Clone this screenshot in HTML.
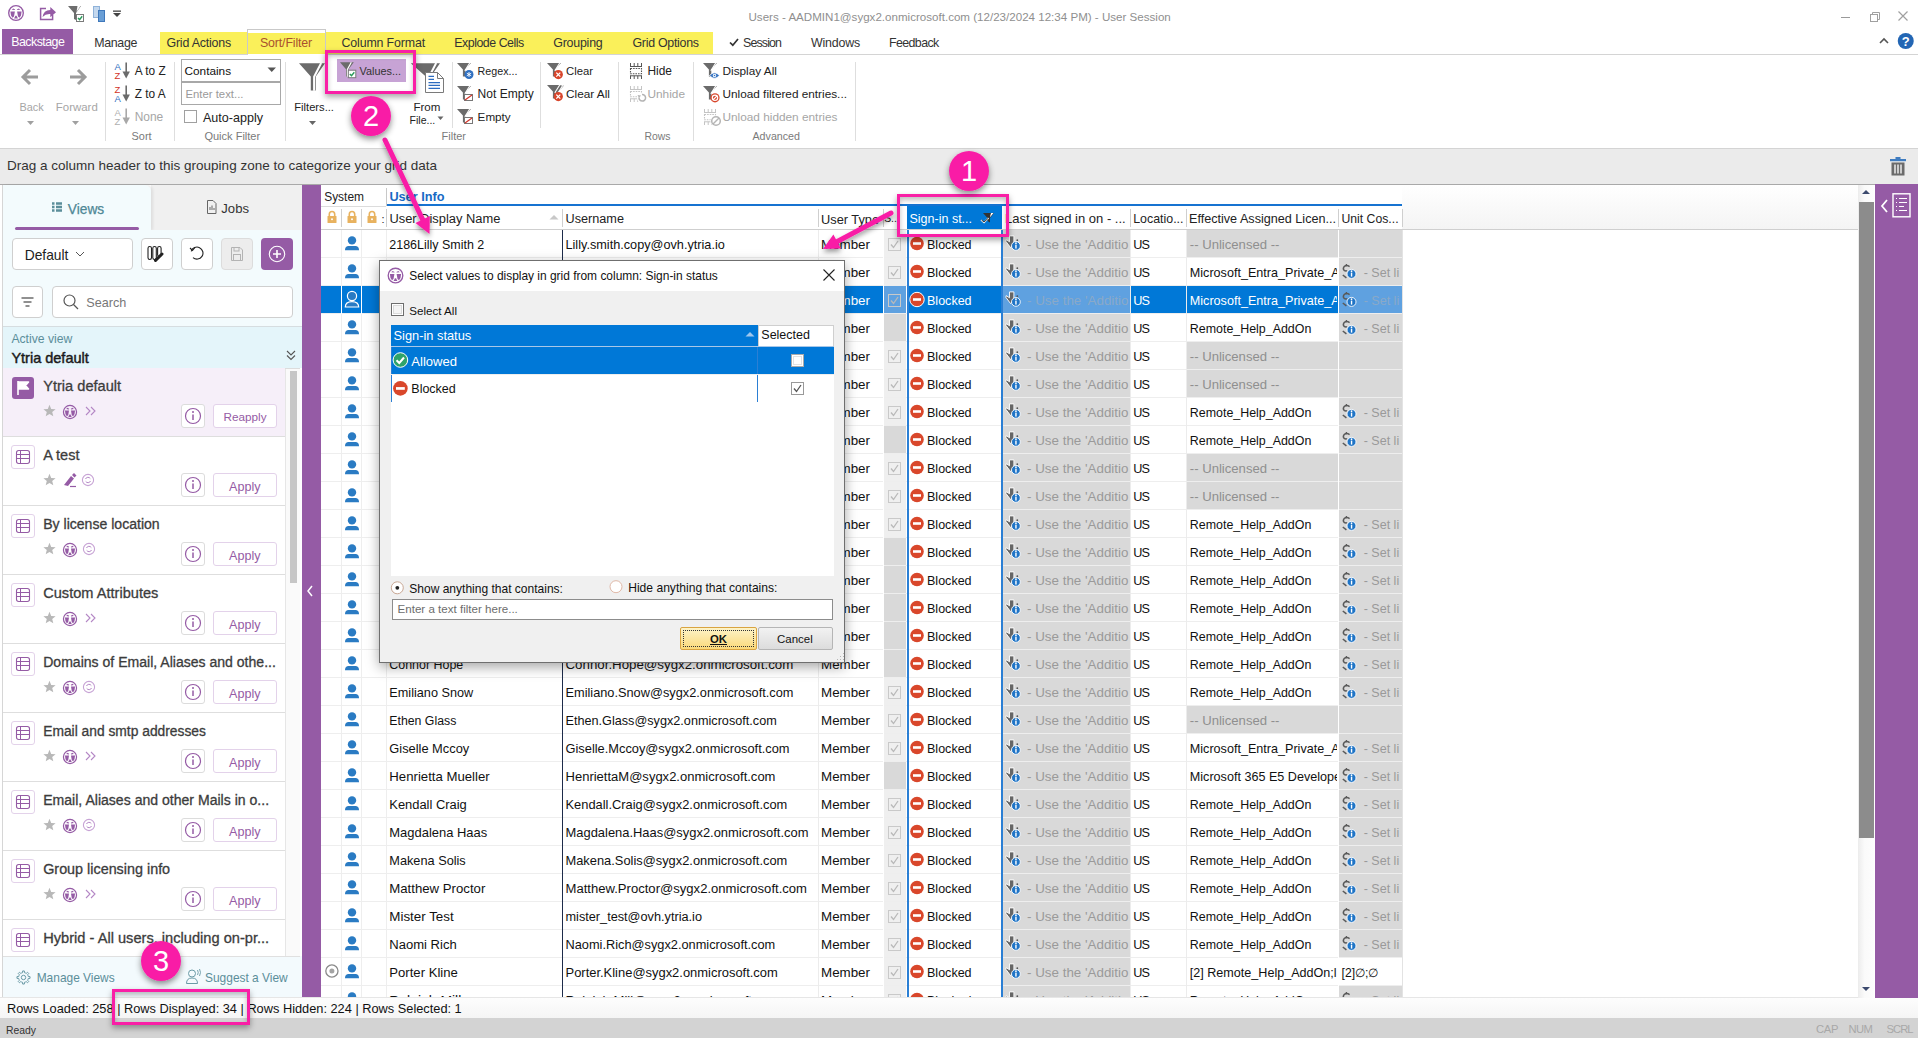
<!DOCTYPE html><html><head><meta charset="utf-8"><title>Users</title><style>
*{box-sizing:border-box;margin:0;padding:0}
html,body{width:1920px;height:1038px;overflow:hidden;background:#fff;font-family:"Liberation Sans",sans-serif;color:#1e1e1e}
.a{position:absolute}
.t{position:absolute;white-space:nowrap;line-height:1}
svg.i{position:absolute;overflow:visible}
</style></head><body>
<svg class="i" style="left:0px;top:0px;" width="32" height="28" viewBox="0 0 32 28"><circle cx="16" cy="13" r="7.30" fill="none" stroke="#955ba5" stroke-width="1.35"/><path d="M11.70 9.80 L13.20 8.40 L15.10 9.40 L14.80 10.10Z M20.30 9.80 L18.80 8.40 L16.90 9.40 L17.20 10.10Z" fill="#955ba5"/><path d="M10.40 11.40 L14.90 11.40 L14.00 16.60 L12.50 17.80 L11.00 15.40Z M21.60 11.40 L17.10 11.40 L18.00 16.60 L19.50 17.80 L21.00 15.40Z" fill="#955ba5"/><path d="M14.10 18.60 L17.90 18.60 L16.60 15.80 L15.40 15.80Z" fill="#955ba5"/></svg>
<svg class="i" style="left:38px;top:5px;" width="20" height="18" viewBox="0 0 20 18"><path d="M8 3.4 H2.6 V14.6 H14.6 V10" fill="none" stroke="#955ba5" stroke-width="1.5"/><path d="M4.5 12 Q5.5 5.2 12.3 5 V2 L18 7.2 L12.3 12.2 V9 Q7.6 8.6 4.5 12Z" fill="#955ba5"/></svg>
<svg class="i" style="left:66px;top:4px;" width="22" height="20" viewBox="0 0 22 20"><path d="M2 2 H15 L10 9 V16 L8 15 V9Z" fill="#6d6d6d"/><path d="M11.5 2 L14.5 2 L10.5 8" fill="#fff"/><rect x="10.5" y="10.5" width="7" height="7" fill="#fff" stroke="#7a7a7a" stroke-width="1"/><path d="M12 14 L13.6 15.6 L16.2 12.2" fill="none" stroke="#2a9a5a" stroke-width="1.4"/></svg>
<svg class="i" style="left:90px;top:4px;" width="20" height="20" viewBox="0 0 20 20"><rect x="3.5" y="2.5" width="6" height="11" fill="#c4d8ee" stroke="#8fb2d9" stroke-width="1"/><rect x="8.5" y="6.5" width="6" height="11" fill="#6a9fd6" stroke="#3f78bb" stroke-width="1"/></svg>
<svg class="i" style="left:110px;top:6px;" width="14" height="14" viewBox="0 0 14 14"><rect x="3" y="4.5" width="8" height="1.3" fill="#444"/><path d="M3 7 H11 L7 11Z" fill="#444"/></svg>
<div class="t" style="left:748.5px;top:12.0px;font-size:11.58px;color:#8f8f8f;font-weight:normal;">Users - AADMIN1@sygx2.onmicrosoft.com (12/23/2024 12:34 PM) - User Session</div>
<div class="a" style="left:1841px;top:17px;width:9px;height:1px;background:#9a9a9a;"></div>
<svg class="i" style="left:1868px;top:10px;" width="14" height="14" viewBox="0 0 14 14"><rect x="2.5" y="4.5" width="7" height="7" fill="none" stroke="#a0a0a0" stroke-width="1"/><path d="M4.5 4.5 V2.5 H11.5 V9.5 H9.5" fill="none" stroke="#a0a0a0" stroke-width="1"/></svg>
<svg class="i" style="left:1896px;top:9px;" width="14" height="14" viewBox="0 0 14 14"><path d="M2.5 2.5 L11.5 11.5 M11.5 2.5 L2.5 11.5" stroke="#a0a0a0" stroke-width="1.2"/></svg>
<div class="a" style="left:2px;top:29px;width:71px;height:25px;background:#955ba5;"></div>
<div class="t" style="left:11.3px;top:36.0px;font-size:12.40px;color:#fff;font-weight:normal;letter-spacing:-0.544px;">Backstage</div>
<div class="t" style="left:94.3px;top:37.0px;font-size:12.40px;color:#333;font-weight:normal;letter-spacing:-0.351px;">Manage</div>
<div class="a" style="left:160px;top:32px;width:553px;height:22px;background:#faf05a;"></div>
<div class="a" style="left:247px;top:29px;width:79px;height:26px;background:linear-gradient(#fff 0,#fff 3px,#faf05a 3px);border:1px solid #c9c9c9;border-bottom:none"></div>
<div class="t" style="left:166.5px;top:37.0px;font-size:12.40px;color:#333;font-weight:normal;letter-spacing:-0.196px;">Grid Actions</div>
<div class="t" style="left:260.0px;top:37.0px;font-size:12.40px;color:#a9502e;font-weight:normal;letter-spacing:-0.158px;">Sort/Filter</div>
<div class="t" style="left:341.5px;top:37.0px;font-size:12.40px;color:#333;font-weight:normal;letter-spacing:-0.149px;">Column Format</div>
<div class="t" style="left:454.3px;top:37.0px;font-size:12.40px;color:#333;font-weight:normal;letter-spacing:-0.486px;">Explode Cells</div>
<div class="t" style="left:553.3px;top:37.0px;font-size:12.40px;color:#333;font-weight:normal;letter-spacing:-0.226px;">Grouping</div>
<div class="t" style="left:632.5px;top:37.0px;font-size:12.40px;color:#333;font-weight:normal;letter-spacing:-0.283px;">Grid Options</div>
<svg class="i" style="left:728px;top:36px;" width="12" height="12" viewBox="0 0 12 12"><path d="M2 6.5 L4.8 9.2 L10 3" fill="none" stroke="#333" stroke-width="1.7"/></svg>
<div class="t" style="left:743.0px;top:37.0px;font-size:12.40px;color:#333;font-weight:normal;letter-spacing:-0.845px;">Session</div>
<div class="t" style="left:811.0px;top:37.0px;font-size:12.40px;color:#333;font-weight:normal;letter-spacing:-0.186px;">Windows</div>
<div class="t" style="left:889.0px;top:37.0px;font-size:12.40px;color:#333;font-weight:normal;letter-spacing:-0.594px;">Feedback</div>
<svg class="i" style="left:1878px;top:36px;" width="12" height="10" viewBox="0 0 12 10"><path d="M2 7 L6 3 L10 7" fill="none" stroke="#555" stroke-width="1.6"/></svg>
<svg class="i" style="left:1897px;top:33px;" width="18" height="18" viewBox="0 0 18 18"><circle cx="8.75" cy="8" r="8" fill="#2366b4"/><text x="8.75" y="12.6" text-anchor="middle" font-family="Liberation Sans" font-weight="bold" font-size="13" fill="#fff">?</text></svg>
<div class="a" style="left:0px;top:54px;width:1918px;height:1px;background:#d4d4d4;"></div>
<div class="a" style="left:248px;top:54px;width:77px;height:1px;background:#fff;"></div>
<svg class="i" style="left:20px;top:68px;" width="20" height="18" viewBox="0 0 20 18"><path d="M10 2 L3 9 L10 16 M3.5 9 H18" fill="none" stroke="#9c9c9c" stroke-width="3"/></svg>
<svg class="i" style="left:68px;top:68px;" width="20" height="18" viewBox="0 0 20 18"><path d="M10 2 L17 9 L10 16 M16.5 9 H2" fill="none" stroke="#9c9c9c" stroke-width="3"/></svg>
<div class="t" style="left:19.5px;top:102.0px;font-size:10.89px;color:#a6a6a6;font-weight:normal;">Back</div>
<div class="t" style="left:55.8px;top:102.0px;font-size:11.45px;color:#a6a6a6;font-weight:normal;">Forward</div>
<svg class="i" style="left:26px;top:120px;" width="10" height="6" viewBox="0 0 10 6"><path d="M1 1 H8 L4.5 5Z" fill="#a0a0a0"/></svg>
<svg class="i" style="left:71px;top:120px;" width="10" height="6" viewBox="0 0 10 6"><path d="M1 1 H8 L4.5 5Z" fill="#a0a0a0"/></svg>
<div class="a" style="left:105px;top:62px;width:1px;height:79px;background:#dedede;"></div>
<svg class="i" style="left:113px;top:61px;" width="20" height="20" viewBox="0 0 20 20"><text x="1.6" y="9.2" font-family="Liberation Sans" font-size="9.5" fill="#2f6fc0">A</text><text x="1.6" y="17.5" font-family="Liberation Sans" font-size="9.5" fill="#d2352a">Z</text><path d="M13.2 1.5 V13" stroke="#6b6b6b" stroke-width="1.6"/><path d="M9.5 10.5 L13.2 17.5 L16.9 10.5 Z" fill="#6b6b6b"/></svg>
<svg class="i" style="left:113px;top:84px;" width="20" height="20" viewBox="0 0 20 20"><text x="1.6" y="9.2" font-family="Liberation Sans" font-size="9.5" fill="#d2352a">Z</text><text x="1.6" y="17.5" font-family="Liberation Sans" font-size="9.5" fill="#2f6fc0">A</text><path d="M13.2 1.5 V13" stroke="#6b6b6b" stroke-width="1.6"/><path d="M9.5 10.5 L13.2 17.5 L16.9 10.5 Z" fill="#6b6b6b"/></svg>
<svg class="i" style="left:113px;top:107px;" width="20" height="20" viewBox="0 0 20 20"><text x="1.6" y="9.2" font-family="Liberation Sans" font-size="9.5" fill="#b0b0b0">A</text><text x="1.6" y="17.5" font-family="Liberation Sans" font-size="9.5" fill="#b0b0b0">Z</text><path d="M13.2 1.5 V13" stroke="#a8a8a8" stroke-width="1.6"/><path d="M9.5 10.5 L13.2 17.5 L16.9 10.5 Z" fill="#a8a8a8"/></svg>
<div class="t" style="left:134.7px;top:66.0px;font-size:11.87px;color:#222;font-weight:normal;">A to Z</div>
<div class="t" style="left:134.7px;top:89.0px;font-size:11.87px;color:#222;font-weight:normal;">Z to A</div>
<div class="t" style="left:134.7px;top:112.0px;font-size:11.96px;color:#a6a6a6;font-weight:normal;">None</div>
<div class="t" style="left:131.6px;top:131.0px;font-size:10.91px;color:#7a7a7a;font-weight:normal;">Sort</div>
<div class="a" style="left:174px;top:62px;width:1px;height:79px;background:#dedede;"></div>
<div class="a" style="left:181px;top:59px;width:100px;height:23px;background:#fff;border:1px solid #a8a8a8"></div>
<div class="t" style="left:184.5px;top:66.0px;font-size:11.81px;color:#111;font-weight:normal;">Contains</div>
<svg class="i" style="left:267px;top:67px;" width="10" height="6" viewBox="0 0 10 6"><path d="M0.5 0.5 H9 L4.75 5Z" fill="#555"/></svg>
<div class="a" style="left:181px;top:82px;width:100px;height:23px;background:#fff;border:1px solid #a8a8a8"></div>
<div class="t" style="left:185.5px;top:89.0px;font-size:11.34px;color:#9a9a9a;font-weight:normal;">Enter text...</div>
<div class="a" style="left:184px;top:110px;width:13px;height:13px;background:#fff;border:1px solid #a0a0a0"></div>
<div class="t" style="left:203.0px;top:112.0px;font-size:12.55px;color:#222;font-weight:normal;">Auto-apply</div>
<div class="t" style="left:204.4px;top:131.0px;font-size:11.04px;color:#7a7a7a;font-weight:normal;">Quick Filter</div>
<div class="a" style="left:285px;top:62px;width:1px;height:79px;background:#dedede;"></div>
<svg class="i" style="left:296px;top:60px;" width="32" height="34" viewBox="0 0 32 34"><path d="M3 3.3 H29 L19.8 16.5 V30.6 H14.8 V16.5 Z" fill="#6b6b6b"/><path d="M25.2 3 L18.1 16.8 V30.8" fill="none" stroke="#fff" stroke-width="2"/></svg>
<div class="t" style="left:294.3px;top:102.0px;font-size:11.17px;color:#222;font-weight:normal;">Filters...</div>
<svg class="i" style="left:308px;top:120px;" width="10" height="6" viewBox="0 0 10 6"><path d="M1 1 H8 L4.5 5Z" fill="#666"/></svg>
<div class="a" style="left:337px;top:59px;width:69px;height:23px;background:#c7a3d5;"></div>
<svg class="i" style="left:338px;top:61px;" width="20" height="20" viewBox="0 0 20 20"><path d="M2 1.3 H15.8 L10.6 8.3 V15.6 H8 V8.3 Z" fill="#6b6b6b"/><path d="M13.3 1.2 L9.4 8.5 V15.8" fill="none" stroke="#fff" stroke-width="1.2"/><rect x="10.3" y="9.2" width="7.5" height="7.5" fill="#fff" stroke="#7a7a7a" stroke-width="1"/><path d="M11.8 12.9 L13.5 14.6 L16.3 11.2" fill="none" stroke="#2a9a5a" stroke-width="1.4"/></svg>
<div class="t" style="left:359.5px;top:66.0px;font-size:10.87px;color:#333;font-weight:normal;">Values...</div>
<svg class="i" style="left:408px;top:60px;" width="40" height="36" viewBox="0 0 40 36"><path d="M2.8 3.3 H32 L22.8 16.5 V30.6 H17.8 V16.5 Z" fill="#6b6b6b"/><path d="M28.2 3 L21.1 16.8 V30.8" fill="none" stroke="#fff" stroke-width="2"/><path d="M17.5 12.5 H29.5 L35.5 18.5 V32.5 H17.5Z" fill="#fff" stroke="#7a7a7a" stroke-width="1"/><path d="M29.5 12.5 V18.5 H35.5" fill="none" stroke="#7a7a7a" stroke-width="1"/><path d="M20.5 16.4 H26 M20.5 19.3 H26 M20.5 22.7 H32 M20.5 25.3 H32 M20.5 28.3 H32" stroke="#2d6cc0" stroke-width="1.2"/></svg>
<div class="t" style="left:413.4px;top:102.0px;font-size:11.57px;color:#222;font-weight:normal;">From</div>
<div class="t" style="left:409.5px;top:115.0px;font-size:10.55px;color:#222;font-weight:normal;">File...</div>
<svg class="i" style="left:437px;top:116px;" width="8" height="5" viewBox="0 0 8 5"><path d="M0.5 0.5 H6.5 L3.5 4Z" fill="#666"/></svg>
<div class="a" style="left:452px;top:62px;width:1px;height:66px;background:#dedede;"></div>
<svg class="i" style="left:456px;top:61px;" width="20" height="20" viewBox="0 0 20 20"><path d="M1 2 H15 L9.3 8.6 V15.6 H6.9 V8.6 Z" fill="#6b6b6b"/><path d="M14.2 1.2 L8.8 9.8" stroke="#fff" stroke-width="1.1"/><circle cx="13" cy="13.5" r="4.5" fill="#2f6fc0"/><path d="M13 11 V16 M10.8 12.2 L15.2 14.8 M15.2 12.2 L10.8 14.8" stroke="#fff" stroke-width="0.9"/></svg>
<svg class="i" style="left:456px;top:84px;" width="20" height="20" viewBox="0 0 20 20"><path d="M1 2 H15 L9.3 8.6 V15.6 H6.9 V8.6 Z" fill="#6b6b6b"/><path d="M14.2 1.2 L8.8 9.8" stroke="#fff" stroke-width="1.1"/><rect x="8.5" y="10.5" width="8" height="6" fill="#fff" stroke="#777" stroke-width="1"/><path d="M9 16 L16 11" stroke="#d2352a" stroke-width="1.2"/></svg>
<svg class="i" style="left:456px;top:107px;" width="20" height="20" viewBox="0 0 20 20"><path d="M1 2 H15 L9.3 8.6 V15.6 H6.9 V8.6 Z" fill="#6b6b6b"/><path d="M14.2 1.2 L8.8 9.8" stroke="#fff" stroke-width="1.1"/><rect x="8.5" y="10.5" width="8" height="6" fill="#fff" stroke="#777" stroke-width="1"/><path d="M9 16 L16 11" stroke="#d2352a" stroke-width="1.2"/></svg>
<div class="t" style="left:477.6px;top:66.0px;font-size:10.69px;color:#222;font-weight:normal;">Regex...</div>
<div class="t" style="left:477.6px;top:88.0px;font-size:12.04px;color:#222;font-weight:normal;">Not Empty</div>
<div class="t" style="left:477.6px;top:111.0px;font-size:11.68px;color:#222;font-weight:normal;">Empty</div>
<div class="t" style="left:441.6px;top:131.0px;font-size:10.98px;color:#7a7a7a;font-weight:normal;">Filter</div>
<div class="a" style="left:540px;top:62px;width:1px;height:66px;background:#dedede;"></div>
<svg class="i" style="left:546px;top:61px;" width="20" height="20" viewBox="0 0 20 20"><path d="M1 2 H15 L9.3 8.6 V15.6 H6.9 V8.6 Z" fill="#6b6b6b"/><path d="M14.2 1.2 L8.8 9.8" stroke="#fff" stroke-width="1.1"/><circle cx="12.3" cy="13.6" r="4.6" fill="#d8452b"/><path d="M10.3 11.6 L14.3 15.6 M14.3 11.6 L10.3 15.6" stroke="#fff" stroke-width="1.3"/></svg>
<svg class="i" style="left:546px;top:83px;" width="20" height="20" viewBox="0 0 20 20"><path d="M4 2.5 H18 L12.3 9.1 V16.1 H9.9 V9.1 Z" fill="#6b6b6b"/><path d="M17.2 1.7 L11.8 10.3" stroke="#fff" stroke-width="1.1"/><path d="M1 2 H15 L9.3 8.6 V15.6 H6.9 V8.6 Z" fill="#6b6b6b"/><path d="M14.2 1.2 L8.8 9.8" stroke="#fff" stroke-width="1.1"/><circle cx="12.3" cy="13.6" r="4.6" fill="#d8452b"/><path d="M10.3 11.6 L14.3 15.6 M14.3 11.6 L10.3 15.6" stroke="#fff" stroke-width="1.3"/></svg>
<div class="t" style="left:566.0px;top:66.0px;font-size:11.30px;color:#222;font-weight:normal;">Clear</div>
<div class="t" style="left:566.0px;top:89.0px;font-size:11.82px;color:#222;font-weight:normal;">Clear All</div>
<div class="a" style="left:618px;top:62px;width:1px;height:79px;background:#dedede;"></div>
<svg class="i" style="left:628px;top:61px;" width="20" height="20" viewBox="0 0 20 20"><path d="M2.5 2 V5.5 M6.2 2 V5.5 M9.8 2 V5.5 M13.5 2 V5.5 M2 5.5 H14 M2 14.8 H14 M2.5 14.8 V18 M6.2 14.8 V18 M9.8 14.8 V18 M13.5 14.8 V18" stroke="#555" stroke-width="1"/><rect x="2.5" y="7.5" width="11" height="5.3" fill="none" stroke="#555" stroke-width="1.1" stroke-dasharray="1.6 1"/></svg>
<svg class="i" style="left:628px;top:84px;" width="20" height="20" viewBox="0 0 20 20"><path d="M2.5 2 V5.5 M6.2 2 V5.5 M9.8 2 V5.5 M13.5 2 V5.5 M2 5.5 H14 M2 14.8 H14 M2.5 14.8 V18 M6.2 14.8 V18 M9.8 14.8 V18 M13.5 14.8 V18" stroke="#c4c4c4" stroke-width="1"/><rect x="2.5" y="7.5" width="11" height="5.3" fill="none" stroke="#c4c4c4" stroke-width="1.1" stroke-dasharray="1.6 1"/><circle cx="14" cy="14" r="5" fill="#fff"/><path d="M11 13.5 A3.3 3.3 0 1 0 14 10.5" fill="none" stroke="#b5b5b5" stroke-width="1.5"/><path d="M9.5 11 L11 14 L13 11.5Z" fill="#b5b5b5"/></svg>
<div class="t" style="left:647.5px;top:66.0px;font-size:11.91px;color:#222;font-weight:normal;">Hide</div>
<div class="t" style="left:647.5px;top:89.0px;font-size:11.83px;color:#a6a6a6;font-weight:normal;">Unhide</div>
<div class="t" style="left:644.5px;top:132.0px;font-size:10.40px;color:#7a7a7a;font-weight:normal;">Rows</div>
<div class="a" style="left:693px;top:62px;width:1px;height:79px;background:#dedede;"></div>
<svg class="i" style="left:702px;top:61px;" width="20" height="20" viewBox="0 0 20 20"><path d="M1 2 H15 L9.3 8.6 V15.6 H6.9 V8.6 Z" fill="#6b6b6b"/><path d="M14.2 1.2 L8.8 9.8" stroke="#fff" stroke-width="1.1"/><path d="M7.5 14.5 Q12.5 9 17.5 14.5 Q12.5 20 7.5 14.5Z" fill="#2f6fc0" stroke="#fff" stroke-width="0.8"/><circle cx="12.5" cy="14.5" r="1.7" fill="#fff"/><circle cx="12.5" cy="14.5" r="0.8" fill="#2f6fc0"/></svg>
<svg class="i" style="left:702px;top:84px;" width="20" height="20" viewBox="0 0 20 20"><path d="M1 2 H15 L9.3 8.6 V15.6 H6.9 V8.6 Z" fill="#6b6b6b"/><path d="M14.2 1.2 L8.8 9.8" stroke="#fff" stroke-width="1.1"/><circle cx="13" cy="13.8" r="4.6" fill="#d8452b"/><circle cx="13" cy="13.8" r="2.7" fill="none" stroke="#fff" stroke-width="1.2"/><path d="M11 15.8 L15 11.8" stroke="#fff" stroke-width="1.2"/></svg>
<svg class="i" style="left:702px;top:107px;" width="20" height="20" viewBox="0 0 20 20"><path d="M2.5 2 V5.5 M6.2 2 V5.5 M9.8 2 V5.5 M13.5 2 V5.5 M2 5.5 H14 M2 14.8 H14 M2.5 14.8 V18 M6.2 14.8 V18 M9.8 14.8 V18 M13.5 14.8 V18" stroke="#c4c4c4" stroke-width="1"/><rect x="2.5" y="7.5" width="11" height="5.3" fill="none" stroke="#c4c4c4" stroke-width="1.1" stroke-dasharray="1.6 1"/><circle cx="14" cy="14" r="5.6" fill="#fff"/><circle cx="14" cy="14" r="4.3" fill="none" stroke="#b5b5b5" stroke-width="1.5"/><path d="M11 17 L17 11" stroke="#b5b5b5" stroke-width="1.5"/></svg>
<div class="t" style="left:722.5px;top:66.0px;font-size:11.81px;color:#222;font-weight:normal;">Display All</div>
<div class="t" style="left:722.5px;top:88.0px;font-size:11.79px;color:#222;font-weight:normal;">Unload filtered entries...</div>
<div class="t" style="left:722.5px;top:112.0px;font-size:11.82px;color:#a6a6a6;font-weight:normal;">Unload hidden entries</div>
<div class="t" style="left:752.5px;top:131.0px;font-size:10.68px;color:#7a7a7a;font-weight:normal;">Advanced</div>
<div class="a" style="left:855px;top:62px;width:1px;height:79px;background:#dedede;"></div>
<div class="a" style="left:0px;top:148px;width:1918px;height:1px;background:#d4d4d4;"></div>
<div class="a" style="left:0px;top:149px;width:1918px;height:35px;background:#ebebeb;"></div>
<div class="t" style="left:7.0px;top:159.0px;font-size:13.50px;color:#333;font-weight:normal;">Drag a column header to this grouping zone to categorize your grid data</div>
<div class="a" style="left:0px;top:184px;width:1918px;height:1px;background:#a9a9a9;"></div>
<svg class="i" style="left:1888px;top:156px;" width="20" height="22" viewBox="0 0 20 22"><rect x="2" y="3" width="16" height="2.2" fill="#3f7cc0"/><rect x="7.5" y="1" width="5" height="2.5" fill="#3f7cc0"/><rect x="3.5" y="6.5" width="13" height="13" fill="#6b6b6b"/><path d="M7 8.5 V17.5 M10 8.5 V17.5 M13 8.5 V17.5" stroke="#fff" stroke-width="1.3"/></svg>
<div class="a" style="left:2px;top:185px;width:300px;height:812px;background:#fff;"></div>
<div class="a" style="left:2px;top:185px;width:1px;height:812px;background:#d8d8d8;"></div>
<div class="a" style="left:151px;top:185px;width:151px;height:45px;background:#f0f0f0;"></div>
<div class="a" style="left:3px;top:185px;width:148px;height:45px;background:#f3fbfd;border-top-right-radius:6px;box-shadow:2px 0 3px rgba(0,0,0,0.08)"></div>
<div class="a" style="left:15px;top:227px;width:124px;height:3px;background:#955ba5;border-radius:2px"></div>
<svg class="i" style="left:50px;top:201px;" width="14" height="14" viewBox="0 0 14 14"><path d="M2 2.5 H4.5 M6 2.5 H12 M2 6 H4.5 M6 6 H12 M2 9.5 H4.5 M6 9.5 H12" stroke="#5b8e9a" stroke-width="2.6"/></svg>
<div class="t" style="left:67.8px;top:203.0px;font-size:13.74px;color:#4f8896;font-weight:normal;-webkit-text-stroke:0.25px #4f8896">Views</div>
<svg class="i" style="left:204px;top:199px;" width="14" height="16" viewBox="0 0 14 16"><path d="M3.5 1.5 H9 L12 4.5 V14.5 H3.5Z" fill="none" stroke="#666" stroke-width="1"/><path d="M6 11 V8 M8 11 V6.5 M10 11 V9" stroke="#666" stroke-width="1"/></svg>
<div class="t" style="left:221.3px;top:202.0px;font-size:13.11px;color:#333;font-weight:normal;">Jobs</div>
<div class="a" style="left:2px;top:230px;width:300px;height:97px;background:#f3fbfd;"></div>
<div class="a" style="left:12px;top:238px;width:121px;height:32px;background:#fff;border:1px solid #cfcfcf;border-radius:4px"></div>
<div class="t" style="left:24.7px;top:249.0px;font-size:13.79px;color:#222;font-weight:normal;">Default</div>
<svg class="i" style="left:74px;top:250px;" width="12" height="8" viewBox="0 0 12 8"><path d="M2 2 L6 6 L10 2" fill="none" stroke="#555" stroke-width="1"/></svg>
<div class="a" style="left:141px;top:238px;width:32px;height:32px;background:#fff;border:1px solid #cfcfcf;border-radius:4px"></div>
<svg class="i" style="left:146px;top:245px;" width="22" height="20" viewBox="0 0 22 20"><rect x="2" y="1.5" width="3.5" height="13" rx="1.7" fill="none" stroke="#222" stroke-width="1.1"/><rect x="6.8" y="1.5" width="3.5" height="13" rx="1.7" fill="none" stroke="#222" stroke-width="1.1"/><rect x="11.6" y="1.5" width="3.5" height="10" rx="1.7" fill="none" stroke="#222" stroke-width="1.1"/><path d="M9.5 15.5 L16 9" stroke="#222" stroke-width="3" stroke-linecap="round"/></svg>
<div class="a" style="left:181px;top:238px;width:32px;height:32px;background:#fff;border:1px solid #cfcfcf;border-radius:4px"></div>
<svg class="i" style="left:187px;top:244px;" width="20" height="20" viewBox="0 0 20 20"><path d="M5.5 5.5 A6 6 0 1 1 5 12" fill="none" stroke="#222" stroke-width="1.1" transform="rotate(-20 10 10)"/><path d="M3 4 L5.5 6.5 L8 3.5" fill="none" stroke="#222" stroke-width="1.1"/></svg>
<div class="a" style="left:221px;top:238px;width:32px;height:32px;background:#ededed;border:1px solid #dcdcdc;border-radius:4px"></div>
<svg class="i" style="left:227px;top:244px;" width="20" height="20" viewBox="0 0 20 20"><path d="M4.5 3.5 H13 L15.5 6 V16.5 H4.5Z" fill="none" stroke="#b3b3b3" stroke-width="1"/><rect x="7" y="3.5" width="5" height="3.5" fill="none" stroke="#b3b3b3" stroke-width="1"/><rect x="6.5" y="10.5" width="7" height="6" fill="none" stroke="#b3b3b3" stroke-width="1"/></svg>
<div class="a" style="left:261px;top:238px;width:32px;height:32px;background:#955ba5;border-radius:4px"></div>
<svg class="i" style="left:267px;top:244px;" width="20" height="20" viewBox="0 0 20 20"><circle cx="10" cy="10" r="7.7" fill="none" stroke="#fff" stroke-width="1.1"/><path d="M10 6 V14 M6 10 H14" stroke="#fff" stroke-width="1.6"/></svg>
<div class="a" style="left:12px;top:286px;width:31px;height:32px;background:#fff;border:1px solid #cfcfcf;border-radius:4px"></div>
<svg class="i" style="left:18px;top:292px;" width="20" height="20" viewBox="0 0 20 20"><path d="M3.5 6 H15.5 M5.5 10 H13.5 M7.5 14 H11.5" stroke="#222" stroke-width="1.1"/></svg>
<div class="a" style="left:52px;top:286px;width:241px;height:32px;background:#fff;border:1px solid #cfcfcf;border-radius:4px"></div>
<svg class="i" style="left:61px;top:292px;" width="20" height="20" viewBox="0 0 20 20"><circle cx="8.5" cy="8.5" r="5.5" fill="none" stroke="#555" stroke-width="1.2"/><path d="M12.5 12.5 L17 17" stroke="#555" stroke-width="1.3"/></svg>
<div class="t" style="left:86.3px;top:297.0px;font-size:12.63px;color:#777;font-weight:normal;">Search</div>
<div class="a" style="left:2px;top:326px;width:300px;height:1px;background:#d6dde0;"></div>
<div class="a" style="left:2px;top:327px;width:300px;height:41px;background:#e4f5fa;"></div>
<div class="t" style="left:11.4px;top:333.0px;font-size:12.20px;color:#5b8e9a;font-weight:normal;">Active view</div>
<div class="t" style="left:11.4px;top:351.0px;font-size:14.50px;color:#1a1a1a;font-weight:normal;-webkit-text-stroke:0.45px #1a1a1a">Ytria default</div>
<svg class="i" style="left:284px;top:348px;" width="14" height="14" viewBox="0 0 14 14"><path d="M3 3 L7 7 L11 3 M3 7.5 L7 11.5 L11 7.5" fill="none" stroke="#555" stroke-width="1.1"/></svg>
<div class="a" style="left:2px;top:368px;width:298px;height:1px;background:#dcdcdc;"></div>
<div class="a" style="left:2px;top:368px;width:283px;height:68px;background:#f6eff9;"></div>
<div class="a" style="left:12px;top:377px;width:22px;height:22px;background:#955ba5;border-radius:3px"></div>
<svg class="i" style="left:12px;top:377px;" width="22" height="22" viewBox="0 0 22 22"><path d="M6 4 V18 M6 5 H16.5 L13.5 8.5 L16.5 12 H6" fill="#fff" stroke="#fff" stroke-width="1.6" stroke-linejoin="round"/></svg>
<div class="t" style="left:43.2px;top:379.0px;font-size:14.62px;color:#3c3c3c;font-weight:normal;-webkit-text-stroke:0.3px #3c3c3c">Ytria default</div>
<svg class="i" style="left:43px;top:404px;" width="14" height="14" viewBox="0 0 14 14"><path d="M6.5 0.8 L8.2 5 L12.6 5.2 L9.2 8 L10.3 12.3 L6.5 9.9 L2.7 12.3 L3.8 8 L0.4 5.2 L4.8 5Z" fill="#b8b8b8"/></svg>
<svg class="i" style="left:62px;top:404px;" width="16" height="16" viewBox="0 0 16 16"><circle cx="8" cy="8" r="6.57" fill="none" stroke="#955ba5" stroke-width="1.22"/><path d="M4.13 5.12 L5.48 3.86 L7.19 4.76 L6.92 5.39Z M11.87 5.12 L10.52 3.86 L8.81 4.76 L9.08 5.39Z" fill="#955ba5"/><path d="M2.96 6.56 L7.01 6.56 L6.20 11.24 L4.85 12.32 L3.50 10.16Z M13.04 6.56 L8.99 6.56 L9.80 11.24 L11.15 12.32 L12.50 10.16Z" fill="#955ba5"/><path d="M6.29 13.04 L9.71 13.04 L8.54 10.52 L7.46 10.52Z" fill="#955ba5"/></svg>
<svg class="i" style="left:83px;top:405px;" width="14" height="12" viewBox="0 0 14 12"><path d="M3 2 L7 6 L3 10 M8 2 L12 6 L8 10" fill="none" stroke="#b487c5" stroke-width="1.1"/></svg>
<div class="a" style="left:181px;top:404px;width:24px;height:24px;background:#fff;border:1px solid #dcdcdc;border-radius:3px"></div>
<svg class="i" style="left:181px;top:404px;" width="24" height="24" viewBox="0 0 24 24"><circle cx="12" cy="12" r="7.5" fill="none" stroke="#955ba5" stroke-width="1.2"/><path d="M12 10.5 V16" stroke="#955ba5" stroke-width="1.5"/><circle cx="12" cy="8" r="1" fill="#955ba5"/></svg>
<div class="a" style="left:213px;top:404px;width:64px;height:24px;background:#fff;border:1px solid #e3d2ea;border-radius:3px"></div>
<div class="t" style="left:223.5px;top:411.0px;font-size:11.72px;color:#955ba5;font-weight:normal;">Reapply</div>
<div class="a" style="left:2px;top:436px;width:283px;height:1px;background:#dedede;"></div>
<div class="a" style="left:11px;top:445px;width:24px;height:24px;background:#fff;border:1px solid #e3d2ea;border-radius:3px"></div>
<svg class="i" style="left:11px;top:445px;" width="24" height="24" viewBox="0 0 24 24"><rect x="5.5" y="5.5" width="13" height="13" rx="2.2" fill="none" stroke="#955ba5" stroke-width="1.1"/><path d="M5.5 9.5 H18.5 M5.5 13.5 H18.5 M9.5 5.5 V18.5" stroke="#955ba5" stroke-width="1"/></svg>
<div class="t" style="left:43.2px;top:448.0px;font-size:14.51px;color:#3c3c3c;font-weight:normal;-webkit-text-stroke:0.3px #3c3c3c">A test</div>
<svg class="i" style="left:43px;top:473px;" width="14" height="14" viewBox="0 0 14 14"><path d="M6.5 0.8 L8.2 5 L12.6 5.2 L9.2 8 L10.3 12.3 L6.5 9.9 L2.7 12.3 L3.8 8 L0.4 5.2 L4.8 5Z" fill="#b8b8b8"/></svg>
<svg class="i" style="left:62px;top:472px;" width="16" height="16" viewBox="0 0 16 16"><path d="M2 13 L9 4 L12 6.5 L6 14Z M10 3 L12 1 L14.5 3.5 L12.5 5.5Z" fill="#955ba5"/><path d="M8 14.5 H14" stroke="#955ba5" stroke-width="1.2"/></svg>
<svg class="i" style="left:81px;top:473px;" width="14" height="14" viewBox="0 0 14 14"><circle cx="7" cy="7" r="5.6" fill="none" stroke="#c7a3d5" stroke-width="1.1"/><path d="M4.5 6 A2.7 2.7 0 0 1 9.3 5.6 M9.5 8 A2.7 2.7 0 0 1 4.7 8.4" fill="none" stroke="#b487c5" stroke-width="1"/></svg>
<div class="a" style="left:181px;top:473px;width:24px;height:24px;background:#fff;border:1px solid #dcdcdc;border-radius:3px"></div>
<svg class="i" style="left:181px;top:473px;" width="24" height="24" viewBox="0 0 24 24"><circle cx="12" cy="12" r="7.5" fill="none" stroke="#955ba5" stroke-width="1.2"/><path d="M12 10.5 V16" stroke="#955ba5" stroke-width="1.5"/><circle cx="12" cy="8" r="1" fill="#955ba5"/></svg>
<div class="a" style="left:213px;top:473px;width:64px;height:24px;background:#fff;border:1px solid #e3d2ea;border-radius:3px"></div>
<div class="t" style="left:229.0px;top:481.0px;font-size:12.59px;color:#955ba5;font-weight:normal;">Apply</div>
<div class="a" style="left:2px;top:505px;width:283px;height:1px;background:#dedede;"></div>
<div class="a" style="left:11px;top:514px;width:24px;height:24px;background:#fff;border:1px solid #e3d2ea;border-radius:3px"></div>
<svg class="i" style="left:11px;top:514px;" width="24" height="24" viewBox="0 0 24 24"><rect x="5.5" y="5.5" width="13" height="13" rx="2.2" fill="none" stroke="#955ba5" stroke-width="1.1"/><path d="M5.5 9.5 H18.5 M5.5 13.5 H18.5 M9.5 5.5 V18.5" stroke="#955ba5" stroke-width="1"/></svg>
<div class="t" style="left:43.2px;top:517.0px;font-size:14.07px;color:#3c3c3c;font-weight:normal;-webkit-text-stroke:0.3px #3c3c3c">By license location</div>
<svg class="i" style="left:43px;top:542px;" width="14" height="14" viewBox="0 0 14 14"><path d="M6.5 0.8 L8.2 5 L12.6 5.2 L9.2 8 L10.3 12.3 L6.5 9.9 L2.7 12.3 L3.8 8 L0.4 5.2 L4.8 5Z" fill="#b8b8b8"/></svg>
<svg class="i" style="left:62px;top:542px;" width="16" height="16" viewBox="0 0 16 16"><circle cx="8" cy="8" r="6.57" fill="none" stroke="#955ba5" stroke-width="1.22"/><path d="M4.13 5.12 L5.48 3.86 L7.19 4.76 L6.92 5.39Z M11.87 5.12 L10.52 3.86 L8.81 4.76 L9.08 5.39Z" fill="#955ba5"/><path d="M2.96 6.56 L7.01 6.56 L6.20 11.24 L4.85 12.32 L3.50 10.16Z M13.04 6.56 L8.99 6.56 L9.80 11.24 L11.15 12.32 L12.50 10.16Z" fill="#955ba5"/><path d="M6.29 13.04 L9.71 13.04 L8.54 10.52 L7.46 10.52Z" fill="#955ba5"/></svg>
<svg class="i" style="left:82px;top:542px;" width="14" height="14" viewBox="0 0 14 14"><circle cx="7" cy="7" r="5.6" fill="none" stroke="#c7a3d5" stroke-width="1.1"/><path d="M4.5 6 A2.7 2.7 0 0 1 9.3 5.6 M9.5 8 A2.7 2.7 0 0 1 4.7 8.4" fill="none" stroke="#b487c5" stroke-width="1"/></svg>
<div class="a" style="left:181px;top:542px;width:24px;height:24px;background:#fff;border:1px solid #dcdcdc;border-radius:3px"></div>
<svg class="i" style="left:181px;top:542px;" width="24" height="24" viewBox="0 0 24 24"><circle cx="12" cy="12" r="7.5" fill="none" stroke="#955ba5" stroke-width="1.2"/><path d="M12 10.5 V16" stroke="#955ba5" stroke-width="1.5"/><circle cx="12" cy="8" r="1" fill="#955ba5"/></svg>
<div class="a" style="left:213px;top:542px;width:64px;height:24px;background:#fff;border:1px solid #e3d2ea;border-radius:3px"></div>
<div class="t" style="left:229.0px;top:550.0px;font-size:12.59px;color:#955ba5;font-weight:normal;">Apply</div>
<div class="a" style="left:2px;top:574px;width:283px;height:1px;background:#dedede;"></div>
<div class="a" style="left:11px;top:583px;width:24px;height:24px;background:#fff;border:1px solid #e3d2ea;border-radius:3px"></div>
<svg class="i" style="left:11px;top:583px;" width="24" height="24" viewBox="0 0 24 24"><rect x="5.5" y="5.5" width="13" height="13" rx="2.2" fill="none" stroke="#955ba5" stroke-width="1.1"/><path d="M5.5 9.5 H18.5 M5.5 13.5 H18.5 M9.5 5.5 V18.5" stroke="#955ba5" stroke-width="1"/></svg>
<div class="t" style="left:43.2px;top:586.0px;font-size:14.60px;color:#3c3c3c;font-weight:normal;-webkit-text-stroke:0.3px #3c3c3c">Custom Attributes</div>
<svg class="i" style="left:43px;top:611px;" width="14" height="14" viewBox="0 0 14 14"><path d="M6.5 0.8 L8.2 5 L12.6 5.2 L9.2 8 L10.3 12.3 L6.5 9.9 L2.7 12.3 L3.8 8 L0.4 5.2 L4.8 5Z" fill="#b8b8b8"/></svg>
<svg class="i" style="left:62px;top:611px;" width="16" height="16" viewBox="0 0 16 16"><circle cx="8" cy="8" r="6.57" fill="none" stroke="#955ba5" stroke-width="1.22"/><path d="M4.13 5.12 L5.48 3.86 L7.19 4.76 L6.92 5.39Z M11.87 5.12 L10.52 3.86 L8.81 4.76 L9.08 5.39Z" fill="#955ba5"/><path d="M2.96 6.56 L7.01 6.56 L6.20 11.24 L4.85 12.32 L3.50 10.16Z M13.04 6.56 L8.99 6.56 L9.80 11.24 L11.15 12.32 L12.50 10.16Z" fill="#955ba5"/><path d="M6.29 13.04 L9.71 13.04 L8.54 10.52 L7.46 10.52Z" fill="#955ba5"/></svg>
<svg class="i" style="left:83px;top:612px;" width="14" height="12" viewBox="0 0 14 12"><path d="M3 2 L7 6 L3 10 M8 2 L12 6 L8 10" fill="none" stroke="#b487c5" stroke-width="1.1"/></svg>
<div class="a" style="left:181px;top:611px;width:24px;height:24px;background:#fff;border:1px solid #dcdcdc;border-radius:3px"></div>
<svg class="i" style="left:181px;top:611px;" width="24" height="24" viewBox="0 0 24 24"><circle cx="12" cy="12" r="7.5" fill="none" stroke="#955ba5" stroke-width="1.2"/><path d="M12 10.5 V16" stroke="#955ba5" stroke-width="1.5"/><circle cx="12" cy="8" r="1" fill="#955ba5"/></svg>
<div class="a" style="left:213px;top:611px;width:64px;height:24px;background:#fff;border:1px solid #e3d2ea;border-radius:3px"></div>
<div class="t" style="left:229.0px;top:619.0px;font-size:12.59px;color:#955ba5;font-weight:normal;">Apply</div>
<div class="a" style="left:2px;top:643px;width:283px;height:1px;background:#dedede;"></div>
<div class="a" style="left:11px;top:652px;width:24px;height:24px;background:#fff;border:1px solid #e3d2ea;border-radius:3px"></div>
<svg class="i" style="left:11px;top:652px;" width="24" height="24" viewBox="0 0 24 24"><rect x="5.5" y="5.5" width="13" height="13" rx="2.2" fill="none" stroke="#955ba5" stroke-width="1.1"/><path d="M5.5 9.5 H18.5 M5.5 13.5 H18.5 M9.5 5.5 V18.5" stroke="#955ba5" stroke-width="1"/></svg>
<div class="t" style="left:43.2px;top:655.0px;font-size:14.05px;color:#3c3c3c;font-weight:normal;-webkit-text-stroke:0.3px #3c3c3c">Domains of Email, Aliases and othe...</div>
<svg class="i" style="left:43px;top:680px;" width="14" height="14" viewBox="0 0 14 14"><path d="M6.5 0.8 L8.2 5 L12.6 5.2 L9.2 8 L10.3 12.3 L6.5 9.9 L2.7 12.3 L3.8 8 L0.4 5.2 L4.8 5Z" fill="#b8b8b8"/></svg>
<svg class="i" style="left:62px;top:680px;" width="16" height="16" viewBox="0 0 16 16"><circle cx="8" cy="8" r="6.57" fill="none" stroke="#955ba5" stroke-width="1.22"/><path d="M4.13 5.12 L5.48 3.86 L7.19 4.76 L6.92 5.39Z M11.87 5.12 L10.52 3.86 L8.81 4.76 L9.08 5.39Z" fill="#955ba5"/><path d="M2.96 6.56 L7.01 6.56 L6.20 11.24 L4.85 12.32 L3.50 10.16Z M13.04 6.56 L8.99 6.56 L9.80 11.24 L11.15 12.32 L12.50 10.16Z" fill="#955ba5"/><path d="M6.29 13.04 L9.71 13.04 L8.54 10.52 L7.46 10.52Z" fill="#955ba5"/></svg>
<svg class="i" style="left:82px;top:680px;" width="14" height="14" viewBox="0 0 14 14"><circle cx="7" cy="7" r="5.6" fill="none" stroke="#c7a3d5" stroke-width="1.1"/><path d="M4.5 6 A2.7 2.7 0 0 1 9.3 5.6 M9.5 8 A2.7 2.7 0 0 1 4.7 8.4" fill="none" stroke="#b487c5" stroke-width="1"/></svg>
<div class="a" style="left:181px;top:680px;width:24px;height:24px;background:#fff;border:1px solid #dcdcdc;border-radius:3px"></div>
<svg class="i" style="left:181px;top:680px;" width="24" height="24" viewBox="0 0 24 24"><circle cx="12" cy="12" r="7.5" fill="none" stroke="#955ba5" stroke-width="1.2"/><path d="M12 10.5 V16" stroke="#955ba5" stroke-width="1.5"/><circle cx="12" cy="8" r="1" fill="#955ba5"/></svg>
<div class="a" style="left:213px;top:680px;width:64px;height:24px;background:#fff;border:1px solid #e3d2ea;border-radius:3px"></div>
<div class="t" style="left:229.0px;top:688.0px;font-size:12.59px;color:#955ba5;font-weight:normal;">Apply</div>
<div class="a" style="left:2px;top:712px;width:283px;height:1px;background:#dedede;"></div>
<div class="a" style="left:11px;top:721px;width:24px;height:24px;background:#fff;border:1px solid #e3d2ea;border-radius:3px"></div>
<svg class="i" style="left:11px;top:721px;" width="24" height="24" viewBox="0 0 24 24"><rect x="5.5" y="5.5" width="13" height="13" rx="2.2" fill="none" stroke="#955ba5" stroke-width="1.1"/><path d="M5.5 9.5 H18.5 M5.5 13.5 H18.5 M9.5 5.5 V18.5" stroke="#955ba5" stroke-width="1"/></svg>
<div class="t" style="left:43.2px;top:725.0px;font-size:13.82px;color:#3c3c3c;font-weight:normal;-webkit-text-stroke:0.3px #3c3c3c">Email and smtp addresses</div>
<svg class="i" style="left:43px;top:749px;" width="14" height="14" viewBox="0 0 14 14"><path d="M6.5 0.8 L8.2 5 L12.6 5.2 L9.2 8 L10.3 12.3 L6.5 9.9 L2.7 12.3 L3.8 8 L0.4 5.2 L4.8 5Z" fill="#b8b8b8"/></svg>
<svg class="i" style="left:62px;top:749px;" width="16" height="16" viewBox="0 0 16 16"><circle cx="8" cy="8" r="6.57" fill="none" stroke="#955ba5" stroke-width="1.22"/><path d="M4.13 5.12 L5.48 3.86 L7.19 4.76 L6.92 5.39Z M11.87 5.12 L10.52 3.86 L8.81 4.76 L9.08 5.39Z" fill="#955ba5"/><path d="M2.96 6.56 L7.01 6.56 L6.20 11.24 L4.85 12.32 L3.50 10.16Z M13.04 6.56 L8.99 6.56 L9.80 11.24 L11.15 12.32 L12.50 10.16Z" fill="#955ba5"/><path d="M6.29 13.04 L9.71 13.04 L8.54 10.52 L7.46 10.52Z" fill="#955ba5"/></svg>
<svg class="i" style="left:83px;top:750px;" width="14" height="12" viewBox="0 0 14 12"><path d="M3 2 L7 6 L3 10 M8 2 L12 6 L8 10" fill="none" stroke="#b487c5" stroke-width="1.1"/></svg>
<div class="a" style="left:181px;top:749px;width:24px;height:24px;background:#fff;border:1px solid #dcdcdc;border-radius:3px"></div>
<svg class="i" style="left:181px;top:749px;" width="24" height="24" viewBox="0 0 24 24"><circle cx="12" cy="12" r="7.5" fill="none" stroke="#955ba5" stroke-width="1.2"/><path d="M12 10.5 V16" stroke="#955ba5" stroke-width="1.5"/><circle cx="12" cy="8" r="1" fill="#955ba5"/></svg>
<div class="a" style="left:213px;top:749px;width:64px;height:24px;background:#fff;border:1px solid #e3d2ea;border-radius:3px"></div>
<div class="t" style="left:229.0px;top:757.0px;font-size:12.59px;color:#955ba5;font-weight:normal;">Apply</div>
<div class="a" style="left:2px;top:781px;width:283px;height:1px;background:#dedede;"></div>
<div class="a" style="left:11px;top:790px;width:24px;height:24px;background:#fff;border:1px solid #e3d2ea;border-radius:3px"></div>
<svg class="i" style="left:11px;top:790px;" width="24" height="24" viewBox="0 0 24 24"><rect x="5.5" y="5.5" width="13" height="13" rx="2.2" fill="none" stroke="#955ba5" stroke-width="1.1"/><path d="M5.5 9.5 H18.5 M5.5 13.5 H18.5 M9.5 5.5 V18.5" stroke="#955ba5" stroke-width="1"/></svg>
<div class="t" style="left:43.2px;top:793.0px;font-size:14.07px;color:#3c3c3c;font-weight:normal;-webkit-text-stroke:0.3px #3c3c3c">Email, Aliases and other Mails in o...</div>
<svg class="i" style="left:43px;top:818px;" width="14" height="14" viewBox="0 0 14 14"><path d="M6.5 0.8 L8.2 5 L12.6 5.2 L9.2 8 L10.3 12.3 L6.5 9.9 L2.7 12.3 L3.8 8 L0.4 5.2 L4.8 5Z" fill="#b8b8b8"/></svg>
<svg class="i" style="left:62px;top:818px;" width="16" height="16" viewBox="0 0 16 16"><circle cx="8" cy="8" r="6.57" fill="none" stroke="#955ba5" stroke-width="1.22"/><path d="M4.13 5.12 L5.48 3.86 L7.19 4.76 L6.92 5.39Z M11.87 5.12 L10.52 3.86 L8.81 4.76 L9.08 5.39Z" fill="#955ba5"/><path d="M2.96 6.56 L7.01 6.56 L6.20 11.24 L4.85 12.32 L3.50 10.16Z M13.04 6.56 L8.99 6.56 L9.80 11.24 L11.15 12.32 L12.50 10.16Z" fill="#955ba5"/><path d="M6.29 13.04 L9.71 13.04 L8.54 10.52 L7.46 10.52Z" fill="#955ba5"/></svg>
<svg class="i" style="left:82px;top:818px;" width="14" height="14" viewBox="0 0 14 14"><circle cx="7" cy="7" r="5.6" fill="none" stroke="#c7a3d5" stroke-width="1.1"/><path d="M4.5 6 A2.7 2.7 0 0 1 9.3 5.6 M9.5 8 A2.7 2.7 0 0 1 4.7 8.4" fill="none" stroke="#b487c5" stroke-width="1"/></svg>
<div class="a" style="left:181px;top:818px;width:24px;height:24px;background:#fff;border:1px solid #dcdcdc;border-radius:3px"></div>
<svg class="i" style="left:181px;top:818px;" width="24" height="24" viewBox="0 0 24 24"><circle cx="12" cy="12" r="7.5" fill="none" stroke="#955ba5" stroke-width="1.2"/><path d="M12 10.5 V16" stroke="#955ba5" stroke-width="1.5"/><circle cx="12" cy="8" r="1" fill="#955ba5"/></svg>
<div class="a" style="left:213px;top:818px;width:64px;height:24px;background:#fff;border:1px solid #e3d2ea;border-radius:3px"></div>
<div class="t" style="left:229.0px;top:826.0px;font-size:12.59px;color:#955ba5;font-weight:normal;">Apply</div>
<div class="a" style="left:2px;top:850px;width:283px;height:1px;background:#dedede;"></div>
<div class="a" style="left:11px;top:859px;width:24px;height:24px;background:#fff;border:1px solid #e3d2ea;border-radius:3px"></div>
<svg class="i" style="left:11px;top:859px;" width="24" height="24" viewBox="0 0 24 24"><rect x="5.5" y="5.5" width="13" height="13" rx="2.2" fill="none" stroke="#955ba5" stroke-width="1.1"/><path d="M5.5 9.5 H18.5 M5.5 13.5 H18.5 M9.5 5.5 V18.5" stroke="#955ba5" stroke-width="1"/></svg>
<div class="t" style="left:43.2px;top:862.0px;font-size:14.37px;color:#3c3c3c;font-weight:normal;-webkit-text-stroke:0.3px #3c3c3c">Group licensing info</div>
<svg class="i" style="left:43px;top:887px;" width="14" height="14" viewBox="0 0 14 14"><path d="M6.5 0.8 L8.2 5 L12.6 5.2 L9.2 8 L10.3 12.3 L6.5 9.9 L2.7 12.3 L3.8 8 L0.4 5.2 L4.8 5Z" fill="#b8b8b8"/></svg>
<svg class="i" style="left:62px;top:887px;" width="16" height="16" viewBox="0 0 16 16"><circle cx="8" cy="8" r="6.57" fill="none" stroke="#955ba5" stroke-width="1.22"/><path d="M4.13 5.12 L5.48 3.86 L7.19 4.76 L6.92 5.39Z M11.87 5.12 L10.52 3.86 L8.81 4.76 L9.08 5.39Z" fill="#955ba5"/><path d="M2.96 6.56 L7.01 6.56 L6.20 11.24 L4.85 12.32 L3.50 10.16Z M13.04 6.56 L8.99 6.56 L9.80 11.24 L11.15 12.32 L12.50 10.16Z" fill="#955ba5"/><path d="M6.29 13.04 L9.71 13.04 L8.54 10.52 L7.46 10.52Z" fill="#955ba5"/></svg>
<svg class="i" style="left:83px;top:888px;" width="14" height="12" viewBox="0 0 14 12"><path d="M3 2 L7 6 L3 10 M8 2 L12 6 L8 10" fill="none" stroke="#b487c5" stroke-width="1.1"/></svg>
<div class="a" style="left:181px;top:887px;width:24px;height:24px;background:#fff;border:1px solid #dcdcdc;border-radius:3px"></div>
<svg class="i" style="left:181px;top:887px;" width="24" height="24" viewBox="0 0 24 24"><circle cx="12" cy="12" r="7.5" fill="none" stroke="#955ba5" stroke-width="1.2"/><path d="M12 10.5 V16" stroke="#955ba5" stroke-width="1.5"/><circle cx="12" cy="8" r="1" fill="#955ba5"/></svg>
<div class="a" style="left:213px;top:887px;width:64px;height:24px;background:#fff;border:1px solid #e3d2ea;border-radius:3px"></div>
<div class="t" style="left:229.0px;top:895.0px;font-size:12.59px;color:#955ba5;font-weight:normal;">Apply</div>
<div class="a" style="left:2px;top:919px;width:283px;height:1px;background:#dedede;"></div>
<div class="a" style="left:11px;top:928px;width:24px;height:24px;background:#fff;border:1px solid #e3d2ea;border-radius:3px"></div>
<svg class="i" style="left:11px;top:928px;" width="24" height="24" viewBox="0 0 24 24"><rect x="5.5" y="5.5" width="13" height="13" rx="2.2" fill="none" stroke="#955ba5" stroke-width="1.1"/><path d="M5.5 9.5 H18.5 M5.5 13.5 H18.5 M9.5 5.5 V18.5" stroke="#955ba5" stroke-width="1"/></svg>
<div class="t" style="left:43.2px;top:931.0px;font-size:14.63px;color:#3c3c3c;font-weight:normal;-webkit-text-stroke:0.3px #3c3c3c">Hybrid - All users, including on-pr...</div>
<div class="a" style="left:286px;top:369px;width:14px;height:588px;background:#fafafa;"></div>
<div class="a" style="left:285px;top:369px;width:1px;height:588px;background:#e6e6e6;"></div>
<div class="a" style="left:290px;top:371px;width:7px;height:212px;background:#c6c6c6;"></div>
<div class="a" style="left:2px;top:956px;width:300px;height:41px;background:#f3fafd;"></div>
<div class="a" style="left:2px;top:956px;width:298px;height:1px;background:#e0e0e0;"></div>
<svg class="i" style="left:15px;top:969px;" width="17" height="17" viewBox="0 0 17 17"><path d="M13.30 7.53 L15.04 7.64 L15.04 9.36 L13.30 9.47 L13.03 10.38 L12.58 11.21 L13.73 12.52 L12.52 13.73 L11.21 12.58 L10.38 13.03 L9.47 13.30 L9.36 15.04 L7.64 15.04 L7.53 13.30 L6.62 13.03 L5.79 12.58 L4.48 13.73 L3.27 12.52 L4.42 11.21 L3.97 10.38 L3.70 9.47 L1.96 9.36 L1.96 7.64 L3.70 7.53 L3.97 6.62 L4.42 5.79 L3.27 4.48 L4.48 3.27 L5.79 4.42 L6.62 3.97 L7.53 3.70 L7.64 1.96 L9.36 1.96 L9.47 3.70 L10.38 3.97 L11.21 4.42 L12.52 3.27 L13.73 4.48 L12.58 5.79 L13.03 6.62Z" fill="none" stroke="#6a9aa6" stroke-width="1" stroke-linejoin="round"/><circle cx="8.5" cy="8.5" r="2.2" fill="none" stroke="#6a9aa6" stroke-width="1"/></svg>
<div class="t" style="left:36.7px;top:973.0px;font-size:11.93px;color:#5b8e9a;font-weight:normal;">Manage Views</div>
<svg class="i" style="left:185px;top:968px;" width="18" height="18" viewBox="0 0 18 18"><circle cx="7" cy="5.5" r="3.5" fill="none" stroke="#6a9aa6" stroke-width="1"/><path d="M1.5 15.5 Q1.5 10 7 10 Q12.5 10 12.5 15.5Z" fill="none" stroke="#6a9aa6" stroke-width="1"/><path d="M12.5 2 Q14 4.5 12.5 7 M14.5 1 Q16.5 4.5 14.5 8" fill="none" stroke="#6a9aa6" stroke-width="0.9"/></svg>
<div class="t" style="left:205.0px;top:973.0px;font-size:11.95px;color:#5b8e9a;font-weight:normal;">Suggest a View</div>
<div class="a" style="left:2px;top:185px;width:1px;height:812px;background:#d6d6d6;"></div>
<div class="a" style="left:302px;top:185px;width:19px;height:812px;background:#955ba5;"></div>
<svg class="i" style="left:305px;top:584px;" width="10" height="14" viewBox="0 0 10 14"><path d="M7 2 L3 7 L7 12" fill="none" stroke="#fff" stroke-width="1.5"/></svg>
<div class="a" style="left:321px;top:185px;width:1537px;height:812px;background:#fff;"></div>
<div class="a" style="left:1402px;top:185px;width:456px;height:44px;background:linear-gradient(#fff,#f4f4f4);"></div>
<div class="t" style="left:324.2px;top:192.0px;font-size:11.94px;color:#222;font-weight:normal;">System</div>
<div class="a" style="left:386px;top:188px;width:1px;height:18px;background:#c8c8c8;"></div>
<div class="t" style="left:389.4px;top:191.0px;font-size:12.69px;color:#1769c4;font-weight:bold;">User Info</div>
<div class="a" style="left:387px;top:204px;width:1015px;height:2px;background:#1673d1;"></div>
<div class="a" style="left:321px;top:206px;width:65px;height:1px;background:#dcdcdc;"></div>
<div class="a" style="left:321px;top:229px;width:1537px;height:1px;background:#cfcfcf;"></div>
<div class="a" style="left:341px;top:209px;width:1px;height:18px;background:#cfcfcf;"></div>
<div class="a" style="left:361px;top:209px;width:1px;height:18px;background:#cfcfcf;"></div>
<div class="a" style="left:386px;top:209px;width:1px;height:18px;background:#cfcfcf;"></div>
<div class="a" style="left:562px;top:209px;width:1px;height:18px;background:#cfcfcf;"></div>
<div class="a" style="left:818px;top:209px;width:1px;height:18px;background:#cfcfcf;"></div>
<div class="a" style="left:883px;top:209px;width:1px;height:18px;background:#cfcfcf;"></div>
<div class="a" style="left:1130px;top:209px;width:1px;height:18px;background:#cfcfcf;"></div>
<div class="a" style="left:1186px;top:209px;width:1px;height:18px;background:#cfcfcf;"></div>
<div class="a" style="left:1338px;top:209px;width:1px;height:18px;background:#cfcfcf;"></div>
<div class="a" style="left:1402px;top:209px;width:1px;height:18px;background:#cfcfcf;"></div>
<svg class="i" style="left:325.5px;top:210px;" width="12" height="14" viewBox="0 0 12 14"><path d="M3.3 6 V4.2 A2.7 2.7 0 0 1 8.7 4.2 V6" fill="none" stroke="#e8b25f" stroke-width="1.6"/><rect x="1.5" y="6" width="9" height="7" rx="0.5" fill="#e8b25f"/><circle cx="6" cy="9.3" r="1" fill="#fff"/></svg>
<svg class="i" style="left:345.5px;top:210px;" width="12" height="14" viewBox="0 0 12 14"><path d="M3.3 6 V4.2 A2.7 2.7 0 0 1 8.7 4.2 V6" fill="none" stroke="#e8b25f" stroke-width="1.6"/><rect x="1.5" y="6" width="9" height="7" rx="0.5" fill="#e8b25f"/><circle cx="6" cy="9.3" r="1" fill="#fff"/></svg>
<svg class="i" style="left:365.5px;top:210px;" width="12" height="14" viewBox="0 0 12 14"><path d="M3.3 6 V4.2 A2.7 2.7 0 0 1 8.7 4.2 V6" fill="none" stroke="#e8b25f" stroke-width="1.6"/><rect x="1.5" y="6" width="9" height="7" rx="0.5" fill="#e8b25f"/><circle cx="6" cy="9.3" r="1" fill="#fff"/></svg>
<div class="t" style="left:381.5px;top:214.0px;font-size:10.80px;color:#222;font-weight:normal;">:</div>
<div class="t" style="left:389.4px;top:213.0px;font-size:12.89px;color:#222;font-weight:normal;">User Display Name</div>
<svg class="i" style="left:548px;top:213px;" width="12" height="8" viewBox="0 0 12 8"><path d="M1.5 6.5 L6 2 L10.5 6.5Z" fill="#c8c8c8"/></svg>
<div class="t" style="left:565.5px;top:213.0px;font-size:12.68px;color:#222;font-weight:normal;">Username</div>
<div class="a" style="left:819px;top:206px;width:63px;height:23px;overflow:hidden">
<div class="t" style="left:2.0px;top:8.0px;font-size:12.80px;color:#222;font-weight:normal;">User Type</div>
</div>
<div class="t" style="left:884.2px;top:214.0px;font-size:10.40px;color:#222;font-weight:normal;">S...</div>
<div class="a" style="left:907px;top:206px;width:95px;height:23px;background:#0078d7;"></div>
<div class="t" style="left:909.5px;top:213.0px;font-size:12.50px;color:#fff;font-weight:normal;">Sign-in st...</div>
<svg class="i" style="left:979px;top:210px;" width="18" height="16" viewBox="0 0 18 16"><path d="M4 3 H15 L11 8 V12.5 L8.5 11 V8Z" fill="#333"/><path d="M12 3 H14.5 L10.8 7.6" fill="#fff"/><path d="M2 10 L5 12.5 L9.5 8" fill="none" stroke="#fff" stroke-width="1.6"/><path d="M2.5 10 L5 12 L9 8.5" fill="none" stroke="#333" stroke-width="1"/></svg>
<div class="t" style="left:1005.0px;top:212.0px;font-size:13.01px;color:#222;font-weight:normal;clip-path:inset(0 0 0 0)">Last signed in on - ...</div>
<div class="t" style="left:1133.2px;top:213.0px;font-size:12.40px;color:#222;font-weight:normal;">Locatio...</div>
<div class="t" style="left:1189.0px;top:213.0px;font-size:12.61px;color:#222;font-weight:normal;">Effective Assigned Licen...</div>
<div class="t" style="left:1341.5px;top:213.0px;font-size:12.23px;color:#222;font-weight:normal;">Unit Cos...</div>
<div class="a" style="left:321px;top:230px;width:1537px;height:767px;overflow:hidden">
<div class="a" style="left:0px;top:27px;width:1081px;height:1px;background:#eeeeee;"></div>
<div class="a" style="left:20px;top:0px;width:1px;height:28px;background:#eeeeee;"></div>
<div class="a" style="left:40px;top:0px;width:1px;height:28px;background:#eeeeee;"></div>
<div class="a" style="left:65px;top:0px;width:1px;height:28px;background:#eeeeee;"></div>
<svg class="i" style="left:21px;top:0px;" width="20" height="28" viewBox="0 0 20 28"><circle cx="10" cy="10.4" r="4.2" fill="#2a7bc3"/><path d="M3 20.2 Q3 16.6 6 16.1 H14 Q17 16.6 17 20.2Z" fill="#2a7bc3"/></svg>
<div class="t" style="left:68.3px;top:9.0px;font-size:12.48px;color:#111;font-weight:normal;">2186Lilly Smith 2</div>
<div class="a" style="left:241px;top:0px;width:1px;height:28px;background:#1d2b4a;"></div>
<div class="t" style="left:244.5px;top:9.0px;font-size:12.70px;color:#111;font-weight:normal;">Lilly.smith.copy@ovh.ytria.io</div>
<div class="a" style="left:497px;top:0px;width:1px;height:28px;background:#ececec;"></div>
<div class="t" style="left:500.0px;top:8.0px;font-size:13.36px;color:#111;font-weight:normal;">Member</div>
<div class="a" style="left:562px;top:0px;width:1px;height:28px;background:#fff;"></div>
<div class="a" style="left:563px;top:0px;width:22px;height:27px;background:#efefef;"></div>
<svg class="i" style="left:567px;top:8px;" width="14" height="14" viewBox="0 0 14 14"><rect x="0.5" y="0.5" width="12" height="12" fill="none" stroke="#c9c9c9" stroke-width="1"/><path d="M3 6.5 L5.5 9.5 L10 3" fill="none" stroke="#b9b9b9" stroke-width="1.3"/></svg>
<div class="a" style="left:586px;top:0px;width:2px;height:28px;background:#2b7fd4;"></div>
<div class="a" style="left:680px;top:0px;width:2px;height:28px;background:#2b7fd4;"></div>
<svg class="i" style="left:588px;top:0px;" width="16" height="28" viewBox="0 0 16 28"><circle cx="8" cy="13.5" r="6.8" fill="#d9472b" stroke="none" stroke-width="1"/><rect x="4" y="12.2" width="8" height="2.6" fill="#fff"/></svg>
<div class="t" style="left:606.0px;top:9.0px;font-size:12.54px;color:#111;font-weight:normal;">Blocked</div>
<div class="a" style="left:682px;top:0px;width:127px;height:27px;background:#d9d9d9;"></div>
<svg class="i" style="left:682px;top:0px;" width="24" height="28" viewBox="0 0 24 28"><path d="M6.5 5.9 H10.9 V13.6 L7.6 17.6 L2.9 11.4 L3.2 9.6 L6.5 11.8 Z" fill="#666" stroke="#fff" stroke-width="0.9" stroke-linejoin="round"/><circle cx="14.3" cy="10.2" r="0.9" fill="#555"/><circle cx="12.9" cy="15.9" r="4.4" fill="#1f74c6" stroke="#fff" stroke-width="0.9"/><rect x="12.25" y="14.6" width="1.4" height="4" fill="#fff"/><circle cx="12.95" cy="13.2" r="0.85" fill="#fff"/></svg>
<div class="t" style="left:706.0px;top:8.0px;font-size:13.38px;color:#9a9a9a;font-weight:normal;">- Use the 'Additio</div>
<div class="a" style="left:809px;top:0px;width:1px;height:28px;background:#ececec;"></div>
<div class="t" style="left:812.2px;top:9.0px;font-size:12.70px;color:#111;font-weight:normal;letter-spacing:-0.9px">US</div>
<div class="a" style="left:865px;top:0px;width:1px;height:28px;background:#ececec;"></div>
<div class="a" style="left:866px;top:0px;width:151px;height:27px;background:#d9d9d9;"></div>
<div class="a" style="left:1018px;top:0px;width:63px;height:27px;background:#d9d9d9;"></div>
<div class="t" style="left:868.8px;top:8.0px;font-size:13.11px;color:#8f8f8f;font-weight:normal;">-- Unlicensed --</div>
<div class="a" style="left:1017px;top:0px;width:1px;height:28px;background:#fff;"></div>
<div class="a" style="left:1081px;top:0px;width:1px;height:28px;background:#e3e3e3;"></div>
<div class="a" style="left:0px;top:55px;width:1081px;height:1px;background:#eeeeee;"></div>
<div class="a" style="left:20px;top:28px;width:1px;height:28px;background:#eeeeee;"></div>
<div class="a" style="left:40px;top:28px;width:1px;height:28px;background:#eeeeee;"></div>
<div class="a" style="left:65px;top:28px;width:1px;height:28px;background:#eeeeee;"></div>
<svg class="i" style="left:21px;top:28px;" width="20" height="28" viewBox="0 0 20 28"><circle cx="10" cy="10.4" r="4.2" fill="#2a7bc3"/><path d="M3 20.2 Q3 16.6 6 16.1 H14 Q17 16.6 17 20.2Z" fill="#2a7bc3"/></svg>
<div class="t" style="left:68.3px;top:37.0px;font-size:12.51px;color:#111;font-weight:normal;">Adele Vance</div>
<div class="a" style="left:241px;top:28px;width:1px;height:28px;background:#1d2b4a;"></div>
<div class="t" style="left:244.5px;top:36.0px;font-size:13.14px;color:#111;font-weight:normal;">AdeleV@sygx2.onmicrosoft.com</div>
<div class="a" style="left:497px;top:28px;width:1px;height:28px;background:#ececec;"></div>
<div class="t" style="left:500.0px;top:36.0px;font-size:13.36px;color:#111;font-weight:normal;">Member</div>
<div class="a" style="left:562px;top:28px;width:1px;height:28px;background:#fff;"></div>
<div class="a" style="left:563px;top:28px;width:22px;height:27px;background:#efefef;"></div>
<svg class="i" style="left:567px;top:36px;" width="14" height="14" viewBox="0 0 14 14"><rect x="0.5" y="0.5" width="12" height="12" fill="none" stroke="#c9c9c9" stroke-width="1"/><path d="M3 6.5 L5.5 9.5 L10 3" fill="none" stroke="#b9b9b9" stroke-width="1.3"/></svg>
<div class="a" style="left:586px;top:28px;width:2px;height:28px;background:#2b7fd4;"></div>
<div class="a" style="left:680px;top:28px;width:2px;height:28px;background:#2b7fd4;"></div>
<svg class="i" style="left:588px;top:28px;" width="16" height="28" viewBox="0 0 16 28"><circle cx="8" cy="13.5" r="6.8" fill="#d9472b" stroke="none" stroke-width="1"/><rect x="4" y="12.2" width="8" height="2.6" fill="#fff"/></svg>
<div class="t" style="left:606.0px;top:37.0px;font-size:12.54px;color:#111;font-weight:normal;">Blocked</div>
<div class="a" style="left:682px;top:28px;width:127px;height:27px;background:#d9d9d9;"></div>
<svg class="i" style="left:682px;top:28px;" width="24" height="28" viewBox="0 0 24 28"><path d="M6.5 5.9 H10.9 V13.6 L7.6 17.6 L2.9 11.4 L3.2 9.6 L6.5 11.8 Z" fill="#666" stroke="#fff" stroke-width="0.9" stroke-linejoin="round"/><circle cx="14.3" cy="10.2" r="0.9" fill="#555"/><circle cx="12.9" cy="15.9" r="4.4" fill="#1f74c6" stroke="#fff" stroke-width="0.9"/><rect x="12.25" y="14.6" width="1.4" height="4" fill="#fff"/><circle cx="12.95" cy="13.2" r="0.85" fill="#fff"/></svg>
<div class="t" style="left:706.0px;top:36.0px;font-size:13.38px;color:#9a9a9a;font-weight:normal;">- Use the 'Additio</div>
<div class="a" style="left:809px;top:28px;width:1px;height:28px;background:#ececec;"></div>
<div class="t" style="left:812.2px;top:37.0px;font-size:12.70px;color:#111;font-weight:normal;letter-spacing:-0.9px">US</div>
<div class="a" style="left:865px;top:28px;width:1px;height:28px;background:#ececec;"></div>
<div class="a" style="left:868.8px;top:28px;width:147.20000000000005px;height:27px;overflow:hidden">
<div class="t" style="left:0.0px;top:9.0px;font-size:12.60px;color:#111;font-weight:normal;">Microsoft_Entra_Private_Access_Premium</div>
</div>
<div class="a" style="left:1018px;top:28px;width:63px;height:27px;background:#d9d9d9;"></div>
<svg class="i" style="left:1017px;top:28px;" width="24" height="28" viewBox="0 0 24 28"><path d="M11.6 8.6 Q8.6 6.6 6.1 8.6 Q4.6 10.6 6.1 12.3 Q7.6 13.4 9.2 12.6" fill="none" stroke="#5a5a5a" stroke-width="1.5"/><path d="M8.4 6 V8.3" stroke="#5a5a5a" stroke-width="1.3"/><path d="M4.8 17 L8.4 19.8" stroke="#5a5a5a" stroke-width="1.5"/><circle cx="13.5" cy="15.9" r="4.5" fill="#1f74c6" stroke="#fff" stroke-width="0.9"/><rect x="12.85" y="14.6" width="1.4" height="4" fill="#fff"/><circle cx="13.55" cy="13.2" r="0.85" fill="#fff"/></svg>
<div class="t" style="left:1042.7px;top:37.0px;font-size:12.53px;color:#9a9a9a;font-weight:normal;">- Set li</div>
<div class="a" style="left:1017px;top:28px;width:1px;height:28px;background:#fff;"></div>
<div class="a" style="left:1081px;top:28px;width:1px;height:28px;background:#e3e3e3;"></div>
<div class="a" style="left:0px;top:83px;width:1081px;height:1px;background:#eeeeee;"></div>
<div class="a" style="left:0px;top:56px;width:20px;height:27px;background:#0078d7;"></div>
<div class="a" style="left:21px;top:56px;width:19px;height:27px;background:#0078d7;"></div>
<div class="a" style="left:41px;top:56px;width:24px;height:27px;background:#0078d7;"></div>
<div class="a" style="left:66px;top:56px;width:175px;height:27px;background:#0078d7;"></div>
<div class="a" style="left:20px;top:56px;width:1px;height:28px;background:#fff;"></div>
<div class="a" style="left:40px;top:56px;width:1px;height:28px;background:#fff;"></div>
<div class="a" style="left:65px;top:56px;width:1px;height:28px;background:#fff;"></div>
<svg class="i" style="left:21px;top:56px;" width="20" height="28" viewBox="0 0 20 28"><circle cx="10" cy="10" r="4.6" fill="#2a7bc3" stroke="#fff" stroke-width="1.2"/><path d="M3.3 21 Q3.3 15.6 10 15.6 Q16.7 15.6 16.7 21Z" fill="#2a7bc3" stroke="#fff" stroke-width="1.2"/></svg>
<div class="t" style="left:68.3px;top:64.0px;font-size:13.05px;color:#fff;font-weight:normal;">Alex Wilber</div>
<div class="a" style="left:241px;top:56px;width:1px;height:28px;background:#1d2b4a;"></div>
<div class="t" style="left:244.5px;top:65.0px;font-size:12.88px;color:#fff;font-weight:normal;">AlexW@sygx2.onmicrosoft.com</div>
<div class="a" style="left:497px;top:56px;width:1px;height:28px;background:#ececec;"></div>
<div class="a" style="left:498px;top:56px;width:64px;height:27px;background:#0078d7;"></div>
<div class="t" style="left:500.0px;top:64.0px;font-size:13.36px;color:#fff;font-weight:normal;">Member</div>
<div class="a" style="left:562px;top:56px;width:1px;height:28px;background:#fff;"></div>
<div class="a" style="left:563px;top:56px;width:22px;height:27px;background:#5fa1e0;"></div>
<svg class="i" style="left:567px;top:64px;" width="14" height="14" viewBox="0 0 14 14"><rect x="0.5" y="0.5" width="12" height="12" fill="none" stroke="#c9c9c9" stroke-width="1"/><path d="M3 6.5 L5.5 9.5 L10 3" fill="none" stroke="#b9b9b9" stroke-width="1.3"/></svg>
<div class="a" style="left:587px;top:56px;width:94px;height:27px;background:#0078d7;"></div>
<div class="a" style="left:586px;top:56px;width:2px;height:28px;background:#2b7fd4;"></div>
<div class="a" style="left:680px;top:56px;width:2px;height:28px;background:#2b7fd4;"></div>
<svg class="i" style="left:588px;top:56px;" width="16" height="28" viewBox="0 0 16 28"><circle cx="8" cy="13.5" r="7.2" fill="#d9472b" stroke="#fff" stroke-width="1"/><rect x="4" y="12.2" width="8" height="2.6" fill="#fff"/></svg>
<div class="t" style="left:606.0px;top:65.0px;font-size:12.54px;color:#fff;font-weight:normal;">Blocked</div>
<div class="a" style="left:682px;top:56px;width:127px;height:27px;background:#5fa1e0;"></div>
<svg class="i" style="left:682px;top:56px;" width="24" height="28" viewBox="0 0 24 28"><path d="M6.5 5.9 H10.9 V13.6 L7.6 17.6 L2.9 11.4 L3.2 9.6 L6.5 11.8 Z" fill="#666" stroke="#fff" stroke-width="0.9" stroke-linejoin="round"/><circle cx="14.3" cy="10.2" r="0.9" fill="#555"/><circle cx="12.9" cy="15.9" r="4.4" fill="#1f74c6" stroke="#fff" stroke-width="0.9"/><rect x="12.25" y="14.6" width="1.4" height="4" fill="#fff"/><circle cx="12.95" cy="13.2" r="0.85" fill="#fff"/></svg>
<div class="t" style="left:706.0px;top:64.0px;font-size:13.38px;color:#8aa9c8;font-weight:normal;">- Use the 'Additio</div>
<div class="a" style="left:809px;top:56px;width:1px;height:28px;background:#ececec;"></div>
<div class="a" style="left:810px;top:56px;width:55px;height:27px;background:#0078d7;"></div>
<div class="t" style="left:812.2px;top:65.0px;font-size:12.70px;color:#fff;font-weight:normal;letter-spacing:-0.9px">US</div>
<div class="a" style="left:865px;top:56px;width:1px;height:28px;background:#ececec;"></div>
<div class="a" style="left:866px;top:56px;width:151px;height:27px;background:#0078d7;"></div>
<div class="a" style="left:868.8px;top:56px;width:147.20000000000005px;height:27px;overflow:hidden">
<div class="t" style="left:0.0px;top:9.0px;font-size:12.60px;color:#fff;font-weight:normal;">Microsoft_Entra_Private_Access_Premium</div>
</div>
<div class="a" style="left:1018px;top:56px;width:63px;height:27px;background:#5fa1e0;"></div>
<svg class="i" style="left:1017px;top:56px;" width="24" height="28" viewBox="0 0 24 28"><path d="M11.6 8.6 Q8.6 6.6 6.1 8.6 Q4.6 10.6 6.1 12.3 Q7.6 13.4 9.2 12.6" fill="none" stroke="#5a5a5a" stroke-width="1.5"/><path d="M8.4 6 V8.3" stroke="#5a5a5a" stroke-width="1.3"/><path d="M4.8 17 L8.4 19.8" stroke="#5a5a5a" stroke-width="1.5"/><circle cx="13.5" cy="15.9" r="4.5" fill="#1f74c6" stroke="#fff" stroke-width="0.9"/><rect x="12.85" y="14.6" width="1.4" height="4" fill="#fff"/><circle cx="13.55" cy="13.2" r="0.85" fill="#fff"/></svg>
<div class="t" style="left:1042.7px;top:65.0px;font-size:12.53px;color:#8aa9c8;font-weight:normal;">- Set li</div>
<div class="a" style="left:1017px;top:56px;width:1px;height:28px;background:#fff;"></div>
<div class="a" style="left:1081px;top:56px;width:1px;height:28px;background:#e3e3e3;"></div>
<div class="a" style="left:0px;top:111px;width:1081px;height:1px;background:#eeeeee;"></div>
<div class="a" style="left:20px;top:84px;width:1px;height:28px;background:#eeeeee;"></div>
<div class="a" style="left:40px;top:84px;width:1px;height:28px;background:#eeeeee;"></div>
<div class="a" style="left:65px;top:84px;width:1px;height:28px;background:#eeeeee;"></div>
<svg class="i" style="left:21px;top:84px;" width="20" height="28" viewBox="0 0 20 28"><circle cx="10" cy="10.4" r="4.2" fill="#2a7bc3"/><path d="M3 20.2 Q3 16.6 6 16.1 H14 Q17 16.6 17 20.2Z" fill="#2a7bc3"/></svg>
<div class="t" style="left:68.3px;top:93.0px;font-size:12.92px;color:#111;font-weight:normal;">Allan Deyoung</div>
<div class="a" style="left:241px;top:84px;width:1px;height:28px;background:#1d2b4a;"></div>
<div class="t" style="left:244.5px;top:92.0px;font-size:13.25px;color:#111;font-weight:normal;">AllanD@sygx2.onmicrosoft.com</div>
<div class="a" style="left:497px;top:84px;width:1px;height:28px;background:#ececec;"></div>
<div class="t" style="left:500.0px;top:92.0px;font-size:13.36px;color:#111;font-weight:normal;">Member</div>
<div class="a" style="left:562px;top:84px;width:1px;height:28px;background:#fff;"></div>
<div class="a" style="left:563px;top:84px;width:22px;height:27px;background:#d9d9d9;"></div>
<div class="a" style="left:586px;top:84px;width:2px;height:28px;background:#2b7fd4;"></div>
<div class="a" style="left:680px;top:84px;width:2px;height:28px;background:#2b7fd4;"></div>
<svg class="i" style="left:588px;top:84px;" width="16" height="28" viewBox="0 0 16 28"><circle cx="8" cy="13.5" r="6.8" fill="#d9472b" stroke="none" stroke-width="1"/><rect x="4" y="12.2" width="8" height="2.6" fill="#fff"/></svg>
<div class="t" style="left:606.0px;top:93.0px;font-size:12.54px;color:#111;font-weight:normal;">Blocked</div>
<div class="a" style="left:682px;top:84px;width:127px;height:27px;background:#d9d9d9;"></div>
<svg class="i" style="left:682px;top:84px;" width="24" height="28" viewBox="0 0 24 28"><path d="M6.5 5.9 H10.9 V13.6 L7.6 17.6 L2.9 11.4 L3.2 9.6 L6.5 11.8 Z" fill="#666" stroke="#fff" stroke-width="0.9" stroke-linejoin="round"/><circle cx="14.3" cy="10.2" r="0.9" fill="#555"/><circle cx="12.9" cy="15.9" r="4.4" fill="#1f74c6" stroke="#fff" stroke-width="0.9"/><rect x="12.25" y="14.6" width="1.4" height="4" fill="#fff"/><circle cx="12.95" cy="13.2" r="0.85" fill="#fff"/></svg>
<div class="t" style="left:706.0px;top:92.0px;font-size:13.38px;color:#9a9a9a;font-weight:normal;">- Use the 'Additio</div>
<div class="a" style="left:809px;top:84px;width:1px;height:28px;background:#ececec;"></div>
<div class="t" style="left:812.2px;top:93.0px;font-size:12.70px;color:#111;font-weight:normal;letter-spacing:-0.9px">US</div>
<div class="a" style="left:865px;top:84px;width:1px;height:28px;background:#ececec;"></div>
<div class="a" style="left:868.8px;top:84px;width:147.20000000000005px;height:27px;overflow:hidden">
<div class="t" style="left:0.0px;top:9.0px;font-size:12.43px;color:#111;font-weight:normal;">Remote_Help_AddOn</div>
</div>
<div class="a" style="left:1018px;top:84px;width:63px;height:27px;background:#d9d9d9;"></div>
<svg class="i" style="left:1017px;top:84px;" width="24" height="28" viewBox="0 0 24 28"><path d="M11.6 8.6 Q8.6 6.6 6.1 8.6 Q4.6 10.6 6.1 12.3 Q7.6 13.4 9.2 12.6" fill="none" stroke="#5a5a5a" stroke-width="1.5"/><path d="M8.4 6 V8.3" stroke="#5a5a5a" stroke-width="1.3"/><path d="M4.8 17 L8.4 19.8" stroke="#5a5a5a" stroke-width="1.5"/><circle cx="13.5" cy="15.9" r="4.5" fill="#1f74c6" stroke="#fff" stroke-width="0.9"/><rect x="12.85" y="14.6" width="1.4" height="4" fill="#fff"/><circle cx="13.55" cy="13.2" r="0.85" fill="#fff"/></svg>
<div class="t" style="left:1042.7px;top:93.0px;font-size:12.53px;color:#9a9a9a;font-weight:normal;">- Set li</div>
<div class="a" style="left:1017px;top:84px;width:1px;height:28px;background:#fff;"></div>
<div class="a" style="left:1081px;top:84px;width:1px;height:28px;background:#e3e3e3;"></div>
<div class="a" style="left:0px;top:139px;width:1081px;height:1px;background:#eeeeee;"></div>
<div class="a" style="left:20px;top:112px;width:1px;height:28px;background:#eeeeee;"></div>
<div class="a" style="left:40px;top:112px;width:1px;height:28px;background:#eeeeee;"></div>
<div class="a" style="left:65px;top:112px;width:1px;height:28px;background:#eeeeee;"></div>
<svg class="i" style="left:21px;top:112px;" width="20" height="28" viewBox="0 0 20 28"><circle cx="10" cy="10.4" r="4.2" fill="#2a7bc3"/><path d="M3 20.2 Q3 16.6 6 16.1 H14 Q17 16.6 17 20.2Z" fill="#2a7bc3"/></svg>
<div class="t" style="left:68.3px;top:120.0px;font-size:13.20px;color:#111;font-weight:normal;">Bianca Pisani</div>
<div class="a" style="left:241px;top:112px;width:1px;height:28px;background:#1d2b4a;"></div>
<div class="t" style="left:244.5px;top:120.0px;font-size:13.06px;color:#111;font-weight:normal;">Bianca.Pisani@sygx2.onmicrosoft.com</div>
<div class="a" style="left:497px;top:112px;width:1px;height:28px;background:#ececec;"></div>
<div class="t" style="left:500.0px;top:120.0px;font-size:13.36px;color:#111;font-weight:normal;">Member</div>
<div class="a" style="left:562px;top:112px;width:1px;height:28px;background:#fff;"></div>
<div class="a" style="left:563px;top:112px;width:22px;height:27px;background:#efefef;"></div>
<svg class="i" style="left:567px;top:120px;" width="14" height="14" viewBox="0 0 14 14"><rect x="0.5" y="0.5" width="12" height="12" fill="none" stroke="#c9c9c9" stroke-width="1"/><path d="M3 6.5 L5.5 9.5 L10 3" fill="none" stroke="#b9b9b9" stroke-width="1.3"/></svg>
<div class="a" style="left:586px;top:112px;width:2px;height:28px;background:#2b7fd4;"></div>
<div class="a" style="left:680px;top:112px;width:2px;height:28px;background:#2b7fd4;"></div>
<svg class="i" style="left:588px;top:112px;" width="16" height="28" viewBox="0 0 16 28"><circle cx="8" cy="13.5" r="6.8" fill="#d9472b" stroke="none" stroke-width="1"/><rect x="4" y="12.2" width="8" height="2.6" fill="#fff"/></svg>
<div class="t" style="left:606.0px;top:121.0px;font-size:12.54px;color:#111;font-weight:normal;">Blocked</div>
<div class="a" style="left:682px;top:112px;width:127px;height:27px;background:#d9d9d9;"></div>
<svg class="i" style="left:682px;top:112px;" width="24" height="28" viewBox="0 0 24 28"><path d="M6.5 5.9 H10.9 V13.6 L7.6 17.6 L2.9 11.4 L3.2 9.6 L6.5 11.8 Z" fill="#666" stroke="#fff" stroke-width="0.9" stroke-linejoin="round"/><circle cx="14.3" cy="10.2" r="0.9" fill="#555"/><circle cx="12.9" cy="15.9" r="4.4" fill="#1f74c6" stroke="#fff" stroke-width="0.9"/><rect x="12.25" y="14.6" width="1.4" height="4" fill="#fff"/><circle cx="12.95" cy="13.2" r="0.85" fill="#fff"/></svg>
<div class="t" style="left:706.0px;top:120.0px;font-size:13.38px;color:#9a9a9a;font-weight:normal;">- Use the 'Additio</div>
<div class="a" style="left:809px;top:112px;width:1px;height:28px;background:#ececec;"></div>
<div class="t" style="left:812.2px;top:121.0px;font-size:12.70px;color:#111;font-weight:normal;letter-spacing:-0.9px">US</div>
<div class="a" style="left:865px;top:112px;width:1px;height:28px;background:#ececec;"></div>
<div class="a" style="left:866px;top:112px;width:151px;height:27px;background:#d9d9d9;"></div>
<div class="a" style="left:1018px;top:112px;width:63px;height:27px;background:#d9d9d9;"></div>
<div class="t" style="left:868.8px;top:120.0px;font-size:13.11px;color:#8f8f8f;font-weight:normal;">-- Unlicensed --</div>
<div class="a" style="left:1017px;top:112px;width:1px;height:28px;background:#fff;"></div>
<div class="a" style="left:1081px;top:112px;width:1px;height:28px;background:#e3e3e3;"></div>
<div class="a" style="left:0px;top:167px;width:1081px;height:1px;background:#eeeeee;"></div>
<div class="a" style="left:20px;top:140px;width:1px;height:28px;background:#eeeeee;"></div>
<div class="a" style="left:40px;top:140px;width:1px;height:28px;background:#eeeeee;"></div>
<div class="a" style="left:65px;top:140px;width:1px;height:28px;background:#eeeeee;"></div>
<svg class="i" style="left:21px;top:140px;" width="20" height="28" viewBox="0 0 20 28"><circle cx="10" cy="10.4" r="4.2" fill="#2a7bc3"/><path d="M3 20.2 Q3 16.6 6 16.1 H14 Q17 16.6 17 20.2Z" fill="#2a7bc3"/></svg>
<div class="t" style="left:68.3px;top:149.0px;font-size:12.83px;color:#111;font-weight:normal;">Brian Johnson</div>
<div class="a" style="left:241px;top:140px;width:1px;height:28px;background:#1d2b4a;"></div>
<div class="t" style="left:244.5px;top:148.0px;font-size:13.22px;color:#111;font-weight:normal;">BrianJ@sygx2.onmicrosoft.com</div>
<div class="a" style="left:497px;top:140px;width:1px;height:28px;background:#ececec;"></div>
<div class="t" style="left:500.0px;top:148.0px;font-size:13.36px;color:#111;font-weight:normal;">Member</div>
<div class="a" style="left:562px;top:140px;width:1px;height:28px;background:#fff;"></div>
<div class="a" style="left:563px;top:140px;width:22px;height:27px;background:#efefef;"></div>
<svg class="i" style="left:567px;top:148px;" width="14" height="14" viewBox="0 0 14 14"><rect x="0.5" y="0.5" width="12" height="12" fill="none" stroke="#c9c9c9" stroke-width="1"/><path d="M3 6.5 L5.5 9.5 L10 3" fill="none" stroke="#b9b9b9" stroke-width="1.3"/></svg>
<div class="a" style="left:586px;top:140px;width:2px;height:28px;background:#2b7fd4;"></div>
<div class="a" style="left:680px;top:140px;width:2px;height:28px;background:#2b7fd4;"></div>
<svg class="i" style="left:588px;top:140px;" width="16" height="28" viewBox="0 0 16 28"><circle cx="8" cy="13.5" r="6.8" fill="#d9472b" stroke="none" stroke-width="1"/><rect x="4" y="12.2" width="8" height="2.6" fill="#fff"/></svg>
<div class="t" style="left:606.0px;top:149.0px;font-size:12.54px;color:#111;font-weight:normal;">Blocked</div>
<div class="a" style="left:682px;top:140px;width:127px;height:27px;background:#d9d9d9;"></div>
<svg class="i" style="left:682px;top:140px;" width="24" height="28" viewBox="0 0 24 28"><path d="M6.5 5.9 H10.9 V13.6 L7.6 17.6 L2.9 11.4 L3.2 9.6 L6.5 11.8 Z" fill="#666" stroke="#fff" stroke-width="0.9" stroke-linejoin="round"/><circle cx="14.3" cy="10.2" r="0.9" fill="#555"/><circle cx="12.9" cy="15.9" r="4.4" fill="#1f74c6" stroke="#fff" stroke-width="0.9"/><rect x="12.25" y="14.6" width="1.4" height="4" fill="#fff"/><circle cx="12.95" cy="13.2" r="0.85" fill="#fff"/></svg>
<div class="t" style="left:706.0px;top:148.0px;font-size:13.38px;color:#9a9a9a;font-weight:normal;">- Use the 'Additio</div>
<div class="a" style="left:809px;top:140px;width:1px;height:28px;background:#ececec;"></div>
<div class="t" style="left:812.2px;top:149.0px;font-size:12.70px;color:#111;font-weight:normal;letter-spacing:-0.9px">US</div>
<div class="a" style="left:865px;top:140px;width:1px;height:28px;background:#ececec;"></div>
<div class="a" style="left:866px;top:140px;width:151px;height:27px;background:#d9d9d9;"></div>
<div class="a" style="left:1018px;top:140px;width:63px;height:27px;background:#d9d9d9;"></div>
<div class="t" style="left:868.8px;top:148.0px;font-size:13.11px;color:#8f8f8f;font-weight:normal;">-- Unlicensed --</div>
<div class="a" style="left:1017px;top:140px;width:1px;height:28px;background:#fff;"></div>
<div class="a" style="left:1081px;top:140px;width:1px;height:28px;background:#e3e3e3;"></div>
<div class="a" style="left:0px;top:195px;width:1081px;height:1px;background:#eeeeee;"></div>
<div class="a" style="left:20px;top:168px;width:1px;height:28px;background:#eeeeee;"></div>
<div class="a" style="left:40px;top:168px;width:1px;height:28px;background:#eeeeee;"></div>
<div class="a" style="left:65px;top:168px;width:1px;height:28px;background:#eeeeee;"></div>
<svg class="i" style="left:21px;top:168px;" width="20" height="28" viewBox="0 0 20 28"><circle cx="10" cy="10.4" r="4.2" fill="#2a7bc3"/><path d="M3 20.2 Q3 16.6 6 16.1 H14 Q17 16.6 17 20.2Z" fill="#2a7bc3"/></svg>
<div class="t" style="left:68.3px;top:177.0px;font-size:12.67px;color:#111;font-weight:normal;">Cameron White</div>
<div class="a" style="left:241px;top:168px;width:1px;height:28px;background:#1d2b4a;"></div>
<div class="t" style="left:244.5px;top:177.0px;font-size:12.64px;color:#111;font-weight:normal;">CameronW@sygx2.onmicrosoft.com</div>
<div class="a" style="left:497px;top:168px;width:1px;height:28px;background:#ececec;"></div>
<div class="t" style="left:500.0px;top:176.0px;font-size:13.36px;color:#111;font-weight:normal;">Member</div>
<div class="a" style="left:562px;top:168px;width:1px;height:28px;background:#fff;"></div>
<div class="a" style="left:563px;top:168px;width:22px;height:27px;background:#efefef;"></div>
<svg class="i" style="left:567px;top:176px;" width="14" height="14" viewBox="0 0 14 14"><rect x="0.5" y="0.5" width="12" height="12" fill="none" stroke="#c9c9c9" stroke-width="1"/><path d="M3 6.5 L5.5 9.5 L10 3" fill="none" stroke="#b9b9b9" stroke-width="1.3"/></svg>
<div class="a" style="left:586px;top:168px;width:2px;height:28px;background:#2b7fd4;"></div>
<div class="a" style="left:680px;top:168px;width:2px;height:28px;background:#2b7fd4;"></div>
<svg class="i" style="left:588px;top:168px;" width="16" height="28" viewBox="0 0 16 28"><circle cx="8" cy="13.5" r="6.8" fill="#d9472b" stroke="none" stroke-width="1"/><rect x="4" y="12.2" width="8" height="2.6" fill="#fff"/></svg>
<div class="t" style="left:606.0px;top:177.0px;font-size:12.54px;color:#111;font-weight:normal;">Blocked</div>
<div class="a" style="left:682px;top:168px;width:127px;height:27px;background:#d9d9d9;"></div>
<svg class="i" style="left:682px;top:168px;" width="24" height="28" viewBox="0 0 24 28"><path d="M6.5 5.9 H10.9 V13.6 L7.6 17.6 L2.9 11.4 L3.2 9.6 L6.5 11.8 Z" fill="#666" stroke="#fff" stroke-width="0.9" stroke-linejoin="round"/><circle cx="14.3" cy="10.2" r="0.9" fill="#555"/><circle cx="12.9" cy="15.9" r="4.4" fill="#1f74c6" stroke="#fff" stroke-width="0.9"/><rect x="12.25" y="14.6" width="1.4" height="4" fill="#fff"/><circle cx="12.95" cy="13.2" r="0.85" fill="#fff"/></svg>
<div class="t" style="left:706.0px;top:176.0px;font-size:13.38px;color:#9a9a9a;font-weight:normal;">- Use the 'Additio</div>
<div class="a" style="left:809px;top:168px;width:1px;height:28px;background:#ececec;"></div>
<div class="t" style="left:812.2px;top:177.0px;font-size:12.70px;color:#111;font-weight:normal;letter-spacing:-0.9px">US</div>
<div class="a" style="left:865px;top:168px;width:1px;height:28px;background:#ececec;"></div>
<div class="a" style="left:868.8px;top:168px;width:147.20000000000005px;height:27px;overflow:hidden">
<div class="t" style="left:0.0px;top:9.0px;font-size:12.43px;color:#111;font-weight:normal;">Remote_Help_AddOn</div>
</div>
<div class="a" style="left:1018px;top:168px;width:63px;height:27px;background:#d9d9d9;"></div>
<svg class="i" style="left:1017px;top:168px;" width="24" height="28" viewBox="0 0 24 28"><path d="M11.6 8.6 Q8.6 6.6 6.1 8.6 Q4.6 10.6 6.1 12.3 Q7.6 13.4 9.2 12.6" fill="none" stroke="#5a5a5a" stroke-width="1.5"/><path d="M8.4 6 V8.3" stroke="#5a5a5a" stroke-width="1.3"/><path d="M4.8 17 L8.4 19.8" stroke="#5a5a5a" stroke-width="1.5"/><circle cx="13.5" cy="15.9" r="4.5" fill="#1f74c6" stroke="#fff" stroke-width="0.9"/><rect x="12.85" y="14.6" width="1.4" height="4" fill="#fff"/><circle cx="13.55" cy="13.2" r="0.85" fill="#fff"/></svg>
<div class="t" style="left:1042.7px;top:177.0px;font-size:12.53px;color:#9a9a9a;font-weight:normal;">- Set li</div>
<div class="a" style="left:1017px;top:168px;width:1px;height:28px;background:#fff;"></div>
<div class="a" style="left:1081px;top:168px;width:1px;height:28px;background:#e3e3e3;"></div>
<div class="a" style="left:0px;top:223px;width:1081px;height:1px;background:#eeeeee;"></div>
<div class="a" style="left:20px;top:196px;width:1px;height:28px;background:#eeeeee;"></div>
<div class="a" style="left:40px;top:196px;width:1px;height:28px;background:#eeeeee;"></div>
<div class="a" style="left:65px;top:196px;width:1px;height:28px;background:#eeeeee;"></div>
<svg class="i" style="left:21px;top:196px;" width="20" height="28" viewBox="0 0 20 28"><circle cx="10" cy="10.4" r="4.2" fill="#2a7bc3"/><path d="M3 20.2 Q3 16.6 6 16.1 H14 Q17 16.6 17 20.2Z" fill="#2a7bc3"/></svg>
<div class="t" style="left:68.3px;top:204.0px;font-size:13.15px;color:#111;font-weight:normal;">Candice Burt</div>
<div class="a" style="left:241px;top:196px;width:1px;height:28px;background:#1d2b4a;"></div>
<div class="t" style="left:244.5px;top:205.0px;font-size:12.93px;color:#111;font-weight:normal;">Candice.Burt@sygx2.onmicrosoft.com</div>
<div class="a" style="left:497px;top:196px;width:1px;height:28px;background:#ececec;"></div>
<div class="t" style="left:500.0px;top:204.0px;font-size:13.36px;color:#111;font-weight:normal;">Member</div>
<div class="a" style="left:562px;top:196px;width:1px;height:28px;background:#fff;"></div>
<div class="a" style="left:563px;top:196px;width:22px;height:27px;background:#d9d9d9;"></div>
<div class="a" style="left:586px;top:196px;width:2px;height:28px;background:#2b7fd4;"></div>
<div class="a" style="left:680px;top:196px;width:2px;height:28px;background:#2b7fd4;"></div>
<svg class="i" style="left:588px;top:196px;" width="16" height="28" viewBox="0 0 16 28"><circle cx="8" cy="13.5" r="6.8" fill="#d9472b" stroke="none" stroke-width="1"/><rect x="4" y="12.2" width="8" height="2.6" fill="#fff"/></svg>
<div class="t" style="left:606.0px;top:205.0px;font-size:12.54px;color:#111;font-weight:normal;">Blocked</div>
<div class="a" style="left:682px;top:196px;width:127px;height:27px;background:#d9d9d9;"></div>
<svg class="i" style="left:682px;top:196px;" width="24" height="28" viewBox="0 0 24 28"><path d="M6.5 5.9 H10.9 V13.6 L7.6 17.6 L2.9 11.4 L3.2 9.6 L6.5 11.8 Z" fill="#666" stroke="#fff" stroke-width="0.9" stroke-linejoin="round"/><circle cx="14.3" cy="10.2" r="0.9" fill="#555"/><circle cx="12.9" cy="15.9" r="4.4" fill="#1f74c6" stroke="#fff" stroke-width="0.9"/><rect x="12.25" y="14.6" width="1.4" height="4" fill="#fff"/><circle cx="12.95" cy="13.2" r="0.85" fill="#fff"/></svg>
<div class="t" style="left:706.0px;top:204.0px;font-size:13.38px;color:#9a9a9a;font-weight:normal;">- Use the 'Additio</div>
<div class="a" style="left:809px;top:196px;width:1px;height:28px;background:#ececec;"></div>
<div class="t" style="left:812.2px;top:205.0px;font-size:12.70px;color:#111;font-weight:normal;letter-spacing:-0.9px">US</div>
<div class="a" style="left:865px;top:196px;width:1px;height:28px;background:#ececec;"></div>
<div class="a" style="left:868.8px;top:196px;width:147.20000000000005px;height:27px;overflow:hidden">
<div class="t" style="left:0.0px;top:9.0px;font-size:12.43px;color:#111;font-weight:normal;">Remote_Help_AddOn</div>
</div>
<div class="a" style="left:1018px;top:196px;width:63px;height:27px;background:#d9d9d9;"></div>
<svg class="i" style="left:1017px;top:196px;" width="24" height="28" viewBox="0 0 24 28"><path d="M11.6 8.6 Q8.6 6.6 6.1 8.6 Q4.6 10.6 6.1 12.3 Q7.6 13.4 9.2 12.6" fill="none" stroke="#5a5a5a" stroke-width="1.5"/><path d="M8.4 6 V8.3" stroke="#5a5a5a" stroke-width="1.3"/><path d="M4.8 17 L8.4 19.8" stroke="#5a5a5a" stroke-width="1.5"/><circle cx="13.5" cy="15.9" r="4.5" fill="#1f74c6" stroke="#fff" stroke-width="0.9"/><rect x="12.85" y="14.6" width="1.4" height="4" fill="#fff"/><circle cx="13.55" cy="13.2" r="0.85" fill="#fff"/></svg>
<div class="t" style="left:1042.7px;top:205.0px;font-size:12.53px;color:#9a9a9a;font-weight:normal;">- Set li</div>
<div class="a" style="left:1017px;top:196px;width:1px;height:28px;background:#fff;"></div>
<div class="a" style="left:1081px;top:196px;width:1px;height:28px;background:#e3e3e3;"></div>
<div class="a" style="left:0px;top:251px;width:1081px;height:1px;background:#eeeeee;"></div>
<div class="a" style="left:20px;top:224px;width:1px;height:28px;background:#eeeeee;"></div>
<div class="a" style="left:40px;top:224px;width:1px;height:28px;background:#eeeeee;"></div>
<div class="a" style="left:65px;top:224px;width:1px;height:28px;background:#eeeeee;"></div>
<svg class="i" style="left:21px;top:224px;" width="20" height="28" viewBox="0 0 20 28"><circle cx="10" cy="10.4" r="4.2" fill="#2a7bc3"/><path d="M3 20.2 Q3 16.6 6 16.1 H14 Q17 16.6 17 20.2Z" fill="#2a7bc3"/></svg>
<div class="t" style="left:68.3px;top:233.0px;font-size:13.79px;color:#111;font-weight:normal;">Christie Cline</div>
<div class="a" style="left:241px;top:224px;width:1px;height:28px;background:#1d2b4a;"></div>
<div class="t" style="left:244.5px;top:232.0px;font-size:13.03px;color:#111;font-weight:normal;">ChristieC@sygx2.onmicrosoft.com</div>
<div class="a" style="left:497px;top:224px;width:1px;height:28px;background:#ececec;"></div>
<div class="t" style="left:500.0px;top:232.0px;font-size:13.36px;color:#111;font-weight:normal;">Member</div>
<div class="a" style="left:562px;top:224px;width:1px;height:28px;background:#fff;"></div>
<div class="a" style="left:563px;top:224px;width:22px;height:27px;background:#efefef;"></div>
<svg class="i" style="left:567px;top:232px;" width="14" height="14" viewBox="0 0 14 14"><rect x="0.5" y="0.5" width="12" height="12" fill="none" stroke="#c9c9c9" stroke-width="1"/><path d="M3 6.5 L5.5 9.5 L10 3" fill="none" stroke="#b9b9b9" stroke-width="1.3"/></svg>
<div class="a" style="left:586px;top:224px;width:2px;height:28px;background:#2b7fd4;"></div>
<div class="a" style="left:680px;top:224px;width:2px;height:28px;background:#2b7fd4;"></div>
<svg class="i" style="left:588px;top:224px;" width="16" height="28" viewBox="0 0 16 28"><circle cx="8" cy="13.5" r="6.8" fill="#d9472b" stroke="none" stroke-width="1"/><rect x="4" y="12.2" width="8" height="2.6" fill="#fff"/></svg>
<div class="t" style="left:606.0px;top:233.0px;font-size:12.54px;color:#111;font-weight:normal;">Blocked</div>
<div class="a" style="left:682px;top:224px;width:127px;height:27px;background:#d9d9d9;"></div>
<svg class="i" style="left:682px;top:224px;" width="24" height="28" viewBox="0 0 24 28"><path d="M6.5 5.9 H10.9 V13.6 L7.6 17.6 L2.9 11.4 L3.2 9.6 L6.5 11.8 Z" fill="#666" stroke="#fff" stroke-width="0.9" stroke-linejoin="round"/><circle cx="14.3" cy="10.2" r="0.9" fill="#555"/><circle cx="12.9" cy="15.9" r="4.4" fill="#1f74c6" stroke="#fff" stroke-width="0.9"/><rect x="12.25" y="14.6" width="1.4" height="4" fill="#fff"/><circle cx="12.95" cy="13.2" r="0.85" fill="#fff"/></svg>
<div class="t" style="left:706.0px;top:232.0px;font-size:13.38px;color:#9a9a9a;font-weight:normal;">- Use the 'Additio</div>
<div class="a" style="left:809px;top:224px;width:1px;height:28px;background:#ececec;"></div>
<div class="t" style="left:812.2px;top:233.0px;font-size:12.70px;color:#111;font-weight:normal;letter-spacing:-0.9px">US</div>
<div class="a" style="left:865px;top:224px;width:1px;height:28px;background:#ececec;"></div>
<div class="a" style="left:866px;top:224px;width:151px;height:27px;background:#d9d9d9;"></div>
<div class="a" style="left:1018px;top:224px;width:63px;height:27px;background:#d9d9d9;"></div>
<div class="t" style="left:868.8px;top:232.0px;font-size:13.11px;color:#8f8f8f;font-weight:normal;">-- Unlicensed --</div>
<div class="a" style="left:1017px;top:224px;width:1px;height:28px;background:#fff;"></div>
<div class="a" style="left:1081px;top:224px;width:1px;height:28px;background:#e3e3e3;"></div>
<div class="a" style="left:0px;top:279px;width:1081px;height:1px;background:#eeeeee;"></div>
<div class="a" style="left:20px;top:252px;width:1px;height:28px;background:#eeeeee;"></div>
<div class="a" style="left:40px;top:252px;width:1px;height:28px;background:#eeeeee;"></div>
<div class="a" style="left:65px;top:252px;width:1px;height:28px;background:#eeeeee;"></div>
<svg class="i" style="left:21px;top:252px;" width="20" height="28" viewBox="0 0 20 28"><circle cx="10" cy="10.4" r="4.2" fill="#2a7bc3"/><path d="M3 20.2 Q3 16.6 6 16.1 H14 Q17 16.6 17 20.2Z" fill="#2a7bc3"/></svg>
<div class="t" style="left:68.3px;top:261.0px;font-size:13.68px;color:#111;font-weight:normal;">Clark Mullen</div>
<div class="a" style="left:241px;top:252px;width:1px;height:28px;background:#1d2b4a;"></div>
<div class="t" style="left:244.5px;top:260.0px;font-size:13.22px;color:#111;font-weight:normal;">Clark.Mullen@sygx2.onmicrosoft.com</div>
<div class="a" style="left:497px;top:252px;width:1px;height:28px;background:#ececec;"></div>
<div class="t" style="left:500.0px;top:260.0px;font-size:13.36px;color:#111;font-weight:normal;">Member</div>
<div class="a" style="left:562px;top:252px;width:1px;height:28px;background:#fff;"></div>
<div class="a" style="left:563px;top:252px;width:22px;height:27px;background:#efefef;"></div>
<svg class="i" style="left:567px;top:260px;" width="14" height="14" viewBox="0 0 14 14"><rect x="0.5" y="0.5" width="12" height="12" fill="none" stroke="#c9c9c9" stroke-width="1"/><path d="M3 6.5 L5.5 9.5 L10 3" fill="none" stroke="#b9b9b9" stroke-width="1.3"/></svg>
<div class="a" style="left:586px;top:252px;width:2px;height:28px;background:#2b7fd4;"></div>
<div class="a" style="left:680px;top:252px;width:2px;height:28px;background:#2b7fd4;"></div>
<svg class="i" style="left:588px;top:252px;" width="16" height="28" viewBox="0 0 16 28"><circle cx="8" cy="13.5" r="6.8" fill="#d9472b" stroke="none" stroke-width="1"/><rect x="4" y="12.2" width="8" height="2.6" fill="#fff"/></svg>
<div class="t" style="left:606.0px;top:261.0px;font-size:12.54px;color:#111;font-weight:normal;">Blocked</div>
<div class="a" style="left:682px;top:252px;width:127px;height:27px;background:#d9d9d9;"></div>
<svg class="i" style="left:682px;top:252px;" width="24" height="28" viewBox="0 0 24 28"><path d="M6.5 5.9 H10.9 V13.6 L7.6 17.6 L2.9 11.4 L3.2 9.6 L6.5 11.8 Z" fill="#666" stroke="#fff" stroke-width="0.9" stroke-linejoin="round"/><circle cx="14.3" cy="10.2" r="0.9" fill="#555"/><circle cx="12.9" cy="15.9" r="4.4" fill="#1f74c6" stroke="#fff" stroke-width="0.9"/><rect x="12.25" y="14.6" width="1.4" height="4" fill="#fff"/><circle cx="12.95" cy="13.2" r="0.85" fill="#fff"/></svg>
<div class="t" style="left:706.0px;top:260.0px;font-size:13.38px;color:#9a9a9a;font-weight:normal;">- Use the 'Additio</div>
<div class="a" style="left:809px;top:252px;width:1px;height:28px;background:#ececec;"></div>
<div class="t" style="left:812.2px;top:261.0px;font-size:12.70px;color:#111;font-weight:normal;letter-spacing:-0.9px">US</div>
<div class="a" style="left:865px;top:252px;width:1px;height:28px;background:#ececec;"></div>
<div class="a" style="left:866px;top:252px;width:151px;height:27px;background:#d9d9d9;"></div>
<div class="a" style="left:1018px;top:252px;width:63px;height:27px;background:#d9d9d9;"></div>
<div class="t" style="left:868.8px;top:260.0px;font-size:13.11px;color:#8f8f8f;font-weight:normal;">-- Unlicensed --</div>
<div class="a" style="left:1017px;top:252px;width:1px;height:28px;background:#fff;"></div>
<div class="a" style="left:1081px;top:252px;width:1px;height:28px;background:#e3e3e3;"></div>
<div class="a" style="left:0px;top:307px;width:1081px;height:1px;background:#eeeeee;"></div>
<div class="a" style="left:20px;top:280px;width:1px;height:28px;background:#eeeeee;"></div>
<div class="a" style="left:40px;top:280px;width:1px;height:28px;background:#eeeeee;"></div>
<div class="a" style="left:65px;top:280px;width:1px;height:28px;background:#eeeeee;"></div>
<svg class="i" style="left:21px;top:280px;" width="20" height="28" viewBox="0 0 20 28"><circle cx="10" cy="10.4" r="4.2" fill="#2a7bc3"/><path d="M3 20.2 Q3 16.6 6 16.1 H14 Q17 16.6 17 20.2Z" fill="#2a7bc3"/></svg>
<div class="t" style="left:68.3px;top:288.0px;font-size:13.12px;color:#111;font-weight:normal;">Claudia Fox</div>
<div class="a" style="left:241px;top:280px;width:1px;height:28px;background:#1d2b4a;"></div>
<div class="t" style="left:244.5px;top:288.0px;font-size:13.03px;color:#111;font-weight:normal;">Claudia.Fox@sygx2.onmicrosoft.com</div>
<div class="a" style="left:497px;top:280px;width:1px;height:28px;background:#ececec;"></div>
<div class="t" style="left:500.0px;top:288.0px;font-size:13.36px;color:#111;font-weight:normal;">Member</div>
<div class="a" style="left:562px;top:280px;width:1px;height:28px;background:#fff;"></div>
<div class="a" style="left:563px;top:280px;width:22px;height:27px;background:#efefef;"></div>
<svg class="i" style="left:567px;top:288px;" width="14" height="14" viewBox="0 0 14 14"><rect x="0.5" y="0.5" width="12" height="12" fill="none" stroke="#c9c9c9" stroke-width="1"/><path d="M3 6.5 L5.5 9.5 L10 3" fill="none" stroke="#b9b9b9" stroke-width="1.3"/></svg>
<div class="a" style="left:586px;top:280px;width:2px;height:28px;background:#2b7fd4;"></div>
<div class="a" style="left:680px;top:280px;width:2px;height:28px;background:#2b7fd4;"></div>
<svg class="i" style="left:588px;top:280px;" width="16" height="28" viewBox="0 0 16 28"><circle cx="8" cy="13.5" r="6.8" fill="#d9472b" stroke="none" stroke-width="1"/><rect x="4" y="12.2" width="8" height="2.6" fill="#fff"/></svg>
<div class="t" style="left:606.0px;top:289.0px;font-size:12.54px;color:#111;font-weight:normal;">Blocked</div>
<div class="a" style="left:682px;top:280px;width:127px;height:27px;background:#d9d9d9;"></div>
<svg class="i" style="left:682px;top:280px;" width="24" height="28" viewBox="0 0 24 28"><path d="M6.5 5.9 H10.9 V13.6 L7.6 17.6 L2.9 11.4 L3.2 9.6 L6.5 11.8 Z" fill="#666" stroke="#fff" stroke-width="0.9" stroke-linejoin="round"/><circle cx="14.3" cy="10.2" r="0.9" fill="#555"/><circle cx="12.9" cy="15.9" r="4.4" fill="#1f74c6" stroke="#fff" stroke-width="0.9"/><rect x="12.25" y="14.6" width="1.4" height="4" fill="#fff"/><circle cx="12.95" cy="13.2" r="0.85" fill="#fff"/></svg>
<div class="t" style="left:706.0px;top:288.0px;font-size:13.38px;color:#9a9a9a;font-weight:normal;">- Use the 'Additio</div>
<div class="a" style="left:809px;top:280px;width:1px;height:28px;background:#ececec;"></div>
<div class="t" style="left:812.2px;top:289.0px;font-size:12.70px;color:#111;font-weight:normal;letter-spacing:-0.9px">US</div>
<div class="a" style="left:865px;top:280px;width:1px;height:28px;background:#ececec;"></div>
<div class="a" style="left:868.8px;top:280px;width:147.20000000000005px;height:27px;overflow:hidden">
<div class="t" style="left:0.0px;top:9.0px;font-size:12.43px;color:#111;font-weight:normal;">Remote_Help_AddOn</div>
</div>
<div class="a" style="left:1018px;top:280px;width:63px;height:27px;background:#d9d9d9;"></div>
<svg class="i" style="left:1017px;top:280px;" width="24" height="28" viewBox="0 0 24 28"><path d="M11.6 8.6 Q8.6 6.6 6.1 8.6 Q4.6 10.6 6.1 12.3 Q7.6 13.4 9.2 12.6" fill="none" stroke="#5a5a5a" stroke-width="1.5"/><path d="M8.4 6 V8.3" stroke="#5a5a5a" stroke-width="1.3"/><path d="M4.8 17 L8.4 19.8" stroke="#5a5a5a" stroke-width="1.5"/><circle cx="13.5" cy="15.9" r="4.5" fill="#1f74c6" stroke="#fff" stroke-width="0.9"/><rect x="12.85" y="14.6" width="1.4" height="4" fill="#fff"/><circle cx="13.55" cy="13.2" r="0.85" fill="#fff"/></svg>
<div class="t" style="left:1042.7px;top:289.0px;font-size:12.53px;color:#9a9a9a;font-weight:normal;">- Set li</div>
<div class="a" style="left:1017px;top:280px;width:1px;height:28px;background:#fff;"></div>
<div class="a" style="left:1081px;top:280px;width:1px;height:28px;background:#e3e3e3;"></div>
<div class="a" style="left:0px;top:335px;width:1081px;height:1px;background:#eeeeee;"></div>
<div class="a" style="left:20px;top:308px;width:1px;height:28px;background:#eeeeee;"></div>
<div class="a" style="left:40px;top:308px;width:1px;height:28px;background:#eeeeee;"></div>
<div class="a" style="left:65px;top:308px;width:1px;height:28px;background:#eeeeee;"></div>
<svg class="i" style="left:21px;top:308px;" width="20" height="28" viewBox="0 0 20 28"><circle cx="10" cy="10.4" r="4.2" fill="#2a7bc3"/><path d="M3 20.2 Q3 16.6 6 16.1 H14 Q17 16.6 17 20.2Z" fill="#2a7bc3"/></svg>
<div class="t" style="left:68.3px;top:317.0px;font-size:12.45px;color:#111;font-weight:normal;">Cole Hanson</div>
<div class="a" style="left:241px;top:308px;width:1px;height:28px;background:#1d2b4a;"></div>
<div class="t" style="left:244.5px;top:317.0px;font-size:12.81px;color:#111;font-weight:normal;">Cole.Hanson@sygx2.onmicrosoft.com</div>
<div class="a" style="left:497px;top:308px;width:1px;height:28px;background:#ececec;"></div>
<div class="t" style="left:500.0px;top:316.0px;font-size:13.36px;color:#111;font-weight:normal;">Member</div>
<div class="a" style="left:562px;top:308px;width:1px;height:28px;background:#fff;"></div>
<div class="a" style="left:563px;top:308px;width:22px;height:27px;background:#d9d9d9;"></div>
<div class="a" style="left:586px;top:308px;width:2px;height:28px;background:#2b7fd4;"></div>
<div class="a" style="left:680px;top:308px;width:2px;height:28px;background:#2b7fd4;"></div>
<svg class="i" style="left:588px;top:308px;" width="16" height="28" viewBox="0 0 16 28"><circle cx="8" cy="13.5" r="6.8" fill="#d9472b" stroke="none" stroke-width="1"/><rect x="4" y="12.2" width="8" height="2.6" fill="#fff"/></svg>
<div class="t" style="left:606.0px;top:317.0px;font-size:12.54px;color:#111;font-weight:normal;">Blocked</div>
<div class="a" style="left:682px;top:308px;width:127px;height:27px;background:#d9d9d9;"></div>
<svg class="i" style="left:682px;top:308px;" width="24" height="28" viewBox="0 0 24 28"><path d="M6.5 5.9 H10.9 V13.6 L7.6 17.6 L2.9 11.4 L3.2 9.6 L6.5 11.8 Z" fill="#666" stroke="#fff" stroke-width="0.9" stroke-linejoin="round"/><circle cx="14.3" cy="10.2" r="0.9" fill="#555"/><circle cx="12.9" cy="15.9" r="4.4" fill="#1f74c6" stroke="#fff" stroke-width="0.9"/><rect x="12.25" y="14.6" width="1.4" height="4" fill="#fff"/><circle cx="12.95" cy="13.2" r="0.85" fill="#fff"/></svg>
<div class="t" style="left:706.0px;top:316.0px;font-size:13.38px;color:#9a9a9a;font-weight:normal;">- Use the 'Additio</div>
<div class="a" style="left:809px;top:308px;width:1px;height:28px;background:#ececec;"></div>
<div class="t" style="left:812.2px;top:317.0px;font-size:12.70px;color:#111;font-weight:normal;letter-spacing:-0.9px">US</div>
<div class="a" style="left:865px;top:308px;width:1px;height:28px;background:#ececec;"></div>
<div class="a" style="left:868.8px;top:308px;width:147.20000000000005px;height:27px;overflow:hidden">
<div class="t" style="left:0.0px;top:9.0px;font-size:12.43px;color:#111;font-weight:normal;">Remote_Help_AddOn</div>
</div>
<div class="a" style="left:1018px;top:308px;width:63px;height:27px;background:#d9d9d9;"></div>
<svg class="i" style="left:1017px;top:308px;" width="24" height="28" viewBox="0 0 24 28"><path d="M11.6 8.6 Q8.6 6.6 6.1 8.6 Q4.6 10.6 6.1 12.3 Q7.6 13.4 9.2 12.6" fill="none" stroke="#5a5a5a" stroke-width="1.5"/><path d="M8.4 6 V8.3" stroke="#5a5a5a" stroke-width="1.3"/><path d="M4.8 17 L8.4 19.8" stroke="#5a5a5a" stroke-width="1.5"/><circle cx="13.5" cy="15.9" r="4.5" fill="#1f74c6" stroke="#fff" stroke-width="0.9"/><rect x="12.85" y="14.6" width="1.4" height="4" fill="#fff"/><circle cx="13.55" cy="13.2" r="0.85" fill="#fff"/></svg>
<div class="t" style="left:1042.7px;top:317.0px;font-size:12.53px;color:#9a9a9a;font-weight:normal;">- Set li</div>
<div class="a" style="left:1017px;top:308px;width:1px;height:28px;background:#fff;"></div>
<div class="a" style="left:1081px;top:308px;width:1px;height:28px;background:#e3e3e3;"></div>
<div class="a" style="left:0px;top:363px;width:1081px;height:1px;background:#eeeeee;"></div>
<div class="a" style="left:20px;top:336px;width:1px;height:28px;background:#eeeeee;"></div>
<div class="a" style="left:40px;top:336px;width:1px;height:28px;background:#eeeeee;"></div>
<div class="a" style="left:65px;top:336px;width:1px;height:28px;background:#eeeeee;"></div>
<svg class="i" style="left:21px;top:336px;" width="20" height="28" viewBox="0 0 20 28"><circle cx="10" cy="10.4" r="4.2" fill="#2a7bc3"/><path d="M3 20.2 Q3 16.6 6 16.1 H14 Q17 16.6 17 20.2Z" fill="#2a7bc3"/></svg>
<div class="t" style="left:68.3px;top:344.0px;font-size:13.08px;color:#111;font-weight:normal;">Colton Page</div>
<div class="a" style="left:241px;top:336px;width:1px;height:28px;background:#1d2b4a;"></div>
<div class="t" style="left:244.5px;top:344.0px;font-size:13.02px;color:#111;font-weight:normal;">Colton.Page@sygx2.onmicrosoft.com</div>
<div class="a" style="left:497px;top:336px;width:1px;height:28px;background:#ececec;"></div>
<div class="t" style="left:500.0px;top:344.0px;font-size:13.36px;color:#111;font-weight:normal;">Member</div>
<div class="a" style="left:562px;top:336px;width:1px;height:28px;background:#fff;"></div>
<div class="a" style="left:563px;top:336px;width:22px;height:27px;background:#d9d9d9;"></div>
<div class="a" style="left:586px;top:336px;width:2px;height:28px;background:#2b7fd4;"></div>
<div class="a" style="left:680px;top:336px;width:2px;height:28px;background:#2b7fd4;"></div>
<svg class="i" style="left:588px;top:336px;" width="16" height="28" viewBox="0 0 16 28"><circle cx="8" cy="13.5" r="6.8" fill="#d9472b" stroke="none" stroke-width="1"/><rect x="4" y="12.2" width="8" height="2.6" fill="#fff"/></svg>
<div class="t" style="left:606.0px;top:345.0px;font-size:12.54px;color:#111;font-weight:normal;">Blocked</div>
<div class="a" style="left:682px;top:336px;width:127px;height:27px;background:#d9d9d9;"></div>
<svg class="i" style="left:682px;top:336px;" width="24" height="28" viewBox="0 0 24 28"><path d="M6.5 5.9 H10.9 V13.6 L7.6 17.6 L2.9 11.4 L3.2 9.6 L6.5 11.8 Z" fill="#666" stroke="#fff" stroke-width="0.9" stroke-linejoin="round"/><circle cx="14.3" cy="10.2" r="0.9" fill="#555"/><circle cx="12.9" cy="15.9" r="4.4" fill="#1f74c6" stroke="#fff" stroke-width="0.9"/><rect x="12.25" y="14.6" width="1.4" height="4" fill="#fff"/><circle cx="12.95" cy="13.2" r="0.85" fill="#fff"/></svg>
<div class="t" style="left:706.0px;top:344.0px;font-size:13.38px;color:#9a9a9a;font-weight:normal;">- Use the 'Additio</div>
<div class="a" style="left:809px;top:336px;width:1px;height:28px;background:#ececec;"></div>
<div class="t" style="left:812.2px;top:345.0px;font-size:12.70px;color:#111;font-weight:normal;letter-spacing:-0.9px">US</div>
<div class="a" style="left:865px;top:336px;width:1px;height:28px;background:#ececec;"></div>
<div class="a" style="left:868.8px;top:336px;width:147.20000000000005px;height:27px;overflow:hidden">
<div class="t" style="left:0.0px;top:9.0px;font-size:12.43px;color:#111;font-weight:normal;">Remote_Help_AddOn</div>
</div>
<div class="a" style="left:1018px;top:336px;width:63px;height:27px;background:#d9d9d9;"></div>
<svg class="i" style="left:1017px;top:336px;" width="24" height="28" viewBox="0 0 24 28"><path d="M11.6 8.6 Q8.6 6.6 6.1 8.6 Q4.6 10.6 6.1 12.3 Q7.6 13.4 9.2 12.6" fill="none" stroke="#5a5a5a" stroke-width="1.5"/><path d="M8.4 6 V8.3" stroke="#5a5a5a" stroke-width="1.3"/><path d="M4.8 17 L8.4 19.8" stroke="#5a5a5a" stroke-width="1.5"/><circle cx="13.5" cy="15.9" r="4.5" fill="#1f74c6" stroke="#fff" stroke-width="0.9"/><rect x="12.85" y="14.6" width="1.4" height="4" fill="#fff"/><circle cx="13.55" cy="13.2" r="0.85" fill="#fff"/></svg>
<div class="t" style="left:1042.7px;top:345.0px;font-size:12.53px;color:#9a9a9a;font-weight:normal;">- Set li</div>
<div class="a" style="left:1017px;top:336px;width:1px;height:28px;background:#fff;"></div>
<div class="a" style="left:1081px;top:336px;width:1px;height:28px;background:#e3e3e3;"></div>
<div class="a" style="left:0px;top:391px;width:1081px;height:1px;background:#eeeeee;"></div>
<div class="a" style="left:20px;top:364px;width:1px;height:28px;background:#eeeeee;"></div>
<div class="a" style="left:40px;top:364px;width:1px;height:28px;background:#eeeeee;"></div>
<div class="a" style="left:65px;top:364px;width:1px;height:28px;background:#eeeeee;"></div>
<svg class="i" style="left:21px;top:364px;" width="20" height="28" viewBox="0 0 20 28"><circle cx="10" cy="10.4" r="4.2" fill="#2a7bc3"/><path d="M3 20.2 Q3 16.6 6 16.1 H14 Q17 16.6 17 20.2Z" fill="#2a7bc3"/></svg>
<div class="t" style="left:68.3px;top:373.0px;font-size:12.44px;color:#111;font-weight:normal;">Conner Reed</div>
<div class="a" style="left:241px;top:364px;width:1px;height:28px;background:#1d2b4a;"></div>
<div class="t" style="left:244.5px;top:373.0px;font-size:12.84px;color:#111;font-weight:normal;">Conner.Reed@sygx2.onmicrosoft.com</div>
<div class="a" style="left:497px;top:364px;width:1px;height:28px;background:#ececec;"></div>
<div class="t" style="left:500.0px;top:372.0px;font-size:13.36px;color:#111;font-weight:normal;">Member</div>
<div class="a" style="left:562px;top:364px;width:1px;height:28px;background:#fff;"></div>
<div class="a" style="left:563px;top:364px;width:22px;height:27px;background:#d9d9d9;"></div>
<div class="a" style="left:586px;top:364px;width:2px;height:28px;background:#2b7fd4;"></div>
<div class="a" style="left:680px;top:364px;width:2px;height:28px;background:#2b7fd4;"></div>
<svg class="i" style="left:588px;top:364px;" width="16" height="28" viewBox="0 0 16 28"><circle cx="8" cy="13.5" r="6.8" fill="#d9472b" stroke="none" stroke-width="1"/><rect x="4" y="12.2" width="8" height="2.6" fill="#fff"/></svg>
<div class="t" style="left:606.0px;top:373.0px;font-size:12.54px;color:#111;font-weight:normal;">Blocked</div>
<div class="a" style="left:682px;top:364px;width:127px;height:27px;background:#d9d9d9;"></div>
<svg class="i" style="left:682px;top:364px;" width="24" height="28" viewBox="0 0 24 28"><path d="M6.5 5.9 H10.9 V13.6 L7.6 17.6 L2.9 11.4 L3.2 9.6 L6.5 11.8 Z" fill="#666" stroke="#fff" stroke-width="0.9" stroke-linejoin="round"/><circle cx="14.3" cy="10.2" r="0.9" fill="#555"/><circle cx="12.9" cy="15.9" r="4.4" fill="#1f74c6" stroke="#fff" stroke-width="0.9"/><rect x="12.25" y="14.6" width="1.4" height="4" fill="#fff"/><circle cx="12.95" cy="13.2" r="0.85" fill="#fff"/></svg>
<div class="t" style="left:706.0px;top:372.0px;font-size:13.38px;color:#9a9a9a;font-weight:normal;">- Use the 'Additio</div>
<div class="a" style="left:809px;top:364px;width:1px;height:28px;background:#ececec;"></div>
<div class="t" style="left:812.2px;top:373.0px;font-size:12.70px;color:#111;font-weight:normal;letter-spacing:-0.9px">US</div>
<div class="a" style="left:865px;top:364px;width:1px;height:28px;background:#ececec;"></div>
<div class="a" style="left:868.8px;top:364px;width:147.20000000000005px;height:27px;overflow:hidden">
<div class="t" style="left:0.0px;top:9.0px;font-size:12.43px;color:#111;font-weight:normal;">Remote_Help_AddOn</div>
</div>
<div class="a" style="left:1018px;top:364px;width:63px;height:27px;background:#d9d9d9;"></div>
<svg class="i" style="left:1017px;top:364px;" width="24" height="28" viewBox="0 0 24 28"><path d="M11.6 8.6 Q8.6 6.6 6.1 8.6 Q4.6 10.6 6.1 12.3 Q7.6 13.4 9.2 12.6" fill="none" stroke="#5a5a5a" stroke-width="1.5"/><path d="M8.4 6 V8.3" stroke="#5a5a5a" stroke-width="1.3"/><path d="M4.8 17 L8.4 19.8" stroke="#5a5a5a" stroke-width="1.5"/><circle cx="13.5" cy="15.9" r="4.5" fill="#1f74c6" stroke="#fff" stroke-width="0.9"/><rect x="12.85" y="14.6" width="1.4" height="4" fill="#fff"/><circle cx="13.55" cy="13.2" r="0.85" fill="#fff"/></svg>
<div class="t" style="left:1042.7px;top:373.0px;font-size:12.53px;color:#9a9a9a;font-weight:normal;">- Set li</div>
<div class="a" style="left:1017px;top:364px;width:1px;height:28px;background:#fff;"></div>
<div class="a" style="left:1081px;top:364px;width:1px;height:28px;background:#e3e3e3;"></div>
<div class="a" style="left:0px;top:419px;width:1081px;height:1px;background:#eeeeee;"></div>
<div class="a" style="left:20px;top:392px;width:1px;height:28px;background:#eeeeee;"></div>
<div class="a" style="left:40px;top:392px;width:1px;height:28px;background:#eeeeee;"></div>
<div class="a" style="left:65px;top:392px;width:1px;height:28px;background:#eeeeee;"></div>
<svg class="i" style="left:21px;top:392px;" width="20" height="28" viewBox="0 0 20 28"><circle cx="10" cy="10.4" r="4.2" fill="#2a7bc3"/><path d="M3 20.2 Q3 16.6 6 16.1 H14 Q17 16.6 17 20.2Z" fill="#2a7bc3"/></svg>
<div class="t" style="left:68.3px;top:401.0px;font-size:13.59px;color:#111;font-weight:normal;">Connor Barr</div>
<div class="a" style="left:241px;top:392px;width:1px;height:28px;background:#1d2b4a;"></div>
<div class="t" style="left:244.5px;top:400.0px;font-size:13.23px;color:#111;font-weight:normal;">Connor.Barr@sygx2.onmicrosoft.com</div>
<div class="a" style="left:497px;top:392px;width:1px;height:28px;background:#ececec;"></div>
<div class="t" style="left:500.0px;top:400.0px;font-size:13.36px;color:#111;font-weight:normal;">Member</div>
<div class="a" style="left:562px;top:392px;width:1px;height:28px;background:#fff;"></div>
<div class="a" style="left:563px;top:392px;width:22px;height:27px;background:#d9d9d9;"></div>
<div class="a" style="left:586px;top:392px;width:2px;height:28px;background:#2b7fd4;"></div>
<div class="a" style="left:680px;top:392px;width:2px;height:28px;background:#2b7fd4;"></div>
<svg class="i" style="left:588px;top:392px;" width="16" height="28" viewBox="0 0 16 28"><circle cx="8" cy="13.5" r="6.8" fill="#d9472b" stroke="none" stroke-width="1"/><rect x="4" y="12.2" width="8" height="2.6" fill="#fff"/></svg>
<div class="t" style="left:606.0px;top:401.0px;font-size:12.54px;color:#111;font-weight:normal;">Blocked</div>
<div class="a" style="left:682px;top:392px;width:127px;height:27px;background:#d9d9d9;"></div>
<svg class="i" style="left:682px;top:392px;" width="24" height="28" viewBox="0 0 24 28"><path d="M6.5 5.9 H10.9 V13.6 L7.6 17.6 L2.9 11.4 L3.2 9.6 L6.5 11.8 Z" fill="#666" stroke="#fff" stroke-width="0.9" stroke-linejoin="round"/><circle cx="14.3" cy="10.2" r="0.9" fill="#555"/><circle cx="12.9" cy="15.9" r="4.4" fill="#1f74c6" stroke="#fff" stroke-width="0.9"/><rect x="12.25" y="14.6" width="1.4" height="4" fill="#fff"/><circle cx="12.95" cy="13.2" r="0.85" fill="#fff"/></svg>
<div class="t" style="left:706.0px;top:400.0px;font-size:13.38px;color:#9a9a9a;font-weight:normal;">- Use the 'Additio</div>
<div class="a" style="left:809px;top:392px;width:1px;height:28px;background:#ececec;"></div>
<div class="t" style="left:812.2px;top:401.0px;font-size:12.70px;color:#111;font-weight:normal;letter-spacing:-0.9px">US</div>
<div class="a" style="left:865px;top:392px;width:1px;height:28px;background:#ececec;"></div>
<div class="a" style="left:868.8px;top:392px;width:147.20000000000005px;height:27px;overflow:hidden">
<div class="t" style="left:0.0px;top:9.0px;font-size:12.43px;color:#111;font-weight:normal;">Remote_Help_AddOn</div>
</div>
<div class="a" style="left:1018px;top:392px;width:63px;height:27px;background:#d9d9d9;"></div>
<svg class="i" style="left:1017px;top:392px;" width="24" height="28" viewBox="0 0 24 28"><path d="M11.6 8.6 Q8.6 6.6 6.1 8.6 Q4.6 10.6 6.1 12.3 Q7.6 13.4 9.2 12.6" fill="none" stroke="#5a5a5a" stroke-width="1.5"/><path d="M8.4 6 V8.3" stroke="#5a5a5a" stroke-width="1.3"/><path d="M4.8 17 L8.4 19.8" stroke="#5a5a5a" stroke-width="1.5"/><circle cx="13.5" cy="15.9" r="4.5" fill="#1f74c6" stroke="#fff" stroke-width="0.9"/><rect x="12.85" y="14.6" width="1.4" height="4" fill="#fff"/><circle cx="13.55" cy="13.2" r="0.85" fill="#fff"/></svg>
<div class="t" style="left:1042.7px;top:401.0px;font-size:12.53px;color:#9a9a9a;font-weight:normal;">- Set li</div>
<div class="a" style="left:1017px;top:392px;width:1px;height:28px;background:#fff;"></div>
<div class="a" style="left:1081px;top:392px;width:1px;height:28px;background:#e3e3e3;"></div>
<div class="a" style="left:0px;top:447px;width:1081px;height:1px;background:#eeeeee;"></div>
<div class="a" style="left:20px;top:420px;width:1px;height:28px;background:#eeeeee;"></div>
<div class="a" style="left:40px;top:420px;width:1px;height:28px;background:#eeeeee;"></div>
<div class="a" style="left:65px;top:420px;width:1px;height:28px;background:#eeeeee;"></div>
<svg class="i" style="left:21px;top:420px;" width="20" height="28" viewBox="0 0 20 28"><circle cx="10" cy="10.4" r="4.2" fill="#2a7bc3"/><path d="M3 20.2 Q3 16.6 6 16.1 H14 Q17 16.6 17 20.2Z" fill="#2a7bc3"/></svg>
<div class="t" style="left:68.3px;top:429.0px;font-size:12.44px;color:#111;font-weight:normal;">Connor Hope</div>
<div class="a" style="left:241px;top:420px;width:1px;height:28px;background:#1d2b4a;"></div>
<div class="t" style="left:244.5px;top:428.0px;font-size:13.31px;color:#111;font-weight:normal;">Connor.Hope@sygx2.onmicrosoft.com</div>
<div class="a" style="left:497px;top:420px;width:1px;height:28px;background:#ececec;"></div>
<div class="t" style="left:500.0px;top:428.0px;font-size:13.36px;color:#111;font-weight:normal;">Member</div>
<div class="a" style="left:562px;top:420px;width:1px;height:28px;background:#fff;"></div>
<div class="a" style="left:563px;top:420px;width:22px;height:27px;background:#d9d9d9;"></div>
<div class="a" style="left:586px;top:420px;width:2px;height:28px;background:#2b7fd4;"></div>
<div class="a" style="left:680px;top:420px;width:2px;height:28px;background:#2b7fd4;"></div>
<svg class="i" style="left:588px;top:420px;" width="16" height="28" viewBox="0 0 16 28"><circle cx="8" cy="13.5" r="6.8" fill="#d9472b" stroke="none" stroke-width="1"/><rect x="4" y="12.2" width="8" height="2.6" fill="#fff"/></svg>
<div class="t" style="left:606.0px;top:429.0px;font-size:12.54px;color:#111;font-weight:normal;">Blocked</div>
<div class="a" style="left:682px;top:420px;width:127px;height:27px;background:#d9d9d9;"></div>
<svg class="i" style="left:682px;top:420px;" width="24" height="28" viewBox="0 0 24 28"><path d="M6.5 5.9 H10.9 V13.6 L7.6 17.6 L2.9 11.4 L3.2 9.6 L6.5 11.8 Z" fill="#666" stroke="#fff" stroke-width="0.9" stroke-linejoin="round"/><circle cx="14.3" cy="10.2" r="0.9" fill="#555"/><circle cx="12.9" cy="15.9" r="4.4" fill="#1f74c6" stroke="#fff" stroke-width="0.9"/><rect x="12.25" y="14.6" width="1.4" height="4" fill="#fff"/><circle cx="12.95" cy="13.2" r="0.85" fill="#fff"/></svg>
<div class="t" style="left:706.0px;top:428.0px;font-size:13.38px;color:#9a9a9a;font-weight:normal;">- Use the 'Additio</div>
<div class="a" style="left:809px;top:420px;width:1px;height:28px;background:#ececec;"></div>
<div class="t" style="left:812.2px;top:429.0px;font-size:12.70px;color:#111;font-weight:normal;letter-spacing:-0.9px">US</div>
<div class="a" style="left:865px;top:420px;width:1px;height:28px;background:#ececec;"></div>
<div class="a" style="left:868.8px;top:420px;width:147.20000000000005px;height:27px;overflow:hidden">
<div class="t" style="left:0.0px;top:9.0px;font-size:12.43px;color:#111;font-weight:normal;">Remote_Help_AddOn</div>
</div>
<div class="a" style="left:1018px;top:420px;width:63px;height:27px;background:#d9d9d9;"></div>
<svg class="i" style="left:1017px;top:420px;" width="24" height="28" viewBox="0 0 24 28"><path d="M11.6 8.6 Q8.6 6.6 6.1 8.6 Q4.6 10.6 6.1 12.3 Q7.6 13.4 9.2 12.6" fill="none" stroke="#5a5a5a" stroke-width="1.5"/><path d="M8.4 6 V8.3" stroke="#5a5a5a" stroke-width="1.3"/><path d="M4.8 17 L8.4 19.8" stroke="#5a5a5a" stroke-width="1.5"/><circle cx="13.5" cy="15.9" r="4.5" fill="#1f74c6" stroke="#fff" stroke-width="0.9"/><rect x="12.85" y="14.6" width="1.4" height="4" fill="#fff"/><circle cx="13.55" cy="13.2" r="0.85" fill="#fff"/></svg>
<div class="t" style="left:1042.7px;top:429.0px;font-size:12.53px;color:#9a9a9a;font-weight:normal;">- Set li</div>
<div class="a" style="left:1017px;top:420px;width:1px;height:28px;background:#fff;"></div>
<div class="a" style="left:1081px;top:420px;width:1px;height:28px;background:#e3e3e3;"></div>
<div class="a" style="left:0px;top:475px;width:1081px;height:1px;background:#eeeeee;"></div>
<div class="a" style="left:20px;top:448px;width:1px;height:28px;background:#eeeeee;"></div>
<div class="a" style="left:40px;top:448px;width:1px;height:28px;background:#eeeeee;"></div>
<div class="a" style="left:65px;top:448px;width:1px;height:28px;background:#eeeeee;"></div>
<svg class="i" style="left:21px;top:448px;" width="20" height="28" viewBox="0 0 20 28"><circle cx="10" cy="10.4" r="4.2" fill="#2a7bc3"/><path d="M3 20.2 Q3 16.6 6 16.1 H14 Q17 16.6 17 20.2Z" fill="#2a7bc3"/></svg>
<div class="t" style="left:68.3px;top:457.0px;font-size:12.70px;color:#111;font-weight:normal;">Emiliano Snow</div>
<div class="a" style="left:241px;top:448px;width:1px;height:28px;background:#1d2b4a;"></div>
<div class="t" style="left:244.5px;top:457.0px;font-size:12.78px;color:#111;font-weight:normal;">Emiliano.Snow@sygx2.onmicrosoft.com</div>
<div class="a" style="left:497px;top:448px;width:1px;height:28px;background:#ececec;"></div>
<div class="t" style="left:500.0px;top:456.0px;font-size:13.36px;color:#111;font-weight:normal;">Member</div>
<div class="a" style="left:562px;top:448px;width:1px;height:28px;background:#fff;"></div>
<div class="a" style="left:563px;top:448px;width:22px;height:27px;background:#efefef;"></div>
<svg class="i" style="left:567px;top:456px;" width="14" height="14" viewBox="0 0 14 14"><rect x="0.5" y="0.5" width="12" height="12" fill="none" stroke="#c9c9c9" stroke-width="1"/><path d="M3 6.5 L5.5 9.5 L10 3" fill="none" stroke="#b9b9b9" stroke-width="1.3"/></svg>
<div class="a" style="left:586px;top:448px;width:2px;height:28px;background:#2b7fd4;"></div>
<div class="a" style="left:680px;top:448px;width:2px;height:28px;background:#2b7fd4;"></div>
<svg class="i" style="left:588px;top:448px;" width="16" height="28" viewBox="0 0 16 28"><circle cx="8" cy="13.5" r="6.8" fill="#d9472b" stroke="none" stroke-width="1"/><rect x="4" y="12.2" width="8" height="2.6" fill="#fff"/></svg>
<div class="t" style="left:606.0px;top:457.0px;font-size:12.54px;color:#111;font-weight:normal;">Blocked</div>
<div class="a" style="left:682px;top:448px;width:127px;height:27px;background:#d9d9d9;"></div>
<svg class="i" style="left:682px;top:448px;" width="24" height="28" viewBox="0 0 24 28"><path d="M6.5 5.9 H10.9 V13.6 L7.6 17.6 L2.9 11.4 L3.2 9.6 L6.5 11.8 Z" fill="#666" stroke="#fff" stroke-width="0.9" stroke-linejoin="round"/><circle cx="14.3" cy="10.2" r="0.9" fill="#555"/><circle cx="12.9" cy="15.9" r="4.4" fill="#1f74c6" stroke="#fff" stroke-width="0.9"/><rect x="12.25" y="14.6" width="1.4" height="4" fill="#fff"/><circle cx="12.95" cy="13.2" r="0.85" fill="#fff"/></svg>
<div class="t" style="left:706.0px;top:456.0px;font-size:13.38px;color:#9a9a9a;font-weight:normal;">- Use the 'Additio</div>
<div class="a" style="left:809px;top:448px;width:1px;height:28px;background:#ececec;"></div>
<div class="t" style="left:812.2px;top:457.0px;font-size:12.70px;color:#111;font-weight:normal;letter-spacing:-0.9px">US</div>
<div class="a" style="left:865px;top:448px;width:1px;height:28px;background:#ececec;"></div>
<div class="a" style="left:868.8px;top:448px;width:147.20000000000005px;height:27px;overflow:hidden">
<div class="t" style="left:0.0px;top:9.0px;font-size:12.43px;color:#111;font-weight:normal;">Remote_Help_AddOn</div>
</div>
<div class="a" style="left:1018px;top:448px;width:63px;height:27px;background:#d9d9d9;"></div>
<svg class="i" style="left:1017px;top:448px;" width="24" height="28" viewBox="0 0 24 28"><path d="M11.6 8.6 Q8.6 6.6 6.1 8.6 Q4.6 10.6 6.1 12.3 Q7.6 13.4 9.2 12.6" fill="none" stroke="#5a5a5a" stroke-width="1.5"/><path d="M8.4 6 V8.3" stroke="#5a5a5a" stroke-width="1.3"/><path d="M4.8 17 L8.4 19.8" stroke="#5a5a5a" stroke-width="1.5"/><circle cx="13.5" cy="15.9" r="4.5" fill="#1f74c6" stroke="#fff" stroke-width="0.9"/><rect x="12.85" y="14.6" width="1.4" height="4" fill="#fff"/><circle cx="13.55" cy="13.2" r="0.85" fill="#fff"/></svg>
<div class="t" style="left:1042.7px;top:457.0px;font-size:12.53px;color:#9a9a9a;font-weight:normal;">- Set li</div>
<div class="a" style="left:1017px;top:448px;width:1px;height:28px;background:#fff;"></div>
<div class="a" style="left:1081px;top:448px;width:1px;height:28px;background:#e3e3e3;"></div>
<div class="a" style="left:0px;top:503px;width:1081px;height:1px;background:#eeeeee;"></div>
<div class="a" style="left:20px;top:476px;width:1px;height:28px;background:#eeeeee;"></div>
<div class="a" style="left:40px;top:476px;width:1px;height:28px;background:#eeeeee;"></div>
<div class="a" style="left:65px;top:476px;width:1px;height:28px;background:#eeeeee;"></div>
<svg class="i" style="left:21px;top:476px;" width="20" height="28" viewBox="0 0 20 28"><circle cx="10" cy="10.4" r="4.2" fill="#2a7bc3"/><path d="M3 20.2 Q3 16.6 6 16.1 H14 Q17 16.6 17 20.2Z" fill="#2a7bc3"/></svg>
<div class="t" style="left:68.3px;top:485.0px;font-size:12.30px;color:#111;font-weight:normal;">Ethen Glass</div>
<div class="a" style="left:241px;top:476px;width:1px;height:28px;background:#1d2b4a;"></div>
<div class="t" style="left:244.5px;top:485.0px;font-size:12.66px;color:#111;font-weight:normal;">Ethen.Glass@sygx2.onmicrosoft.com</div>
<div class="a" style="left:497px;top:476px;width:1px;height:28px;background:#ececec;"></div>
<div class="t" style="left:500.0px;top:484.0px;font-size:13.36px;color:#111;font-weight:normal;">Member</div>
<div class="a" style="left:562px;top:476px;width:1px;height:28px;background:#fff;"></div>
<div class="a" style="left:563px;top:476px;width:22px;height:27px;background:#efefef;"></div>
<svg class="i" style="left:567px;top:484px;" width="14" height="14" viewBox="0 0 14 14"><rect x="0.5" y="0.5" width="12" height="12" fill="none" stroke="#c9c9c9" stroke-width="1"/><path d="M3 6.5 L5.5 9.5 L10 3" fill="none" stroke="#b9b9b9" stroke-width="1.3"/></svg>
<div class="a" style="left:586px;top:476px;width:2px;height:28px;background:#2b7fd4;"></div>
<div class="a" style="left:680px;top:476px;width:2px;height:28px;background:#2b7fd4;"></div>
<svg class="i" style="left:588px;top:476px;" width="16" height="28" viewBox="0 0 16 28"><circle cx="8" cy="13.5" r="6.8" fill="#d9472b" stroke="none" stroke-width="1"/><rect x="4" y="12.2" width="8" height="2.6" fill="#fff"/></svg>
<div class="t" style="left:606.0px;top:485.0px;font-size:12.54px;color:#111;font-weight:normal;">Blocked</div>
<div class="a" style="left:682px;top:476px;width:127px;height:27px;background:#d9d9d9;"></div>
<svg class="i" style="left:682px;top:476px;" width="24" height="28" viewBox="0 0 24 28"><path d="M6.5 5.9 H10.9 V13.6 L7.6 17.6 L2.9 11.4 L3.2 9.6 L6.5 11.8 Z" fill="#666" stroke="#fff" stroke-width="0.9" stroke-linejoin="round"/><circle cx="14.3" cy="10.2" r="0.9" fill="#555"/><circle cx="12.9" cy="15.9" r="4.4" fill="#1f74c6" stroke="#fff" stroke-width="0.9"/><rect x="12.25" y="14.6" width="1.4" height="4" fill="#fff"/><circle cx="12.95" cy="13.2" r="0.85" fill="#fff"/></svg>
<div class="t" style="left:706.0px;top:484.0px;font-size:13.38px;color:#9a9a9a;font-weight:normal;">- Use the 'Additio</div>
<div class="a" style="left:809px;top:476px;width:1px;height:28px;background:#ececec;"></div>
<div class="t" style="left:812.2px;top:485.0px;font-size:12.70px;color:#111;font-weight:normal;letter-spacing:-0.9px">US</div>
<div class="a" style="left:865px;top:476px;width:1px;height:28px;background:#ececec;"></div>
<div class="a" style="left:866px;top:476px;width:151px;height:27px;background:#d9d9d9;"></div>
<div class="a" style="left:1018px;top:476px;width:63px;height:27px;background:#d9d9d9;"></div>
<div class="t" style="left:868.8px;top:484.0px;font-size:13.11px;color:#8f8f8f;font-weight:normal;">-- Unlicensed --</div>
<div class="a" style="left:1017px;top:476px;width:1px;height:28px;background:#fff;"></div>
<div class="a" style="left:1081px;top:476px;width:1px;height:28px;background:#e3e3e3;"></div>
<div class="a" style="left:0px;top:531px;width:1081px;height:1px;background:#eeeeee;"></div>
<div class="a" style="left:20px;top:504px;width:1px;height:28px;background:#eeeeee;"></div>
<div class="a" style="left:40px;top:504px;width:1px;height:28px;background:#eeeeee;"></div>
<div class="a" style="left:65px;top:504px;width:1px;height:28px;background:#eeeeee;"></div>
<svg class="i" style="left:21px;top:504px;" width="20" height="28" viewBox="0 0 20 28"><circle cx="10" cy="10.4" r="4.2" fill="#2a7bc3"/><path d="M3 20.2 Q3 16.6 6 16.1 H14 Q17 16.6 17 20.2Z" fill="#2a7bc3"/></svg>
<div class="t" style="left:68.3px;top:513.0px;font-size:12.85px;color:#111;font-weight:normal;">Giselle Mccoy</div>
<div class="a" style="left:241px;top:504px;width:1px;height:28px;background:#1d2b4a;"></div>
<div class="t" style="left:244.5px;top:513.0px;font-size:12.84px;color:#111;font-weight:normal;">Giselle.Mccoy@sygx2.onmicrosoft.com</div>
<div class="a" style="left:497px;top:504px;width:1px;height:28px;background:#ececec;"></div>
<div class="t" style="left:500.0px;top:512.0px;font-size:13.36px;color:#111;font-weight:normal;">Member</div>
<div class="a" style="left:562px;top:504px;width:1px;height:28px;background:#fff;"></div>
<div class="a" style="left:563px;top:504px;width:22px;height:27px;background:#efefef;"></div>
<svg class="i" style="left:567px;top:512px;" width="14" height="14" viewBox="0 0 14 14"><rect x="0.5" y="0.5" width="12" height="12" fill="none" stroke="#c9c9c9" stroke-width="1"/><path d="M3 6.5 L5.5 9.5 L10 3" fill="none" stroke="#b9b9b9" stroke-width="1.3"/></svg>
<div class="a" style="left:586px;top:504px;width:2px;height:28px;background:#2b7fd4;"></div>
<div class="a" style="left:680px;top:504px;width:2px;height:28px;background:#2b7fd4;"></div>
<svg class="i" style="left:588px;top:504px;" width="16" height="28" viewBox="0 0 16 28"><circle cx="8" cy="13.5" r="6.8" fill="#d9472b" stroke="none" stroke-width="1"/><rect x="4" y="12.2" width="8" height="2.6" fill="#fff"/></svg>
<div class="t" style="left:606.0px;top:513.0px;font-size:12.54px;color:#111;font-weight:normal;">Blocked</div>
<div class="a" style="left:682px;top:504px;width:127px;height:27px;background:#d9d9d9;"></div>
<svg class="i" style="left:682px;top:504px;" width="24" height="28" viewBox="0 0 24 28"><path d="M6.5 5.9 H10.9 V13.6 L7.6 17.6 L2.9 11.4 L3.2 9.6 L6.5 11.8 Z" fill="#666" stroke="#fff" stroke-width="0.9" stroke-linejoin="round"/><circle cx="14.3" cy="10.2" r="0.9" fill="#555"/><circle cx="12.9" cy="15.9" r="4.4" fill="#1f74c6" stroke="#fff" stroke-width="0.9"/><rect x="12.25" y="14.6" width="1.4" height="4" fill="#fff"/><circle cx="12.95" cy="13.2" r="0.85" fill="#fff"/></svg>
<div class="t" style="left:706.0px;top:512.0px;font-size:13.38px;color:#9a9a9a;font-weight:normal;">- Use the 'Additio</div>
<div class="a" style="left:809px;top:504px;width:1px;height:28px;background:#ececec;"></div>
<div class="t" style="left:812.2px;top:513.0px;font-size:12.70px;color:#111;font-weight:normal;letter-spacing:-0.9px">US</div>
<div class="a" style="left:865px;top:504px;width:1px;height:28px;background:#ececec;"></div>
<div class="a" style="left:868.8px;top:504px;width:147.20000000000005px;height:27px;overflow:hidden">
<div class="t" style="left:0.0px;top:9.0px;font-size:12.60px;color:#111;font-weight:normal;">Microsoft_Entra_Private_Access_Premium</div>
</div>
<div class="a" style="left:1018px;top:504px;width:63px;height:27px;background:#d9d9d9;"></div>
<svg class="i" style="left:1017px;top:504px;" width="24" height="28" viewBox="0 0 24 28"><path d="M11.6 8.6 Q8.6 6.6 6.1 8.6 Q4.6 10.6 6.1 12.3 Q7.6 13.4 9.2 12.6" fill="none" stroke="#5a5a5a" stroke-width="1.5"/><path d="M8.4 6 V8.3" stroke="#5a5a5a" stroke-width="1.3"/><path d="M4.8 17 L8.4 19.8" stroke="#5a5a5a" stroke-width="1.5"/><circle cx="13.5" cy="15.9" r="4.5" fill="#1f74c6" stroke="#fff" stroke-width="0.9"/><rect x="12.85" y="14.6" width="1.4" height="4" fill="#fff"/><circle cx="13.55" cy="13.2" r="0.85" fill="#fff"/></svg>
<div class="t" style="left:1042.7px;top:513.0px;font-size:12.53px;color:#9a9a9a;font-weight:normal;">- Set li</div>
<div class="a" style="left:1017px;top:504px;width:1px;height:28px;background:#fff;"></div>
<div class="a" style="left:1081px;top:504px;width:1px;height:28px;background:#e3e3e3;"></div>
<div class="a" style="left:0px;top:559px;width:1081px;height:1px;background:#eeeeee;"></div>
<div class="a" style="left:20px;top:532px;width:1px;height:28px;background:#eeeeee;"></div>
<div class="a" style="left:40px;top:532px;width:1px;height:28px;background:#eeeeee;"></div>
<div class="a" style="left:65px;top:532px;width:1px;height:28px;background:#eeeeee;"></div>
<svg class="i" style="left:21px;top:532px;" width="20" height="28" viewBox="0 0 20 28"><circle cx="10" cy="10.4" r="4.2" fill="#2a7bc3"/><path d="M3 20.2 Q3 16.6 6 16.1 H14 Q17 16.6 17 20.2Z" fill="#2a7bc3"/></svg>
<div class="t" style="left:68.3px;top:540.0px;font-size:13.20px;color:#111;font-weight:normal;">Henrietta Mueller</div>
<div class="a" style="left:241px;top:532px;width:1px;height:28px;background:#1d2b4a;"></div>
<div class="t" style="left:244.5px;top:540.0px;font-size:13.03px;color:#111;font-weight:normal;">HenriettaM@sygx2.onmicrosoft.com</div>
<div class="a" style="left:497px;top:532px;width:1px;height:28px;background:#ececec;"></div>
<div class="t" style="left:500.0px;top:540.0px;font-size:13.36px;color:#111;font-weight:normal;">Member</div>
<div class="a" style="left:562px;top:532px;width:1px;height:28px;background:#fff;"></div>
<div class="a" style="left:563px;top:532px;width:22px;height:27px;background:#d9d9d9;"></div>
<div class="a" style="left:586px;top:532px;width:2px;height:28px;background:#2b7fd4;"></div>
<div class="a" style="left:680px;top:532px;width:2px;height:28px;background:#2b7fd4;"></div>
<svg class="i" style="left:588px;top:532px;" width="16" height="28" viewBox="0 0 16 28"><circle cx="8" cy="13.5" r="6.8" fill="#d9472b" stroke="none" stroke-width="1"/><rect x="4" y="12.2" width="8" height="2.6" fill="#fff"/></svg>
<div class="t" style="left:606.0px;top:541.0px;font-size:12.54px;color:#111;font-weight:normal;">Blocked</div>
<div class="a" style="left:682px;top:532px;width:127px;height:27px;background:#d9d9d9;"></div>
<svg class="i" style="left:682px;top:532px;" width="24" height="28" viewBox="0 0 24 28"><path d="M6.5 5.9 H10.9 V13.6 L7.6 17.6 L2.9 11.4 L3.2 9.6 L6.5 11.8 Z" fill="#666" stroke="#fff" stroke-width="0.9" stroke-linejoin="round"/><circle cx="14.3" cy="10.2" r="0.9" fill="#555"/><circle cx="12.9" cy="15.9" r="4.4" fill="#1f74c6" stroke="#fff" stroke-width="0.9"/><rect x="12.25" y="14.6" width="1.4" height="4" fill="#fff"/><circle cx="12.95" cy="13.2" r="0.85" fill="#fff"/></svg>
<div class="t" style="left:706.0px;top:540.0px;font-size:13.38px;color:#9a9a9a;font-weight:normal;">- Use the 'Additio</div>
<div class="a" style="left:809px;top:532px;width:1px;height:28px;background:#ececec;"></div>
<div class="t" style="left:812.2px;top:541.0px;font-size:12.70px;color:#111;font-weight:normal;letter-spacing:-0.9px">US</div>
<div class="a" style="left:865px;top:532px;width:1px;height:28px;background:#ececec;"></div>
<div class="a" style="left:868.8px;top:532px;width:147.20000000000005px;height:27px;overflow:hidden">
<div class="t" style="left:0.0px;top:9.0px;font-size:12.60px;color:#111;font-weight:normal;">Microsoft 365 E5 Developer</div>
</div>
<div class="a" style="left:1018px;top:532px;width:63px;height:27px;background:#d9d9d9;"></div>
<svg class="i" style="left:1017px;top:532px;" width="24" height="28" viewBox="0 0 24 28"><path d="M11.6 8.6 Q8.6 6.6 6.1 8.6 Q4.6 10.6 6.1 12.3 Q7.6 13.4 9.2 12.6" fill="none" stroke="#5a5a5a" stroke-width="1.5"/><path d="M8.4 6 V8.3" stroke="#5a5a5a" stroke-width="1.3"/><path d="M4.8 17 L8.4 19.8" stroke="#5a5a5a" stroke-width="1.5"/><circle cx="13.5" cy="15.9" r="4.5" fill="#1f74c6" stroke="#fff" stroke-width="0.9"/><rect x="12.85" y="14.6" width="1.4" height="4" fill="#fff"/><circle cx="13.55" cy="13.2" r="0.85" fill="#fff"/></svg>
<div class="t" style="left:1042.7px;top:541.0px;font-size:12.53px;color:#9a9a9a;font-weight:normal;">- Set li</div>
<div class="a" style="left:1017px;top:532px;width:1px;height:28px;background:#fff;"></div>
<div class="a" style="left:1081px;top:532px;width:1px;height:28px;background:#e3e3e3;"></div>
<div class="a" style="left:0px;top:587px;width:1081px;height:1px;background:#eeeeee;"></div>
<div class="a" style="left:20px;top:560px;width:1px;height:28px;background:#eeeeee;"></div>
<div class="a" style="left:40px;top:560px;width:1px;height:28px;background:#eeeeee;"></div>
<div class="a" style="left:65px;top:560px;width:1px;height:28px;background:#eeeeee;"></div>
<svg class="i" style="left:21px;top:560px;" width="20" height="28" viewBox="0 0 20 28"><circle cx="10" cy="10.4" r="4.2" fill="#2a7bc3"/><path d="M3 20.2 Q3 16.6 6 16.1 H14 Q17 16.6 17 20.2Z" fill="#2a7bc3"/></svg>
<div class="t" style="left:68.3px;top:569.0px;font-size:12.91px;color:#111;font-weight:normal;">Kendall Craig</div>
<div class="a" style="left:241px;top:560px;width:1px;height:28px;background:#1d2b4a;"></div>
<div class="t" style="left:244.5px;top:569.0px;font-size:12.87px;color:#111;font-weight:normal;">Kendall.Craig@sygx2.onmicrosoft.com</div>
<div class="a" style="left:497px;top:560px;width:1px;height:28px;background:#ececec;"></div>
<div class="t" style="left:500.0px;top:568.0px;font-size:13.36px;color:#111;font-weight:normal;">Member</div>
<div class="a" style="left:562px;top:560px;width:1px;height:28px;background:#fff;"></div>
<div class="a" style="left:563px;top:560px;width:22px;height:27px;background:#efefef;"></div>
<svg class="i" style="left:567px;top:568px;" width="14" height="14" viewBox="0 0 14 14"><rect x="0.5" y="0.5" width="12" height="12" fill="none" stroke="#c9c9c9" stroke-width="1"/><path d="M3 6.5 L5.5 9.5 L10 3" fill="none" stroke="#b9b9b9" stroke-width="1.3"/></svg>
<div class="a" style="left:586px;top:560px;width:2px;height:28px;background:#2b7fd4;"></div>
<div class="a" style="left:680px;top:560px;width:2px;height:28px;background:#2b7fd4;"></div>
<svg class="i" style="left:588px;top:560px;" width="16" height="28" viewBox="0 0 16 28"><circle cx="8" cy="13.5" r="6.8" fill="#d9472b" stroke="none" stroke-width="1"/><rect x="4" y="12.2" width="8" height="2.6" fill="#fff"/></svg>
<div class="t" style="left:606.0px;top:569.0px;font-size:12.54px;color:#111;font-weight:normal;">Blocked</div>
<div class="a" style="left:682px;top:560px;width:127px;height:27px;background:#d9d9d9;"></div>
<svg class="i" style="left:682px;top:560px;" width="24" height="28" viewBox="0 0 24 28"><path d="M6.5 5.9 H10.9 V13.6 L7.6 17.6 L2.9 11.4 L3.2 9.6 L6.5 11.8 Z" fill="#666" stroke="#fff" stroke-width="0.9" stroke-linejoin="round"/><circle cx="14.3" cy="10.2" r="0.9" fill="#555"/><circle cx="12.9" cy="15.9" r="4.4" fill="#1f74c6" stroke="#fff" stroke-width="0.9"/><rect x="12.25" y="14.6" width="1.4" height="4" fill="#fff"/><circle cx="12.95" cy="13.2" r="0.85" fill="#fff"/></svg>
<div class="t" style="left:706.0px;top:568.0px;font-size:13.38px;color:#9a9a9a;font-weight:normal;">- Use the 'Additio</div>
<div class="a" style="left:809px;top:560px;width:1px;height:28px;background:#ececec;"></div>
<div class="t" style="left:812.2px;top:569.0px;font-size:12.70px;color:#111;font-weight:normal;letter-spacing:-0.9px">US</div>
<div class="a" style="left:865px;top:560px;width:1px;height:28px;background:#ececec;"></div>
<div class="a" style="left:868.8px;top:560px;width:147.20000000000005px;height:27px;overflow:hidden">
<div class="t" style="left:0.0px;top:9.0px;font-size:12.43px;color:#111;font-weight:normal;">Remote_Help_AddOn</div>
</div>
<div class="a" style="left:1018px;top:560px;width:63px;height:27px;background:#d9d9d9;"></div>
<svg class="i" style="left:1017px;top:560px;" width="24" height="28" viewBox="0 0 24 28"><path d="M11.6 8.6 Q8.6 6.6 6.1 8.6 Q4.6 10.6 6.1 12.3 Q7.6 13.4 9.2 12.6" fill="none" stroke="#5a5a5a" stroke-width="1.5"/><path d="M8.4 6 V8.3" stroke="#5a5a5a" stroke-width="1.3"/><path d="M4.8 17 L8.4 19.8" stroke="#5a5a5a" stroke-width="1.5"/><circle cx="13.5" cy="15.9" r="4.5" fill="#1f74c6" stroke="#fff" stroke-width="0.9"/><rect x="12.85" y="14.6" width="1.4" height="4" fill="#fff"/><circle cx="13.55" cy="13.2" r="0.85" fill="#fff"/></svg>
<div class="t" style="left:1042.7px;top:569.0px;font-size:12.53px;color:#9a9a9a;font-weight:normal;">- Set li</div>
<div class="a" style="left:1017px;top:560px;width:1px;height:28px;background:#fff;"></div>
<div class="a" style="left:1081px;top:560px;width:1px;height:28px;background:#e3e3e3;"></div>
<div class="a" style="left:0px;top:615px;width:1081px;height:1px;background:#eeeeee;"></div>
<div class="a" style="left:20px;top:588px;width:1px;height:28px;background:#eeeeee;"></div>
<div class="a" style="left:40px;top:588px;width:1px;height:28px;background:#eeeeee;"></div>
<div class="a" style="left:65px;top:588px;width:1px;height:28px;background:#eeeeee;"></div>
<svg class="i" style="left:21px;top:588px;" width="20" height="28" viewBox="0 0 20 28"><circle cx="10" cy="10.4" r="4.2" fill="#2a7bc3"/><path d="M3 20.2 Q3 16.6 6 16.1 H14 Q17 16.6 17 20.2Z" fill="#2a7bc3"/></svg>
<div class="t" style="left:68.3px;top:597.0px;font-size:12.96px;color:#111;font-weight:normal;">Magdalena Haas</div>
<div class="a" style="left:241px;top:588px;width:1px;height:28px;background:#1d2b4a;"></div>
<div class="t" style="left:244.5px;top:597.0px;font-size:12.93px;color:#111;font-weight:normal;">Magdalena.Haas@sygx2.onmicrosoft.com</div>
<div class="a" style="left:497px;top:588px;width:1px;height:28px;background:#ececec;"></div>
<div class="t" style="left:500.0px;top:596.0px;font-size:13.36px;color:#111;font-weight:normal;">Member</div>
<div class="a" style="left:562px;top:588px;width:1px;height:28px;background:#fff;"></div>
<div class="a" style="left:563px;top:588px;width:22px;height:27px;background:#efefef;"></div>
<svg class="i" style="left:567px;top:596px;" width="14" height="14" viewBox="0 0 14 14"><rect x="0.5" y="0.5" width="12" height="12" fill="none" stroke="#c9c9c9" stroke-width="1"/><path d="M3 6.5 L5.5 9.5 L10 3" fill="none" stroke="#b9b9b9" stroke-width="1.3"/></svg>
<div class="a" style="left:586px;top:588px;width:2px;height:28px;background:#2b7fd4;"></div>
<div class="a" style="left:680px;top:588px;width:2px;height:28px;background:#2b7fd4;"></div>
<svg class="i" style="left:588px;top:588px;" width="16" height="28" viewBox="0 0 16 28"><circle cx="8" cy="13.5" r="6.8" fill="#d9472b" stroke="none" stroke-width="1"/><rect x="4" y="12.2" width="8" height="2.6" fill="#fff"/></svg>
<div class="t" style="left:606.0px;top:597.0px;font-size:12.54px;color:#111;font-weight:normal;">Blocked</div>
<div class="a" style="left:682px;top:588px;width:127px;height:27px;background:#d9d9d9;"></div>
<svg class="i" style="left:682px;top:588px;" width="24" height="28" viewBox="0 0 24 28"><path d="M6.5 5.9 H10.9 V13.6 L7.6 17.6 L2.9 11.4 L3.2 9.6 L6.5 11.8 Z" fill="#666" stroke="#fff" stroke-width="0.9" stroke-linejoin="round"/><circle cx="14.3" cy="10.2" r="0.9" fill="#555"/><circle cx="12.9" cy="15.9" r="4.4" fill="#1f74c6" stroke="#fff" stroke-width="0.9"/><rect x="12.25" y="14.6" width="1.4" height="4" fill="#fff"/><circle cx="12.95" cy="13.2" r="0.85" fill="#fff"/></svg>
<div class="t" style="left:706.0px;top:596.0px;font-size:13.38px;color:#9a9a9a;font-weight:normal;">- Use the 'Additio</div>
<div class="a" style="left:809px;top:588px;width:1px;height:28px;background:#ececec;"></div>
<div class="t" style="left:812.2px;top:597.0px;font-size:12.70px;color:#111;font-weight:normal;letter-spacing:-0.9px">US</div>
<div class="a" style="left:865px;top:588px;width:1px;height:28px;background:#ececec;"></div>
<div class="a" style="left:868.8px;top:588px;width:147.20000000000005px;height:27px;overflow:hidden">
<div class="t" style="left:0.0px;top:9.0px;font-size:12.43px;color:#111;font-weight:normal;">Remote_Help_AddOn</div>
</div>
<div class="a" style="left:1018px;top:588px;width:63px;height:27px;background:#d9d9d9;"></div>
<svg class="i" style="left:1017px;top:588px;" width="24" height="28" viewBox="0 0 24 28"><path d="M11.6 8.6 Q8.6 6.6 6.1 8.6 Q4.6 10.6 6.1 12.3 Q7.6 13.4 9.2 12.6" fill="none" stroke="#5a5a5a" stroke-width="1.5"/><path d="M8.4 6 V8.3" stroke="#5a5a5a" stroke-width="1.3"/><path d="M4.8 17 L8.4 19.8" stroke="#5a5a5a" stroke-width="1.5"/><circle cx="13.5" cy="15.9" r="4.5" fill="#1f74c6" stroke="#fff" stroke-width="0.9"/><rect x="12.85" y="14.6" width="1.4" height="4" fill="#fff"/><circle cx="13.55" cy="13.2" r="0.85" fill="#fff"/></svg>
<div class="t" style="left:1042.7px;top:597.0px;font-size:12.53px;color:#9a9a9a;font-weight:normal;">- Set li</div>
<div class="a" style="left:1017px;top:588px;width:1px;height:28px;background:#fff;"></div>
<div class="a" style="left:1081px;top:588px;width:1px;height:28px;background:#e3e3e3;"></div>
<div class="a" style="left:0px;top:643px;width:1081px;height:1px;background:#eeeeee;"></div>
<div class="a" style="left:20px;top:616px;width:1px;height:28px;background:#eeeeee;"></div>
<div class="a" style="left:40px;top:616px;width:1px;height:28px;background:#eeeeee;"></div>
<div class="a" style="left:65px;top:616px;width:1px;height:28px;background:#eeeeee;"></div>
<svg class="i" style="left:21px;top:616px;" width="20" height="28" viewBox="0 0 20 28"><circle cx="10" cy="10.4" r="4.2" fill="#2a7bc3"/><path d="M3 20.2 Q3 16.6 6 16.1 H14 Q17 16.6 17 20.2Z" fill="#2a7bc3"/></svg>
<div class="t" style="left:68.3px;top:625.0px;font-size:12.74px;color:#111;font-weight:normal;">Makena Solis</div>
<div class="a" style="left:241px;top:616px;width:1px;height:28px;background:#1d2b4a;"></div>
<div class="t" style="left:244.5px;top:625.0px;font-size:12.87px;color:#111;font-weight:normal;">Makena.Solis@sygx2.onmicrosoft.com</div>
<div class="a" style="left:497px;top:616px;width:1px;height:28px;background:#ececec;"></div>
<div class="t" style="left:500.0px;top:624.0px;font-size:13.36px;color:#111;font-weight:normal;">Member</div>
<div class="a" style="left:562px;top:616px;width:1px;height:28px;background:#fff;"></div>
<div class="a" style="left:563px;top:616px;width:22px;height:27px;background:#efefef;"></div>
<svg class="i" style="left:567px;top:624px;" width="14" height="14" viewBox="0 0 14 14"><rect x="0.5" y="0.5" width="12" height="12" fill="none" stroke="#c9c9c9" stroke-width="1"/><path d="M3 6.5 L5.5 9.5 L10 3" fill="none" stroke="#b9b9b9" stroke-width="1.3"/></svg>
<div class="a" style="left:586px;top:616px;width:2px;height:28px;background:#2b7fd4;"></div>
<div class="a" style="left:680px;top:616px;width:2px;height:28px;background:#2b7fd4;"></div>
<svg class="i" style="left:588px;top:616px;" width="16" height="28" viewBox="0 0 16 28"><circle cx="8" cy="13.5" r="6.8" fill="#d9472b" stroke="none" stroke-width="1"/><rect x="4" y="12.2" width="8" height="2.6" fill="#fff"/></svg>
<div class="t" style="left:606.0px;top:625.0px;font-size:12.54px;color:#111;font-weight:normal;">Blocked</div>
<div class="a" style="left:682px;top:616px;width:127px;height:27px;background:#d9d9d9;"></div>
<svg class="i" style="left:682px;top:616px;" width="24" height="28" viewBox="0 0 24 28"><path d="M6.5 5.9 H10.9 V13.6 L7.6 17.6 L2.9 11.4 L3.2 9.6 L6.5 11.8 Z" fill="#666" stroke="#fff" stroke-width="0.9" stroke-linejoin="round"/><circle cx="14.3" cy="10.2" r="0.9" fill="#555"/><circle cx="12.9" cy="15.9" r="4.4" fill="#1f74c6" stroke="#fff" stroke-width="0.9"/><rect x="12.25" y="14.6" width="1.4" height="4" fill="#fff"/><circle cx="12.95" cy="13.2" r="0.85" fill="#fff"/></svg>
<div class="t" style="left:706.0px;top:624.0px;font-size:13.38px;color:#9a9a9a;font-weight:normal;">- Use the 'Additio</div>
<div class="a" style="left:809px;top:616px;width:1px;height:28px;background:#ececec;"></div>
<div class="t" style="left:812.2px;top:625.0px;font-size:12.70px;color:#111;font-weight:normal;letter-spacing:-0.9px">US</div>
<div class="a" style="left:865px;top:616px;width:1px;height:28px;background:#ececec;"></div>
<div class="a" style="left:868.8px;top:616px;width:147.20000000000005px;height:27px;overflow:hidden">
<div class="t" style="left:0.0px;top:9.0px;font-size:12.43px;color:#111;font-weight:normal;">Remote_Help_AddOn</div>
</div>
<div class="a" style="left:1018px;top:616px;width:63px;height:27px;background:#d9d9d9;"></div>
<svg class="i" style="left:1017px;top:616px;" width="24" height="28" viewBox="0 0 24 28"><path d="M11.6 8.6 Q8.6 6.6 6.1 8.6 Q4.6 10.6 6.1 12.3 Q7.6 13.4 9.2 12.6" fill="none" stroke="#5a5a5a" stroke-width="1.5"/><path d="M8.4 6 V8.3" stroke="#5a5a5a" stroke-width="1.3"/><path d="M4.8 17 L8.4 19.8" stroke="#5a5a5a" stroke-width="1.5"/><circle cx="13.5" cy="15.9" r="4.5" fill="#1f74c6" stroke="#fff" stroke-width="0.9"/><rect x="12.85" y="14.6" width="1.4" height="4" fill="#fff"/><circle cx="13.55" cy="13.2" r="0.85" fill="#fff"/></svg>
<div class="t" style="left:1042.7px;top:625.0px;font-size:12.53px;color:#9a9a9a;font-weight:normal;">- Set li</div>
<div class="a" style="left:1017px;top:616px;width:1px;height:28px;background:#fff;"></div>
<div class="a" style="left:1081px;top:616px;width:1px;height:28px;background:#e3e3e3;"></div>
<div class="a" style="left:0px;top:671px;width:1081px;height:1px;background:#eeeeee;"></div>
<div class="a" style="left:20px;top:644px;width:1px;height:28px;background:#eeeeee;"></div>
<div class="a" style="left:40px;top:644px;width:1px;height:28px;background:#eeeeee;"></div>
<div class="a" style="left:65px;top:644px;width:1px;height:28px;background:#eeeeee;"></div>
<svg class="i" style="left:21px;top:644px;" width="20" height="28" viewBox="0 0 20 28"><circle cx="10" cy="10.4" r="4.2" fill="#2a7bc3"/><path d="M3 20.2 Q3 16.6 6 16.1 H14 Q17 16.6 17 20.2Z" fill="#2a7bc3"/></svg>
<div class="t" style="left:68.3px;top:652.0px;font-size:13.19px;color:#111;font-weight:normal;">Matthew Proctor</div>
<div class="a" style="left:241px;top:644px;width:1px;height:28px;background:#1d2b4a;"></div>
<div class="t" style="left:244.5px;top:652.0px;font-size:13.08px;color:#111;font-weight:normal;">Matthew.Proctor@sygx2.onmicrosoft.com</div>
<div class="a" style="left:497px;top:644px;width:1px;height:28px;background:#ececec;"></div>
<div class="t" style="left:500.0px;top:652.0px;font-size:13.36px;color:#111;font-weight:normal;">Member</div>
<div class="a" style="left:562px;top:644px;width:1px;height:28px;background:#fff;"></div>
<div class="a" style="left:563px;top:644px;width:22px;height:27px;background:#efefef;"></div>
<svg class="i" style="left:567px;top:652px;" width="14" height="14" viewBox="0 0 14 14"><rect x="0.5" y="0.5" width="12" height="12" fill="none" stroke="#c9c9c9" stroke-width="1"/><path d="M3 6.5 L5.5 9.5 L10 3" fill="none" stroke="#b9b9b9" stroke-width="1.3"/></svg>
<div class="a" style="left:586px;top:644px;width:2px;height:28px;background:#2b7fd4;"></div>
<div class="a" style="left:680px;top:644px;width:2px;height:28px;background:#2b7fd4;"></div>
<svg class="i" style="left:588px;top:644px;" width="16" height="28" viewBox="0 0 16 28"><circle cx="8" cy="13.5" r="6.8" fill="#d9472b" stroke="none" stroke-width="1"/><rect x="4" y="12.2" width="8" height="2.6" fill="#fff"/></svg>
<div class="t" style="left:606.0px;top:653.0px;font-size:12.54px;color:#111;font-weight:normal;">Blocked</div>
<div class="a" style="left:682px;top:644px;width:127px;height:27px;background:#d9d9d9;"></div>
<svg class="i" style="left:682px;top:644px;" width="24" height="28" viewBox="0 0 24 28"><path d="M6.5 5.9 H10.9 V13.6 L7.6 17.6 L2.9 11.4 L3.2 9.6 L6.5 11.8 Z" fill="#666" stroke="#fff" stroke-width="0.9" stroke-linejoin="round"/><circle cx="14.3" cy="10.2" r="0.9" fill="#555"/><circle cx="12.9" cy="15.9" r="4.4" fill="#1f74c6" stroke="#fff" stroke-width="0.9"/><rect x="12.25" y="14.6" width="1.4" height="4" fill="#fff"/><circle cx="12.95" cy="13.2" r="0.85" fill="#fff"/></svg>
<div class="t" style="left:706.0px;top:652.0px;font-size:13.38px;color:#9a9a9a;font-weight:normal;">- Use the 'Additio</div>
<div class="a" style="left:809px;top:644px;width:1px;height:28px;background:#ececec;"></div>
<div class="t" style="left:812.2px;top:653.0px;font-size:12.70px;color:#111;font-weight:normal;letter-spacing:-0.9px">US</div>
<div class="a" style="left:865px;top:644px;width:1px;height:28px;background:#ececec;"></div>
<div class="a" style="left:868.8px;top:644px;width:147.20000000000005px;height:27px;overflow:hidden">
<div class="t" style="left:0.0px;top:9.0px;font-size:12.43px;color:#111;font-weight:normal;">Remote_Help_AddOn</div>
</div>
<div class="a" style="left:1018px;top:644px;width:63px;height:27px;background:#d9d9d9;"></div>
<svg class="i" style="left:1017px;top:644px;" width="24" height="28" viewBox="0 0 24 28"><path d="M11.6 8.6 Q8.6 6.6 6.1 8.6 Q4.6 10.6 6.1 12.3 Q7.6 13.4 9.2 12.6" fill="none" stroke="#5a5a5a" stroke-width="1.5"/><path d="M8.4 6 V8.3" stroke="#5a5a5a" stroke-width="1.3"/><path d="M4.8 17 L8.4 19.8" stroke="#5a5a5a" stroke-width="1.5"/><circle cx="13.5" cy="15.9" r="4.5" fill="#1f74c6" stroke="#fff" stroke-width="0.9"/><rect x="12.85" y="14.6" width="1.4" height="4" fill="#fff"/><circle cx="13.55" cy="13.2" r="0.85" fill="#fff"/></svg>
<div class="t" style="left:1042.7px;top:653.0px;font-size:12.53px;color:#9a9a9a;font-weight:normal;">- Set li</div>
<div class="a" style="left:1017px;top:644px;width:1px;height:28px;background:#fff;"></div>
<div class="a" style="left:1081px;top:644px;width:1px;height:28px;background:#e3e3e3;"></div>
<div class="a" style="left:0px;top:699px;width:1081px;height:1px;background:#eeeeee;"></div>
<div class="a" style="left:20px;top:672px;width:1px;height:28px;background:#eeeeee;"></div>
<div class="a" style="left:40px;top:672px;width:1px;height:28px;background:#eeeeee;"></div>
<div class="a" style="left:65px;top:672px;width:1px;height:28px;background:#eeeeee;"></div>
<svg class="i" style="left:21px;top:672px;" width="20" height="28" viewBox="0 0 20 28"><circle cx="10" cy="10.4" r="4.2" fill="#2a7bc3"/><path d="M3 20.2 Q3 16.6 6 16.1 H14 Q17 16.6 17 20.2Z" fill="#2a7bc3"/></svg>
<div class="t" style="left:68.3px;top:680.0px;font-size:13.39px;color:#111;font-weight:normal;">Mister Test</div>
<div class="a" style="left:241px;top:672px;width:1px;height:28px;background:#1d2b4a;"></div>
<div class="t" style="left:244.5px;top:681.0px;font-size:12.71px;color:#111;font-weight:normal;">mister_test@ovh.ytria.io</div>
<div class="a" style="left:497px;top:672px;width:1px;height:28px;background:#ececec;"></div>
<div class="t" style="left:500.0px;top:680.0px;font-size:13.36px;color:#111;font-weight:normal;">Member</div>
<div class="a" style="left:562px;top:672px;width:1px;height:28px;background:#fff;"></div>
<div class="a" style="left:563px;top:672px;width:22px;height:27px;background:#efefef;"></div>
<svg class="i" style="left:567px;top:680px;" width="14" height="14" viewBox="0 0 14 14"><rect x="0.5" y="0.5" width="12" height="12" fill="none" stroke="#c9c9c9" stroke-width="1"/><path d="M3 6.5 L5.5 9.5 L10 3" fill="none" stroke="#b9b9b9" stroke-width="1.3"/></svg>
<div class="a" style="left:586px;top:672px;width:2px;height:28px;background:#2b7fd4;"></div>
<div class="a" style="left:680px;top:672px;width:2px;height:28px;background:#2b7fd4;"></div>
<svg class="i" style="left:588px;top:672px;" width="16" height="28" viewBox="0 0 16 28"><circle cx="8" cy="13.5" r="6.8" fill="#d9472b" stroke="none" stroke-width="1"/><rect x="4" y="12.2" width="8" height="2.6" fill="#fff"/></svg>
<div class="t" style="left:606.0px;top:681.0px;font-size:12.54px;color:#111;font-weight:normal;">Blocked</div>
<div class="a" style="left:682px;top:672px;width:127px;height:27px;background:#d9d9d9;"></div>
<svg class="i" style="left:682px;top:672px;" width="24" height="28" viewBox="0 0 24 28"><path d="M6.5 5.9 H10.9 V13.6 L7.6 17.6 L2.9 11.4 L3.2 9.6 L6.5 11.8 Z" fill="#666" stroke="#fff" stroke-width="0.9" stroke-linejoin="round"/><circle cx="14.3" cy="10.2" r="0.9" fill="#555"/><circle cx="12.9" cy="15.9" r="4.4" fill="#1f74c6" stroke="#fff" stroke-width="0.9"/><rect x="12.25" y="14.6" width="1.4" height="4" fill="#fff"/><circle cx="12.95" cy="13.2" r="0.85" fill="#fff"/></svg>
<div class="t" style="left:706.0px;top:680.0px;font-size:13.38px;color:#9a9a9a;font-weight:normal;">- Use the 'Additio</div>
<div class="a" style="left:809px;top:672px;width:1px;height:28px;background:#ececec;"></div>
<div class="t" style="left:812.2px;top:681.0px;font-size:12.70px;color:#111;font-weight:normal;letter-spacing:-0.9px">US</div>
<div class="a" style="left:865px;top:672px;width:1px;height:28px;background:#ececec;"></div>
<div class="a" style="left:868.8px;top:672px;width:147.20000000000005px;height:27px;overflow:hidden">
<div class="t" style="left:0.0px;top:9.0px;font-size:12.43px;color:#111;font-weight:normal;">Remote_Help_AddOn</div>
</div>
<div class="a" style="left:1018px;top:672px;width:63px;height:27px;background:#d9d9d9;"></div>
<svg class="i" style="left:1017px;top:672px;" width="24" height="28" viewBox="0 0 24 28"><path d="M11.6 8.6 Q8.6 6.6 6.1 8.6 Q4.6 10.6 6.1 12.3 Q7.6 13.4 9.2 12.6" fill="none" stroke="#5a5a5a" stroke-width="1.5"/><path d="M8.4 6 V8.3" stroke="#5a5a5a" stroke-width="1.3"/><path d="M4.8 17 L8.4 19.8" stroke="#5a5a5a" stroke-width="1.5"/><circle cx="13.5" cy="15.9" r="4.5" fill="#1f74c6" stroke="#fff" stroke-width="0.9"/><rect x="12.85" y="14.6" width="1.4" height="4" fill="#fff"/><circle cx="13.55" cy="13.2" r="0.85" fill="#fff"/></svg>
<div class="t" style="left:1042.7px;top:681.0px;font-size:12.53px;color:#9a9a9a;font-weight:normal;">- Set li</div>
<div class="a" style="left:1017px;top:672px;width:1px;height:28px;background:#fff;"></div>
<div class="a" style="left:1081px;top:672px;width:1px;height:28px;background:#e3e3e3;"></div>
<div class="a" style="left:0px;top:727px;width:1081px;height:1px;background:#eeeeee;"></div>
<div class="a" style="left:20px;top:700px;width:1px;height:28px;background:#eeeeee;"></div>
<div class="a" style="left:40px;top:700px;width:1px;height:28px;background:#eeeeee;"></div>
<div class="a" style="left:65px;top:700px;width:1px;height:28px;background:#eeeeee;"></div>
<svg class="i" style="left:21px;top:700px;" width="20" height="28" viewBox="0 0 20 28"><circle cx="10" cy="10.4" r="4.2" fill="#2a7bc3"/><path d="M3 20.2 Q3 16.6 6 16.1 H14 Q17 16.6 17 20.2Z" fill="#2a7bc3"/></svg>
<div class="t" style="left:68.3px;top:708.0px;font-size:13.06px;color:#111;font-weight:normal;">Naomi Rich</div>
<div class="a" style="left:241px;top:700px;width:1px;height:28px;background:#1d2b4a;"></div>
<div class="t" style="left:244.5px;top:709.0px;font-size:12.79px;color:#111;font-weight:normal;">Naomi.Rich@sygx2.onmicrosoft.com</div>
<div class="a" style="left:497px;top:700px;width:1px;height:28px;background:#ececec;"></div>
<div class="t" style="left:500.0px;top:708.0px;font-size:13.36px;color:#111;font-weight:normal;">Member</div>
<div class="a" style="left:562px;top:700px;width:1px;height:28px;background:#fff;"></div>
<div class="a" style="left:563px;top:700px;width:22px;height:27px;background:#efefef;"></div>
<svg class="i" style="left:567px;top:708px;" width="14" height="14" viewBox="0 0 14 14"><rect x="0.5" y="0.5" width="12" height="12" fill="none" stroke="#c9c9c9" stroke-width="1"/><path d="M3 6.5 L5.5 9.5 L10 3" fill="none" stroke="#b9b9b9" stroke-width="1.3"/></svg>
<div class="a" style="left:586px;top:700px;width:2px;height:28px;background:#2b7fd4;"></div>
<div class="a" style="left:680px;top:700px;width:2px;height:28px;background:#2b7fd4;"></div>
<svg class="i" style="left:588px;top:700px;" width="16" height="28" viewBox="0 0 16 28"><circle cx="8" cy="13.5" r="6.8" fill="#d9472b" stroke="none" stroke-width="1"/><rect x="4" y="12.2" width="8" height="2.6" fill="#fff"/></svg>
<div class="t" style="left:606.0px;top:709.0px;font-size:12.54px;color:#111;font-weight:normal;">Blocked</div>
<div class="a" style="left:682px;top:700px;width:127px;height:27px;background:#d9d9d9;"></div>
<svg class="i" style="left:682px;top:700px;" width="24" height="28" viewBox="0 0 24 28"><path d="M6.5 5.9 H10.9 V13.6 L7.6 17.6 L2.9 11.4 L3.2 9.6 L6.5 11.8 Z" fill="#666" stroke="#fff" stroke-width="0.9" stroke-linejoin="round"/><circle cx="14.3" cy="10.2" r="0.9" fill="#555"/><circle cx="12.9" cy="15.9" r="4.4" fill="#1f74c6" stroke="#fff" stroke-width="0.9"/><rect x="12.25" y="14.6" width="1.4" height="4" fill="#fff"/><circle cx="12.95" cy="13.2" r="0.85" fill="#fff"/></svg>
<div class="t" style="left:706.0px;top:708.0px;font-size:13.38px;color:#9a9a9a;font-weight:normal;">- Use the 'Additio</div>
<div class="a" style="left:809px;top:700px;width:1px;height:28px;background:#ececec;"></div>
<div class="t" style="left:812.2px;top:709.0px;font-size:12.70px;color:#111;font-weight:normal;letter-spacing:-0.9px">US</div>
<div class="a" style="left:865px;top:700px;width:1px;height:28px;background:#ececec;"></div>
<div class="a" style="left:868.8px;top:700px;width:147.20000000000005px;height:27px;overflow:hidden">
<div class="t" style="left:0.0px;top:9.0px;font-size:12.43px;color:#111;font-weight:normal;">Remote_Help_AddOn</div>
</div>
<div class="a" style="left:1018px;top:700px;width:63px;height:27px;background:#d9d9d9;"></div>
<svg class="i" style="left:1017px;top:700px;" width="24" height="28" viewBox="0 0 24 28"><path d="M11.6 8.6 Q8.6 6.6 6.1 8.6 Q4.6 10.6 6.1 12.3 Q7.6 13.4 9.2 12.6" fill="none" stroke="#5a5a5a" stroke-width="1.5"/><path d="M8.4 6 V8.3" stroke="#5a5a5a" stroke-width="1.3"/><path d="M4.8 17 L8.4 19.8" stroke="#5a5a5a" stroke-width="1.5"/><circle cx="13.5" cy="15.9" r="4.5" fill="#1f74c6" stroke="#fff" stroke-width="0.9"/><rect x="12.85" y="14.6" width="1.4" height="4" fill="#fff"/><circle cx="13.55" cy="13.2" r="0.85" fill="#fff"/></svg>
<div class="t" style="left:1042.7px;top:709.0px;font-size:12.53px;color:#9a9a9a;font-weight:normal;">- Set li</div>
<div class="a" style="left:1017px;top:700px;width:1px;height:28px;background:#fff;"></div>
<div class="a" style="left:1081px;top:700px;width:1px;height:28px;background:#e3e3e3;"></div>
<div class="a" style="left:0px;top:755px;width:1081px;height:1px;background:#eeeeee;"></div>
<div class="a" style="left:20px;top:728px;width:1px;height:28px;background:#eeeeee;"></div>
<div class="a" style="left:40px;top:728px;width:1px;height:28px;background:#eeeeee;"></div>
<div class="a" style="left:65px;top:728px;width:1px;height:28px;background:#eeeeee;"></div>
<svg class="i" style="left:21px;top:728px;" width="20" height="28" viewBox="0 0 20 28"><circle cx="10" cy="10.4" r="4.2" fill="#2a7bc3"/><path d="M3 20.2 Q3 16.6 6 16.1 H14 Q17 16.6 17 20.2Z" fill="#2a7bc3"/></svg>
<svg class="i" style="left:0px;top:728px;" width="20" height="28" viewBox="0 0 20 28"><circle cx="10.9" cy="13" r="6.1" fill="none" stroke="#8a8a8a" stroke-width="1.3"/><circle cx="10.9" cy="13" r="2.5" fill="#a3a3a3"/></svg>
<div class="t" style="left:68.3px;top:736.0px;font-size:13.11px;color:#111;font-weight:normal;">Porter Kline</div>
<div class="a" style="left:241px;top:728px;width:1px;height:28px;background:#1d2b4a;"></div>
<div class="t" style="left:244.5px;top:737.0px;font-size:12.94px;color:#111;font-weight:normal;">Porter.Kline@sygx2.onmicrosoft.com</div>
<div class="a" style="left:497px;top:728px;width:1px;height:28px;background:#ececec;"></div>
<div class="t" style="left:500.0px;top:736.0px;font-size:13.36px;color:#111;font-weight:normal;">Member</div>
<div class="a" style="left:562px;top:728px;width:1px;height:28px;background:#fff;"></div>
<div class="a" style="left:563px;top:728px;width:22px;height:27px;background:#efefef;"></div>
<svg class="i" style="left:567px;top:736px;" width="14" height="14" viewBox="0 0 14 14"><rect x="0.5" y="0.5" width="12" height="12" fill="none" stroke="#c9c9c9" stroke-width="1"/><path d="M3 6.5 L5.5 9.5 L10 3" fill="none" stroke="#b9b9b9" stroke-width="1.3"/></svg>
<div class="a" style="left:586px;top:728px;width:2px;height:28px;background:#2b7fd4;"></div>
<div class="a" style="left:680px;top:728px;width:2px;height:28px;background:#2b7fd4;"></div>
<svg class="i" style="left:588px;top:728px;" width="16" height="28" viewBox="0 0 16 28"><circle cx="8" cy="13.5" r="6.8" fill="#d9472b" stroke="none" stroke-width="1"/><rect x="4" y="12.2" width="8" height="2.6" fill="#fff"/></svg>
<div class="t" style="left:606.0px;top:737.0px;font-size:12.54px;color:#111;font-weight:normal;">Blocked</div>
<div class="a" style="left:682px;top:728px;width:127px;height:27px;background:#d9d9d9;"></div>
<svg class="i" style="left:682px;top:728px;" width="24" height="28" viewBox="0 0 24 28"><path d="M6.5 5.9 H10.9 V13.6 L7.6 17.6 L2.9 11.4 L3.2 9.6 L6.5 11.8 Z" fill="#666" stroke="#fff" stroke-width="0.9" stroke-linejoin="round"/><circle cx="14.3" cy="10.2" r="0.9" fill="#555"/><circle cx="12.9" cy="15.9" r="4.4" fill="#1f74c6" stroke="#fff" stroke-width="0.9"/><rect x="12.25" y="14.6" width="1.4" height="4" fill="#fff"/><circle cx="12.95" cy="13.2" r="0.85" fill="#fff"/></svg>
<div class="t" style="left:706.0px;top:736.0px;font-size:13.38px;color:#9a9a9a;font-weight:normal;">- Use the 'Additio</div>
<div class="a" style="left:809px;top:728px;width:1px;height:28px;background:#ececec;"></div>
<div class="t" style="left:812.2px;top:737.0px;font-size:12.70px;color:#111;font-weight:normal;letter-spacing:-0.9px">US</div>
<div class="a" style="left:865px;top:728px;width:1px;height:28px;background:#ececec;"></div>
<div class="t" style="left:868.8px;top:737.0px;font-size:12.59px;color:#111;font-weight:normal;">[2] Remote_Help_AddOn;l</div>
<div class="t" style="left:1020.5px;top:737.0px;font-size:12.20px;color:#111;font-weight:normal;">[2]&#8709;;&#8709;</div>
<div class="a" style="left:1017px;top:728px;width:1px;height:28px;background:#fff;"></div>
<div class="a" style="left:1081px;top:728px;width:1px;height:28px;background:#e3e3e3;"></div>
<div class="a" style="left:0px;top:783px;width:1081px;height:1px;background:#eeeeee;"></div>
<div class="a" style="left:20px;top:756px;width:1px;height:28px;background:#eeeeee;"></div>
<div class="a" style="left:40px;top:756px;width:1px;height:28px;background:#eeeeee;"></div>
<div class="a" style="left:65px;top:756px;width:1px;height:28px;background:#eeeeee;"></div>
<svg class="i" style="left:21px;top:756px;" width="20" height="28" viewBox="0 0 20 28"><circle cx="10" cy="10.4" r="4.2" fill="#2a7bc3"/><path d="M3 20.2 Q3 16.6 6 16.1 H14 Q17 16.6 17 20.2Z" fill="#2a7bc3"/></svg>
<div class="t" style="left:68.3px;top:765.0px;font-size:13.93px;color:#111;font-weight:normal;">Raleigh Mill</div>
<div class="a" style="left:241px;top:756px;width:1px;height:28px;background:#1d2b4a;"></div>
<div class="t" style="left:244.5px;top:764.0px;font-size:13.10px;color:#111;font-weight:normal;">Raleigh.Mill@sygx2.onmicrosoft.com</div>
<div class="a" style="left:497px;top:756px;width:1px;height:28px;background:#ececec;"></div>
<div class="t" style="left:500.0px;top:764.0px;font-size:13.36px;color:#111;font-weight:normal;">Member</div>
<div class="a" style="left:562px;top:756px;width:1px;height:28px;background:#fff;"></div>
<div class="a" style="left:563px;top:756px;width:22px;height:27px;background:#efefef;"></div>
<svg class="i" style="left:567px;top:764px;" width="14" height="14" viewBox="0 0 14 14"><rect x="0.5" y="0.5" width="12" height="12" fill="none" stroke="#c9c9c9" stroke-width="1"/><path d="M3 6.5 L5.5 9.5 L10 3" fill="none" stroke="#b9b9b9" stroke-width="1.3"/></svg>
<div class="a" style="left:586px;top:756px;width:2px;height:28px;background:#2b7fd4;"></div>
<div class="a" style="left:680px;top:756px;width:2px;height:28px;background:#2b7fd4;"></div>
<svg class="i" style="left:588px;top:756px;" width="16" height="28" viewBox="0 0 16 28"><circle cx="8" cy="13.5" r="6.8" fill="#d9472b" stroke="none" stroke-width="1"/><rect x="4" y="12.2" width="8" height="2.6" fill="#fff"/></svg>
<div class="t" style="left:606.0px;top:765.0px;font-size:12.54px;color:#111;font-weight:normal;">Blocked</div>
<div class="a" style="left:682px;top:756px;width:127px;height:27px;background:#d9d9d9;"></div>
<svg class="i" style="left:682px;top:756px;" width="24" height="28" viewBox="0 0 24 28"><path d="M6.5 5.9 H10.9 V13.6 L7.6 17.6 L2.9 11.4 L3.2 9.6 L6.5 11.8 Z" fill="#666" stroke="#fff" stroke-width="0.9" stroke-linejoin="round"/><circle cx="14.3" cy="10.2" r="0.9" fill="#555"/><circle cx="12.9" cy="15.9" r="4.4" fill="#1f74c6" stroke="#fff" stroke-width="0.9"/><rect x="12.25" y="14.6" width="1.4" height="4" fill="#fff"/><circle cx="12.95" cy="13.2" r="0.85" fill="#fff"/></svg>
<div class="t" style="left:706.0px;top:764.0px;font-size:13.38px;color:#9a9a9a;font-weight:normal;">- Use the 'Additio</div>
<div class="a" style="left:809px;top:756px;width:1px;height:28px;background:#ececec;"></div>
<div class="t" style="left:812.2px;top:765.0px;font-size:12.70px;color:#111;font-weight:normal;letter-spacing:-0.9px">US</div>
<div class="a" style="left:865px;top:756px;width:1px;height:28px;background:#ececec;"></div>
<div class="a" style="left:868.8px;top:756px;width:147.20000000000005px;height:27px;overflow:hidden">
<div class="t" style="left:0.0px;top:9.0px;font-size:12.43px;color:#111;font-weight:normal;">Remote_Help_AddOn</div>
</div>
<div class="a" style="left:1018px;top:756px;width:63px;height:27px;background:#d9d9d9;"></div>
<svg class="i" style="left:1017px;top:756px;" width="24" height="28" viewBox="0 0 24 28"><path d="M11.6 8.6 Q8.6 6.6 6.1 8.6 Q4.6 10.6 6.1 12.3 Q7.6 13.4 9.2 12.6" fill="none" stroke="#5a5a5a" stroke-width="1.5"/><path d="M8.4 6 V8.3" stroke="#5a5a5a" stroke-width="1.3"/><path d="M4.8 17 L8.4 19.8" stroke="#5a5a5a" stroke-width="1.5"/><circle cx="13.5" cy="15.9" r="4.5" fill="#1f74c6" stroke="#fff" stroke-width="0.9"/><rect x="12.85" y="14.6" width="1.4" height="4" fill="#fff"/><circle cx="13.55" cy="13.2" r="0.85" fill="#fff"/></svg>
<div class="t" style="left:1042.7px;top:765.0px;font-size:12.53px;color:#9a9a9a;font-weight:normal;">- Set li</div>
<div class="a" style="left:1017px;top:756px;width:1px;height:28px;background:#fff;"></div>
<div class="a" style="left:1081px;top:756px;width:1px;height:28px;background:#e3e3e3;"></div>
</div>
<div class="a" style="left:1858px;top:185px;width:16px;height:813px;background:linear-gradient(90deg,#ececec,#fafafa 40%,#fdfdfd);"></div>
<svg class="i" style="left:1860px;top:186px;" width="12" height="12" viewBox="0 0 12 12"><path d="M2 8 L6 4 L10 8Z" fill="#3c4a6e"/></svg>
<div class="a" style="left:1859px;top:202px;width:15px;height:636px;background:#8c8c8c;"></div>
<svg class="i" style="left:1860px;top:983px;" width="12" height="12" viewBox="0 0 12 12"><path d="M2 4 L6 8 L10 4Z" fill="#3c4a6e"/></svg>
<div class="a" style="left:1875px;top:184px;width:43px;height:814px;background:#955ba5;"></div>
<svg class="i" style="left:1877px;top:192px;" width="40" height="28" viewBox="0 0 40 28"><path d="M10 8 L5 14 L10 20" fill="none" stroke="#fff" stroke-width="1.8"/><rect x="16" y="1.8" width="17" height="23" fill="none" stroke="#fff" stroke-width="1.4"/><path d="M19 6.5 H20 M22 6.5 H30 M19 10.5 H20 M22 10.5 H30 M19 14.5 H20 M22 14.5 H27 M19 18.5 H20 M22 18.5 H30" stroke="#fff" stroke-width="1.2"/></svg>
<div class="a" style="left:0px;top:997px;width:1858px;height:1px;background:#e6e6e6;"></div>
<div class="a" style="left:0px;top:998px;width:1918px;height:20px;background:linear-gradient(#fdfdfd,#f5f5f5);"></div>
<div class="t" style="left:7.0px;top:1003.0px;font-size:12.79px;color:#111;font-weight:normal;">Rows Loaded: 258 | Rows Displayed: 34 | Rows Hidden: 224 | Rows Selected: 1</div>
<div class="a" style="left:0px;top:1018px;width:1918px;height:20px;background:#d3d3d3;"></div>
<div class="t" style="left:6.0px;top:1026.0px;font-size:10.38px;color:#333;font-weight:normal;">Ready</div>
<div class="t" style="left:1816.0px;top:1024.0px;font-size:11.20px;color:#a8a8a8;font-weight:normal;letter-spacing:-0.3px">CAP</div>
<div class="t" style="left:1848.5px;top:1024.0px;font-size:11.20px;color:#a8a8a8;font-weight:normal;letter-spacing:-0.6px">NUM</div>
<div class="t" style="left:1886.4px;top:1024.0px;font-size:11.20px;color:#a8a8a8;font-weight:normal;letter-spacing:-0.9px">SCRL</div>
<div class="a" style="left:379px;top:260px;width:466px;height:403px;background:#f0f0f0;border:1px solid #6f6f6f;box-shadow:0 4px 12px rgba(0,0,0,0.35)"></div>
<div class="a" style="left:380px;top:261px;width:464px;height:30px;background:#fff;"></div>
<svg class="i" style="left:387px;top:267px;" width="18" height="18" viewBox="0 0 18 18"><circle cx="8.5" cy="8.5" r="7.30" fill="none" stroke="#955ba5" stroke-width="1.35"/><path d="M4.20 5.30 L5.70 3.90 L7.60 4.90 L7.30 5.60Z M12.80 5.30 L11.30 3.90 L9.40 4.90 L9.70 5.60Z" fill="#955ba5"/><path d="M2.90 6.90 L7.40 6.90 L6.50 12.10 L5.00 13.30 L3.50 10.90Z M14.10 6.90 L9.60 6.90 L10.50 12.10 L12.00 13.30 L13.50 10.90Z" fill="#955ba5"/><path d="M6.60 14.10 L10.40 14.10 L9.10 11.30 L7.90 11.30Z" fill="#955ba5"/></svg>
<div class="t" style="left:409.3px;top:271.0px;font-size:11.94px;color:#111;font-weight:normal;">Select values to display in grid from column: Sign-in status</div>
<svg class="i" style="left:821px;top:268px;" width="16" height="16" viewBox="0 0 16 16"><path d="M2.5 1.5 L13.5 12.5 M13.5 1.5 L2.5 12.5" stroke="#222" stroke-width="1.1"/></svg>
<div class="a" style="left:391px;top:303px;width:13px;height:13px;background:#fff;border:1px solid #6d6d6d"></div>
<div class="a" style="left:393px;top:305px;width:9px;height:9px;background:#f4f4f4;border:1px solid #dadada"></div>
<div class="t" style="left:409.3px;top:305.0px;font-size:11.60px;color:#111;font-weight:normal;">Select All</div>
<div class="a" style="left:391px;top:325px;width:443px;height:251px;background:#fff;"></div>
<div class="a" style="left:391px;top:325px;width:367px;height:22px;background:#0078d7;"></div>
<div class="t" style="left:393.5px;top:330.0px;font-size:12.83px;color:#fff;font-weight:normal;">Sign-in status</div>
<svg class="i" style="left:744px;top:330px;" width="12" height="8" viewBox="0 0 12 8"><path d="M1.5 6.5 L6 2 L10.5 6.5Z" fill="#9fc7ee"/></svg>
<div class="a" style="left:758px;top:325px;width:76px;height:22px;background:#fff;border:1px solid #cfcfcf"></div>
<div class="t" style="left:761.3px;top:329.0px;font-size:12.51px;color:#111;font-weight:normal;">Selected</div>
<div class="a" style="left:391px;top:346px;width:443px;height:1px;background:#a8c7e8;"></div>
<div class="a" style="left:391px;top:347px;width:443px;height:27px;background:#0078d7;"></div>
<div class="a" style="left:757px;top:347px;width:1px;height:55px;background:#2b7fd4;"></div>
<div class="a" style="left:391px;top:347px;width:1px;height:55px;background:#2b7fd4;"></div>
<svg class="i" style="left:391px;top:351px;" width="18" height="18" viewBox="0 0 18 18"><circle cx="9.4" cy="9" r="7.3" fill="#2ea36a" stroke="#fff" stroke-width="1"/><path d="M5.5 9.2 L8.3 12 L13 6.5" fill="none" stroke="#fff" stroke-width="2"/></svg>
<div class="t" style="left:411.3px;top:355.0px;font-size:13.05px;color:#fff;font-weight:normal;">Allowed</div>
<div class="a" style="left:791px;top:354px;width:13px;height:13px;background:#fff;border:1px solid #aaa"></div>
<div class="a" style="left:793px;top:356px;width:9px;height:9px;background:#fff;border:1px solid #e2e2e2"></div>
<div class="a" style="left:391px;top:374px;width:443px;height:1px;background:#eeeeee;"></div>
<svg class="i" style="left:391px;top:379px;" width="18" height="18" viewBox="0 0 18 18"><circle cx="9.4" cy="9.4" r="7.3" fill="#d9472b"/><rect x="5" y="8.1" width="8.8" height="2.7" fill="#fff"/></svg>
<div class="t" style="left:411.3px;top:383.0px;font-size:12.51px;color:#111;font-weight:normal;">Blocked</div>
<div class="a" style="left:791px;top:382px;width:13px;height:13px;background:#fff;border:1px solid #999"></div>
<svg class="i" style="left:791px;top:382px;" width="13" height="13" viewBox="0 0 13 13"><path d="M3 6.5 L5.5 9.5 L10 3" fill="none" stroke="#555" stroke-width="1.3"/></svg>
<svg class="i" style="left:390px;top:580px;" width="16" height="16" viewBox="0 0 16 16"><circle cx="7.3" cy="7.8" r="6" fill="#fff" stroke="#c9a895" stroke-width="1"/><circle cx="7.3" cy="7.8" r="1.9" fill="#222"/></svg>
<div class="t" style="left:409.3px;top:583.0px;font-size:12.02px;color:#111;font-weight:normal;">Show anything that contains:</div>
<svg class="i" style="left:609px;top:579px;" width="16" height="16" viewBox="0 0 16 16"><circle cx="7" cy="7.7" r="6" fill="#fff" stroke="#e0b9a8" stroke-width="1"/></svg>
<div class="t" style="left:628.2px;top:582.0px;font-size:12.10px;color:#111;font-weight:normal;">Hide anything that contains:</div>
<div class="a" style="left:392px;top:599px;width:441px;height:21px;background:#fff;border:1px solid #8c8c8c"></div>
<div class="t" style="left:397.5px;top:604.0px;font-size:11.59px;color:#6d6d6d;font-weight:normal;">Enter a text filter here...</div>
<div class="a" style="left:680px;top:627px;width:77px;height:23px;background:linear-gradient(#fdf3c8,#fbd97a);border:1px solid #d9a441;border-radius:2px"></div>
<div class="a" style="left:683px;top:630px;width:71px;height:17px;background:transparent;border:1px dotted #333"></div>
<div class="t" style="left:710.0px;top:634.0px;font-size:11.33px;color:#111;font-weight:bold;text-decoration:underline">OK</div>
<div class="a" style="left:758px;top:627px;width:75px;height:23px;background:linear-gradient(#f2f2f2,#dcdcdc);border:1px solid #b5b5b5;border-radius:2px"></div>
<div class="t" style="left:777.0px;top:634.0px;font-size:11.47px;color:#111;font-weight:normal;">Cancel</div>
<svg class="i" style="left:836px;top:652px;" width="9" height="9" viewBox="0 0 9 9"><path d="M7 1 h1 v1 h-1z M4 4 h1 v1 h-1z M7 4 h1 v1 h-1z M1 7 h1 v1 h-1z M4 7 h1 v1 h-1z M7 7 h1 v1 h-1z" fill="#b5b5b5"/></svg>
<div class="a" style="left:325px;top:50px;width:91px;height:44px;background:transparent;border:3px solid #f91fa6;box-shadow:0 3px 6px rgba(0,0,0,0.35), inset 0 3px 5px rgba(0,0,0,0.25)"></div>
<div class="a" style="left:897px;top:194px;width:112px;height:43px;background:transparent;border:3px solid #f91fa6;box-shadow:0 3px 6px rgba(0,0,0,0.35), inset 0 3px 5px rgba(0,0,0,0.25)"></div>
<div class="a" style="left:112px;top:989px;width:138px;height:36px;background:transparent;border:3px solid #f91fa6;box-shadow:0 3px 6px rgba(0,0,0,0.35), inset 0 3px 5px rgba(0,0,0,0.25)"></div>
<svg class="i" style="left:0px;top:0px;pointer-events:none" width="1920" height="1038" viewBox="0 0 1920 1038"><defs><filter id="ash2" x="-20%" y="-20%" width="140%" height="140%"><feDropShadow dx="0" dy="3" stdDeviation="2.5" flood-color="#000" flood-opacity="0.4"/></filter></defs><g filter="url(#ash2)"><path d="M385 140 L423.5096846140067 221.34630008351976" stroke="#f91fa6" stroke-width="5" stroke-linecap="round"/><path d="M429.5 234 L415.42323960659036 222.96166603030449 L429.8846109397106 216.11559130345498Z" fill="#f91fa6"/></g></svg>
<svg class="i" style="left:0px;top:0px;pointer-events:none" width="1920" height="1038" viewBox="0 0 1920 1038"><defs><filter id="ash1" x="-20%" y="-20%" width="140%" height="140%"><feDropShadow dx="0" dy="3" stdDeviation="2.5" flood-color="#000" flood-opacity="0.4"/></filter></defs><g filter="url(#ash1)"><path d="M891 213 L835.3730308288589 242.44957191413354" stroke="#f91fa6" stroke-width="5" stroke-linecap="round"/><path d="M823 249 L833.3975048982007 234.443493142519 L840.8837084249052 248.58409980407197Z" fill="#f91fa6"/></g></svg>
<svg class="i" style="left:939px;top:141px;" width="60" height="60" viewBox="0 0 60 60"><defs><filter id="sh1" x="-50%" y="-50%" width="200%" height="200%"><feDropShadow dx="0" dy="3" stdDeviation="3" flood-color="#000" flood-opacity="0.45"/></filter></defs><circle cx="30" cy="30" r="20" fill="#f91fa6" filter="url(#sh1)"/><text x="30" y="40" text-anchor="middle" font-family="Liberation Sans" font-size="29" fill="#fff">1</text></svg>
<svg class="i" style="left:341px;top:86px;" width="60" height="60" viewBox="0 0 60 60"><defs><filter id="sh2" x="-50%" y="-50%" width="200%" height="200%"><feDropShadow dx="0" dy="3" stdDeviation="3" flood-color="#000" flood-opacity="0.45"/></filter></defs><circle cx="30" cy="30" r="20" fill="#f91fa6" filter="url(#sh2)"/><text x="30" y="40" text-anchor="middle" font-family="Liberation Sans" font-size="29" fill="#fff">2</text></svg>
<svg class="i" style="left:131px;top:931px;" width="60" height="60" viewBox="0 0 60 60"><defs><filter id="sh3" x="-50%" y="-50%" width="200%" height="200%"><feDropShadow dx="0" dy="3" stdDeviation="3" flood-color="#000" flood-opacity="0.45"/></filter></defs><circle cx="30" cy="30" r="20" fill="#f91fa6" filter="url(#sh3)"/><text x="30" y="40" text-anchor="middle" font-family="Liberation Sans" font-size="29" fill="#fff">3</text></svg>
</body></html>
